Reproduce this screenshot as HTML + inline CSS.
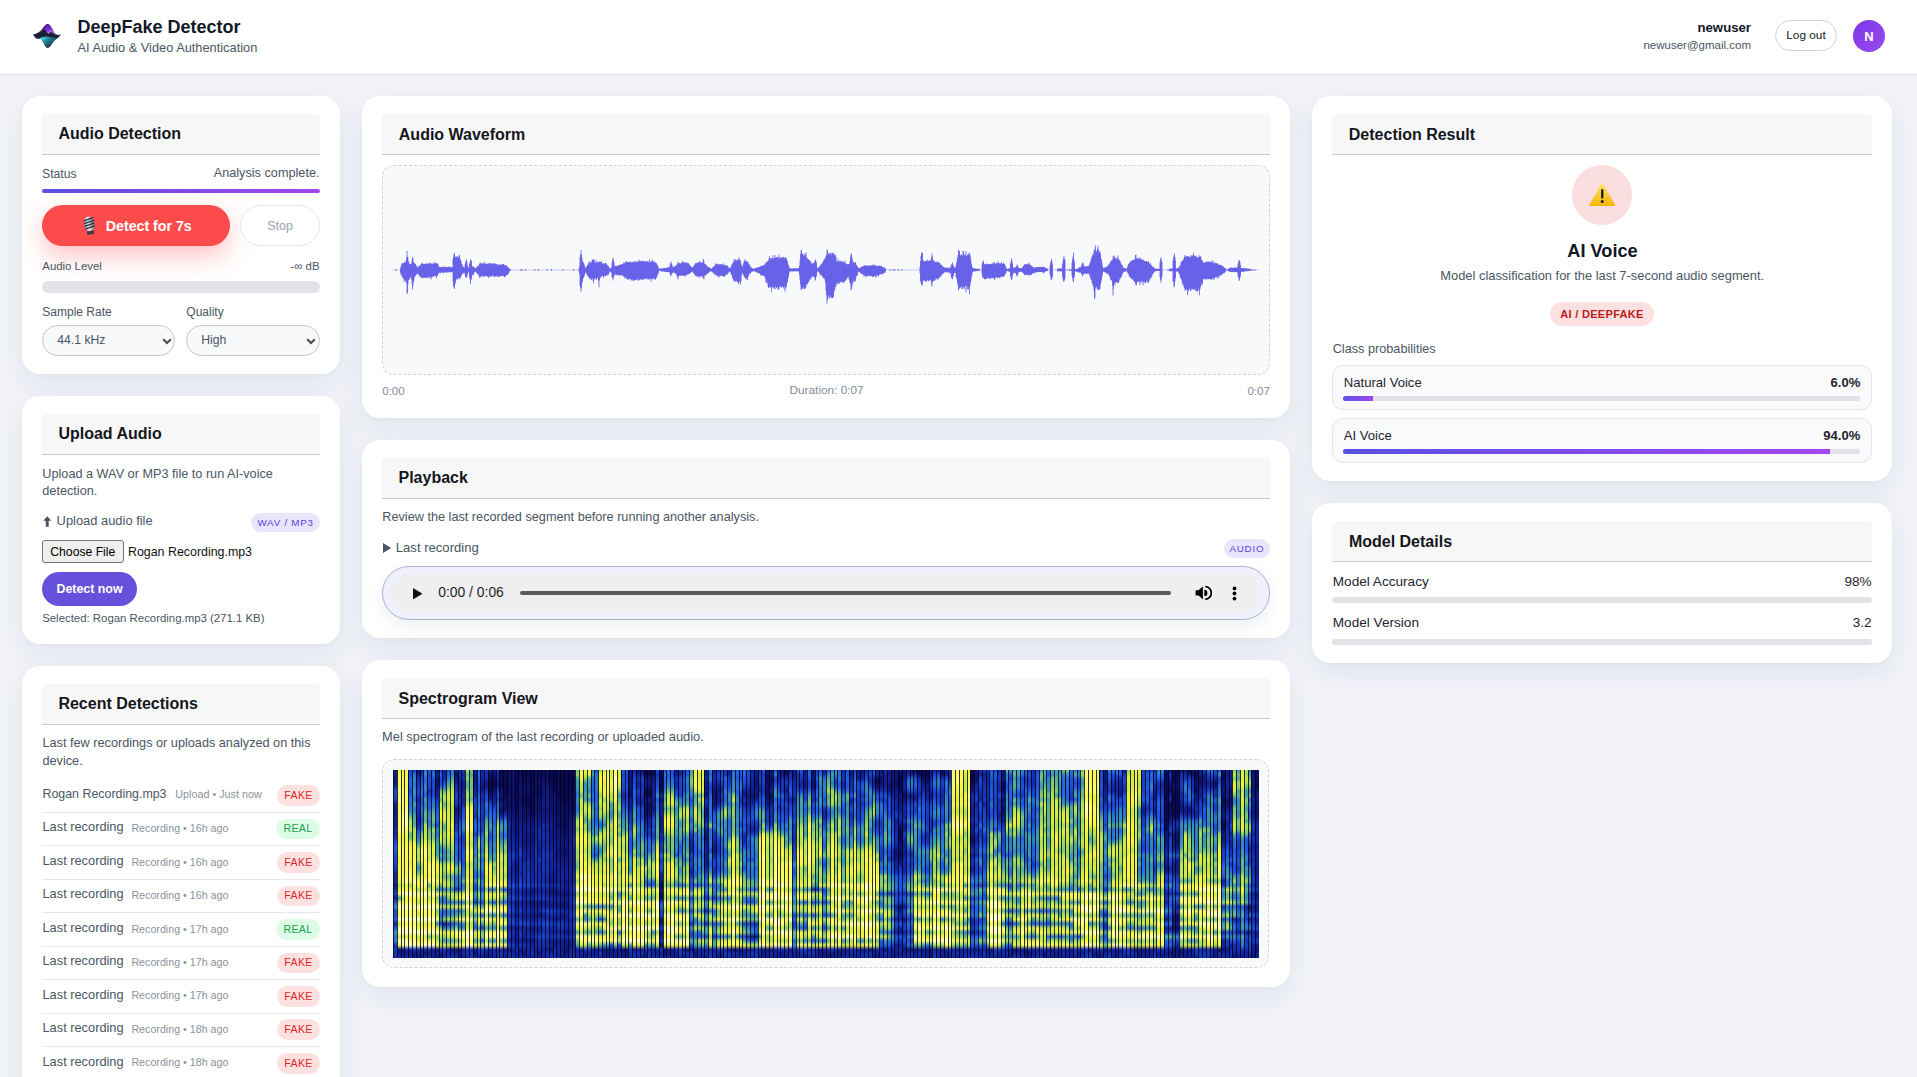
<!DOCTYPE html>
<html><head><meta charset="utf-8"><style>
*{box-sizing:border-box;margin:0;padding:0}
html,body{width:1917px;height:1077px;overflow:hidden}
body{background:#f1f3f8;font-family:"Liberation Sans",sans-serif;position:relative}
.t{position:absolute;white-space:nowrap}
.r{position:absolute}
.card{position:absolute;background:#fff;border-radius:18px;box-shadow:0 10px 28px rgba(40,50,90,0.075),0 1px 3px rgba(40,50,90,0.03)}
.sh{position:absolute;background:#f7f7f7;border-bottom:1px solid #cbcbcb;border-radius:5px 5px 0 0}
</style></head><body>
<div class="r" style="left:0.00px;top:0.00px;width:1917.00px;height:75.00px;background:#fff;border-bottom:1px solid #e3e5ea"></div>
<svg class="r" style="left:28px;top:18px" width="40" height="34" viewBox="0 0 1267 1077">
<defs>
<linearGradient id="lgp" x1="0.3" y1="0" x2="0.7" y2="1"><stop offset="0" stop-color="#5208a0"/><stop offset="0.55" stop-color="#7a30d0"/><stop offset="1" stop-color="#c8a0f8"/></linearGradient>
<radialGradient id="lgc" cx="0.1" cy="0.1" r="1.0"><stop offset="0" stop-color="#40ffff"/><stop offset="0.3" stop-color="#2a9cb0"/><stop offset="0.65" stop-color="#1d5a72"/><stop offset="1" stop-color="#10283c"/></radialGradient>
<linearGradient id="lgd" x1="0" y1="0" x2="0" y2="1"><stop offset="0" stop-color="#1c1226"/><stop offset="1" stop-color="#222a48"/></linearGradient>
</defs>
<path d="M160 510 C260 520 330 470 420 380 C500 290 560 190 615 190 C680 190 740 290 800 400 C850 480 900 540 960 540 C1000 540 1030 520 1040 510 C1010 590 950 640 870 680 C790 740 700 945 620 945 C560 945 480 720 400 650 C340 660 280 680 220 610 C190 570 170 540 160 510Z" fill="url(#lgd)"/>
<path d="M300 520 C380 470 460 330 615 190 C700 200 760 330 820 430 C850 480 880 520 900 530 C860 520 820 500 790 470 L720 445 L640 505 L580 420 L520 345 L420 430 Z" fill="url(#lgp)"/>
<path d="M380 640 C450 600 560 585 650 590 C760 595 850 620 930 630 C880 670 820 700 770 790 C720 870 670 945 620 945 C560 945 500 800 460 720 C430 680 410 655 380 640Z" fill="url(#lgc)" opacity="0.95"/><path d="M430 660 C500 720 560 820 610 840 C680 800 760 700 900 640" fill="none" stroke="#3ad8e8" stroke-width="18" opacity="0.55"/>
</svg>
<div class="t" style="top:17.56px;font-size:18px;line-height:18px;font-weight:700;color:#111827;left:77.50px;">DeepFake Detector</div>
<div class="t" style="top:41.96px;font-size:12.8px;line-height:12.8px;color:#4b5563;left:77.50px;">AI Audio &amp; Video Authentication</div>
<div class="t" style="top:21.03px;font-size:13.2px;line-height:13.2px;font-weight:700;color:#111827;right:166.00px;text-align:right;">newuser</div>
<div class="t" style="top:39.57px;font-size:11.5px;line-height:11.5px;color:#4b5563;right:166.00px;text-align:right;">newuser@gmail.com</div>
<div class="r" style="left:1775.30px;top:20.20px;width:61.50px;height:30.60px;border:1px solid #cfd3da;border-radius:16px;background:#fff"></div>
<div class="t" style="top:29.71px;font-size:11.8px;line-height:11.8px;color:#111827;left:1406.00px;width:800px;text-align:center;">Log out</div>
<div class="r" style="left:1853.00px;top:19.80px;width:32.00px;height:32.00px;border-radius:50%;background:linear-gradient(135deg,#7b35e6,#9b4cf0)"></div>
<div class="t" style="top:29.50px;font-size:13px;line-height:13px;font-weight:700;color:#fff;left:1469.00px;width:800px;text-align:center;">N</div>
<div class="card" style="left:22px;top:96px;width:318px;height:278px"></div>
<div class="card" style="left:22px;top:396px;width:318px;height:248px"></div>
<div class="card" style="left:22px;top:666px;width:318px;height:440px"></div>
<div class="card" style="left:362px;top:96px;width:928px;height:322px"></div>
<div class="card" style="left:362px;top:440px;width:928px;height:198px"></div>
<div class="card" style="left:362px;top:660px;width:928px;height:327px"></div>
<div class="card" style="left:1312px;top:96px;width:580px;height:385px"></div>
<div class="card" style="left:1312px;top:503px;width:580px;height:160px"></div>
<div class="sh" style="left:42px;top:114px;width:278px;height:41px"></div>
<div class="t" style="top:126.26px;font-size:16px;line-height:16px;font-weight:700;color:#14161c;left:58.40px;">Audio Detection</div>
<div class="t" style="top:167.67px;font-size:12.2px;line-height:12.2px;color:#4b5563;left:42.00px;">Status</div>
<div class="t" style="top:167.25px;font-size:12.7px;line-height:12.7px;color:#4b5563;right:1597.50px;text-align:right;">Analysis complete.</div>
<div class="r" style="left:42.00px;top:189.00px;width:278.00px;height:4.00px;border-radius:2px;background:linear-gradient(90deg,#5a50e3,#a446ef)"></div>
<div class="r" style="left:42.00px;top:205.00px;width:188.00px;height:41.00px;border-radius:21px;background:#fc4b4b;box-shadow:0 10px 24px rgba(252,75,75,0.34)"></div>
<svg class="r" style="left:82.5px;top:215.5px;transform:rotate(-9deg)" width="13" height="19" viewBox="0 0 13 19">
<defs><linearGradient id="mg" x1="0" y1="0" x2="1" y2="0"><stop offset="0" stop-color="#7d8894"/><stop offset="0.4" stop-color="#e8edf2"/><stop offset="1" stop-color="#5d6873"/></linearGradient></defs>
<rect x="1.5" y="0.5" width="10" height="14.5" rx="5" fill="url(#mg)"/>
<path d="M1.8 4 L11.2 2.2 M1.6 6.8 L11.4 5 M1.6 9.6 L11.4 7.8 M1.8 12.4 L11.2 10.6" stroke="#28323c" stroke-width="1.3"/>
<rect x="3" y="15" width="7" height="3.5" rx="1" fill="#3a3f45"/>
</svg>
<div class="t" style="top:219.18px;font-size:14.2px;line-height:14.2px;font-weight:700;color:#fff;left:105.80px;">Detect for 7s</div>
<div class="r" style="left:240.00px;top:205.00px;width:79.50px;height:41.00px;border-radius:21px;border:1px solid #e4e6ea;background:#fff"></div>
<div class="t" style="top:219.92px;font-size:12.5px;line-height:12.5px;color:#9ca3af;left:-120.00px;width:800px;text-align:center;">Stop</div>
<div class="t" style="top:260.95px;font-size:11.4px;line-height:11.4px;color:#4b5563;left:42.30px;">Audio Level</div>
<div class="t" style="top:260.95px;font-size:11.4px;line-height:11.4px;color:#4b5563;right:1597.50px;text-align:right;">-&#8734; dB</div>
<div class="r" style="left:42.00px;top:281.20px;width:278.00px;height:11.50px;border-radius:6px;background:#e2e3e8"></div>
<div class="t" style="top:305.94px;font-size:12px;line-height:12px;color:#4b5563;left:42.30px;">Sample Rate</div>
<div class="t" style="top:305.94px;font-size:12px;line-height:12px;color:#4b5563;left:186.30px;">Quality</div>
<div class="r" style="left:42.30px;top:325.20px;width:133.10px;height:30.60px;border-radius:16px;border:1px solid #c4c7cf;background:#f8f9fb"></div>
<div class="t" style="top:334.37px;font-size:12.2px;line-height:12.2px;color:#4b5563;left:57.30px;">44.1 kHz</div>
<svg class="r" style="left:162.0px;top:337.5px" width="10" height="7" viewBox="0 0 10 7"><path d="M1.2 1.2 L5 5 L8.8 1.2" fill="none" stroke="#4a4a4a" stroke-width="2"/></svg>
<div class="r" style="left:186.20px;top:325.20px;width:133.40px;height:30.60px;border-radius:16px;border:1px solid #c4c7cf;background:#f8f9fb"></div>
<div class="t" style="top:334.37px;font-size:12.2px;line-height:12.2px;color:#4b5563;left:201.20px;">High</div>
<svg class="r" style="left:306.2px;top:337.5px" width="10" height="7" viewBox="0 0 10 7"><path d="M1.2 1.2 L5 5 L8.8 1.2" fill="none" stroke="#4a4a4a" stroke-width="2"/></svg>
<div class="sh" style="left:42px;top:413.6px;width:278px;height:41px"></div>
<div class="t" style="top:425.96px;font-size:16px;line-height:16px;font-weight:700;color:#14161c;left:58.40px;">Upload Audio</div>
<div class="t" style="top:467.75px;font-size:12.7px;line-height:12.7px;color:#4b5563;left:42.30px;">Upload a WAV or MP3 file to run AI-voice</div>
<div class="t" style="top:485.25px;font-size:12.7px;line-height:12.7px;color:#4b5563;left:42.30px;">detection.</div>
<svg class="r" style="left:43.3px;top:516px" width="8.5" height="11" viewBox="0 0 8.5 11"><path d="M4.25 0.2 L8.3 4.8 H5.7 V10.8 H2.8 V4.8 H0.2 Z" fill="#4b5563"/></svg>
<div class="t" style="top:515.48px;font-size:12.9px;line-height:12.9px;color:#4b5563;left:56.60px;">Upload audio file</div>
<div class="r" style="left:251.00px;top:513.00px;width:68.80px;height:18.50px;border-radius:10px;background:#e9e5fd"></div>
<div class="t" style="top:518.00px;font-size:9.8px;line-height:9.8px;color:#5442d8;letter-spacing:0.75px;left:-114.40px;width:800px;text-align:center;">WAV / MP3</div>
<div class="r" style="left:42.20px;top:540.30px;width:81.60px;height:23.20px;border:1px solid #767676;border-radius:3px;background:#efefef"></div>
<div class="t" style="top:545.77px;font-size:12.2px;line-height:12.2px;color:#000;left:-317.20px;width:800px;text-align:center;">Choose File</div>
<div class="t" style="top:545.60px;font-size:12.4px;line-height:12.4px;color:#111;left:128.00px;">Rogan Recording.mp3</div>
<div class="r" style="left:42.00px;top:572.00px;width:95.00px;height:33.80px;border-radius:17px;background:#6650dc"></div>
<div class="t" style="top:582.70px;font-size:12.4px;line-height:12.4px;font-weight:700;color:#fff;left:-310.50px;width:800px;text-align:center;">Detect now</div>
<div class="t" style="top:613.15px;font-size:11.4px;line-height:11.4px;color:#4b5563;left:42.20px;">Selected: Rogan Recording.mp3 (271.1 KB)</div>
<div class="sh" style="left:42px;top:683.7px;width:278px;height:41px"></div>
<div class="t" style="top:695.96px;font-size:16px;line-height:16px;font-weight:700;color:#14161c;left:58.40px;">Recent Detections</div>
<div class="t" style="top:737.25px;font-size:12.7px;line-height:12.7px;color:#4b5563;left:42.50px;">Last few recordings or uploads analyzed on this</div>
<div class="t" style="top:754.95px;font-size:12.7px;line-height:12.7px;color:#4b5563;left:42.50px;">device.</div>
<div class="t" style="top:787.60px;font-size:12.4px;line-height:12.4px;color:#4b5563;left:42.50px;">Rogan Recording.mp3</div>
<div class="t" style="top:788.96px;font-size:10.8px;line-height:10.8px;color:#8a919c;left:175.20px;">Upload &#8226; Just now</div>
<div class="r" style="left:277.30px;top:785.10px;width:42.50px;height:20.80px;border-radius:11px;background:#fde1e1"></div>
<div class="t" style="top:789.93px;font-size:10.6px;line-height:10.6px;color:#dc2626;letter-spacing:0.3px;left:-101.50px;width:800px;text-align:center;">FAKE</div>
<div class="r" style="left:42.00px;top:811.70px;width:278.00px;height:1.00px;background:#e6e8ee"></div>
<div class="t" style="top:821.26px;font-size:12.8px;line-height:12.8px;color:#4b5563;left:42.50px;">Last recording</div>
<div class="t" style="top:823.04px;font-size:10.7px;line-height:10.7px;color:#8a919c;left:131.40px;">Recording &#8226; 16h ago</div>
<div class="r" style="left:276.00px;top:818.55px;width:43.80px;height:20.80px;border-radius:11px;background:#dcfce6"></div>
<div class="t" style="top:823.38px;font-size:10.6px;line-height:10.6px;color:#16a34a;letter-spacing:0.3px;left:-102.10px;width:800px;text-align:center;">REAL</div>
<div class="r" style="left:42.00px;top:845.19px;width:278.00px;height:1.00px;background:#e6e8ee"></div>
<div class="t" style="top:854.75px;font-size:12.8px;line-height:12.8px;color:#4b5563;left:42.50px;">Last recording</div>
<div class="t" style="top:856.53px;font-size:10.7px;line-height:10.7px;color:#8a919c;left:131.40px;">Recording &#8226; 16h ago</div>
<div class="r" style="left:277.30px;top:852.04px;width:42.50px;height:20.80px;border-radius:11px;background:#fde1e1"></div>
<div class="t" style="top:856.87px;font-size:10.6px;line-height:10.6px;color:#dc2626;letter-spacing:0.3px;left:-101.50px;width:800px;text-align:center;">FAKE</div>
<div class="r" style="left:42.00px;top:878.68px;width:278.00px;height:1.00px;background:#e6e8ee"></div>
<div class="t" style="top:888.24px;font-size:12.8px;line-height:12.8px;color:#4b5563;left:42.50px;">Last recording</div>
<div class="t" style="top:890.02px;font-size:10.7px;line-height:10.7px;color:#8a919c;left:131.40px;">Recording &#8226; 16h ago</div>
<div class="r" style="left:277.30px;top:885.53px;width:42.50px;height:20.80px;border-radius:11px;background:#fde1e1"></div>
<div class="t" style="top:890.36px;font-size:10.6px;line-height:10.6px;color:#dc2626;letter-spacing:0.3px;left:-101.50px;width:800px;text-align:center;">FAKE</div>
<div class="r" style="left:42.00px;top:912.17px;width:278.00px;height:1.00px;background:#e6e8ee"></div>
<div class="t" style="top:921.73px;font-size:12.8px;line-height:12.8px;color:#4b5563;left:42.50px;">Last recording</div>
<div class="t" style="top:923.51px;font-size:10.7px;line-height:10.7px;color:#8a919c;left:131.40px;">Recording &#8226; 17h ago</div>
<div class="r" style="left:276.00px;top:919.02px;width:43.80px;height:20.80px;border-radius:11px;background:#dcfce6"></div>
<div class="t" style="top:923.85px;font-size:10.6px;line-height:10.6px;color:#16a34a;letter-spacing:0.3px;left:-102.10px;width:800px;text-align:center;">REAL</div>
<div class="r" style="left:42.00px;top:945.66px;width:278.00px;height:1.00px;background:#e6e8ee"></div>
<div class="t" style="top:955.22px;font-size:12.8px;line-height:12.8px;color:#4b5563;left:42.50px;">Last recording</div>
<div class="t" style="top:957.00px;font-size:10.7px;line-height:10.7px;color:#8a919c;left:131.40px;">Recording &#8226; 17h ago</div>
<div class="r" style="left:277.30px;top:952.51px;width:42.50px;height:20.80px;border-radius:11px;background:#fde1e1"></div>
<div class="t" style="top:957.34px;font-size:10.6px;line-height:10.6px;color:#dc2626;letter-spacing:0.3px;left:-101.50px;width:800px;text-align:center;">FAKE</div>
<div class="r" style="left:42.00px;top:979.15px;width:278.00px;height:1.00px;background:#e6e8ee"></div>
<div class="t" style="top:988.71px;font-size:12.8px;line-height:12.8px;color:#4b5563;left:42.50px;">Last recording</div>
<div class="t" style="top:990.49px;font-size:10.7px;line-height:10.7px;color:#8a919c;left:131.40px;">Recording &#8226; 17h ago</div>
<div class="r" style="left:277.30px;top:986.00px;width:42.50px;height:20.80px;border-radius:11px;background:#fde1e1"></div>
<div class="t" style="top:990.83px;font-size:10.6px;line-height:10.6px;color:#dc2626;letter-spacing:0.3px;left:-101.50px;width:800px;text-align:center;">FAKE</div>
<div class="r" style="left:42.00px;top:1012.64px;width:278.00px;height:1.00px;background:#e6e8ee"></div>
<div class="t" style="top:1022.20px;font-size:12.8px;line-height:12.8px;color:#4b5563;left:42.50px;">Last recording</div>
<div class="t" style="top:1023.98px;font-size:10.7px;line-height:10.7px;color:#8a919c;left:131.40px;">Recording &#8226; 18h ago</div>
<div class="r" style="left:277.30px;top:1019.49px;width:42.50px;height:20.80px;border-radius:11px;background:#fde1e1"></div>
<div class="t" style="top:1024.32px;font-size:10.6px;line-height:10.6px;color:#dc2626;letter-spacing:0.3px;left:-101.50px;width:800px;text-align:center;">FAKE</div>
<div class="r" style="left:42.00px;top:1046.13px;width:278.00px;height:1.00px;background:#e6e8ee"></div>
<div class="t" style="top:1055.69px;font-size:12.8px;line-height:12.8px;color:#4b5563;left:42.50px;">Last recording</div>
<div class="t" style="top:1057.47px;font-size:10.7px;line-height:10.7px;color:#8a919c;left:131.40px;">Recording &#8226; 18h ago</div>
<div class="r" style="left:277.30px;top:1052.98px;width:42.50px;height:20.80px;border-radius:11px;background:#fde1e1"></div>
<div class="t" style="top:1057.81px;font-size:10.6px;line-height:10.6px;color:#dc2626;letter-spacing:0.3px;left:-101.50px;width:800px;text-align:center;">FAKE</div>
<div class="r" style="left:42.00px;top:1079.62px;width:278.00px;height:1.00px;background:#e6e8ee"></div>
<div class="sh" style="left:382px;top:114px;width:888px;height:41px"></div>
<div class="t" style="top:126.56px;font-size:16px;line-height:16px;font-weight:700;color:#14161c;left:398.80px;">Audio Waveform</div>
<div class="r" style="left:382.00px;top:165.00px;width:888.00px;height:210.00px;border:1px dashed #cfd3da;border-radius:12px;background:#f8f9fb"></div>
<svg class="r" style="left:393px;top:165px" width="867" height="210"><line x1="0" y1="104.89999999999998" x2="866" y2="104.89999999999998" stroke="#d6d4f3" stroke-width="1.4"/><path d="M3.0 104.0V105.8M7.5 103.2V107.6M8.0 101.6V109.8M8.5 99.7V110.0M9.0 98.6V111.0M9.5 98.2V112.8M10.0 98.5V112.7M10.5 98.6V113.0M11.0 97.8V116.9M11.5 97.5V114.7M12.0 96.8V115.5M12.5 97.9V116.4M13.0 95.9V115.3M13.5 92.9V118.2M14.0 85.9V128.8M14.5 91.6V128.1M15.0 92.8V119.4M15.5 97.2V115.1M16.0 96.7V115.0M16.5 99.0V113.8M17.0 99.8V112.4M17.5 99.0V112.4M18.0 100.8V112.0M18.5 98.4V114.6M19.0 95.1V118.7M19.5 91.9V124.6M20.0 93.2V121.2M20.5 97.2V116.9M21.0 98.3V115.5M21.5 97.9V111.9M22.0 98.9V110.8M22.5 98.9V111.1M23.0 100.0V109.6M23.5 101.0V109.7M24.0 101.9V108.7M24.5 102.7V108.5M25.0 102.4V108.7M25.5 101.6V109.3M26.0 101.2V110.0M26.5 101.3V111.3M27.0 100.0V111.2M27.5 100.3V111.4M28.0 99.4V112.5M28.5 98.7V113.1M29.0 98.7V112.5M29.5 97.6V112.7M30.0 99.5V111.8M30.5 99.1V113.0M31.0 99.0V112.7M31.5 98.9V112.2M32.0 98.9V112.8M32.5 99.0V112.8M33.0 98.6V112.6M33.5 98.2V113.0M34.0 99.1V112.7M34.5 99.2V112.0M35.0 99.0V111.9M35.5 98.1V112.1M36.0 99.1V113.3M36.5 97.9V112.4M37.0 98.1V111.9M37.5 98.8V111.9M38.0 99.2V114.4M38.5 98.8V112.4M39.0 97.9V112.6M39.5 98.9V111.3M40.0 99.1V111.8M40.5 98.9V111.3M41.0 96.8V111.1M41.5 98.7V111.0M42.0 98.1V111.0M42.5 98.1V111.4M43.0 98.0V111.1M43.5 98.9V113.1M44.0 97.8V110.9M44.5 99.1V110.4M45.0 98.8V109.4M45.5 100.8V108.6M46.0 101.9V108.4M46.5 101.9V107.6M47.0 101.8V107.6M47.5 102.0V108.4M48.0 102.3V107.4M48.5 102.3V107.4M49.0 102.0V107.4M49.5 102.1V107.3M50.0 101.8V107.8M50.5 101.8V108.2M51.0 102.2V107.5M51.5 102.1V107.2M52.0 101.3V107.2M52.5 102.3V107.4M53.0 102.0V107.5M53.5 102.2V107.6M54.0 102.0V107.1M54.5 102.0V107.4M55.0 102.1V107.3M55.5 101.9V107.3M56.0 101.3V107.1M56.5 102.2V107.0M57.0 102.0V107.2M57.5 102.4V107.3M58.0 102.1V107.2M58.5 102.2V106.9M59.0 102.3V107.2M59.5 102.2V107.0M60.0 94.3V116.7M60.5 91.6V121.4M61.0 89.0V122.7M61.5 87.7V123.9M62.0 91.6V119.0M62.5 92.4V117.7M63.0 91.6V114.7M63.5 92.2V113.5M64.0 91.3V113.3M64.5 92.6V114.7M65.0 90.9V113.5M65.5 92.9V113.0M66.0 92.1V113.3M66.5 89.9V113.0M67.0 93.3V114.2M67.5 94.9V112.3M68.0 95.9V111.4M68.5 98.5V110.2M69.0 99.0V109.5M69.5 101.4V108.8M70.0 102.0V108.4M70.5 101.6V108.1M71.0 102.5V107.8M71.5 102.8V107.6M72.0 99.6V109.5M72.5 97.7V111.7M73.0 95.4V112.7M73.5 94.7V113.0M74.0 96.8V111.2M74.5 100.2V109.3M75.0 102.9V107.0M75.5 102.7V107.3M76.0 102.4V107.6M76.5 99.0V112.5M77.0 96.8V114.6M77.5 94.2V119.1M78.0 96.4V115.0M78.5 95.6V113.7M79.0 101.0V110.2M79.5 101.6V109.4M80.0 101.3V110.2M80.5 101.7V110.1M81.0 102.2V108.0M81.5 102.9V107.3M82.0 103.2V106.6M82.5 103.2V106.5M83.0 103.0V107.0M83.5 102.1V107.8M84.0 101.9V108.4M84.5 101.6V108.6M85.0 100.9V109.3M85.5 100.6V109.5M86.0 100.0V110.6M86.5 99.0V112.5M87.0 97.7V112.8M87.5 97.9V111.6M88.0 98.7V111.5M88.5 98.7V110.8M89.0 99.2V110.6M89.5 98.0V111.6M90.0 98.8V110.8M90.5 99.2V111.5M91.0 96.8V110.8M91.5 98.8V111.9M92.0 99.0V111.0M92.5 98.7V110.6M93.0 98.0V110.8M93.5 99.2V111.1M94.0 99.2V110.6M94.5 98.9V111.6M95.0 98.9V111.9M95.5 98.3V113.0M96.0 98.2V111.8M96.5 99.2V110.9M97.0 97.9V111.1M97.5 98.6V111.8M98.0 98.2V111.7M98.5 98.8V111.0M99.0 99.2V110.8M99.5 99.2V110.6M100.0 97.9V111.8M100.5 99.1V110.7M101.0 98.6V110.9M101.5 98.3V111.6M102.0 99.1V111.7M102.5 98.7V111.6M103.0 98.9V110.7M103.5 98.9V111.1M104.0 99.4V111.7M104.5 100.0V111.2M105.0 99.5V110.6M105.5 100.2V111.9M106.0 100.0V111.8M106.5 99.4V111.9M107.0 99.5V110.8M107.5 99.9V110.9M108.0 99.9V110.5M108.5 99.8V111.0M109.0 99.3V110.6M109.5 99.2V111.4M110.0 99.2V111.0M110.5 99.1V110.7M111.0 100.0V111.3M111.5 100.4V112.3M112.0 99.9V110.4M112.5 100.2V111.9M113.0 100.7V110.4M113.5 100.9V109.9M114.0 101.4V110.0M114.5 101.5V109.9M115.0 102.4V109.2M115.5 102.9V108.2M116.0 103.3V107.3M116.5 104.0V106.2M117.5 104.0V105.8M128.0 104.0V105.8M129.0 104.0V105.8M132.5 104.0V105.8M142.0 104.0V105.8M145.5 104.0V105.8M154.0 104.0V105.8M158.5 104.0V105.8M170.0 104.0V105.8M180.5 104.0V105.8M186.0 103.3V106.6M186.5 101.7V108.8M187.0 92.0V121.2M187.5 89.8V122.4M188.0 85.1V126.6M188.5 89.1V123.3M189.0 93.0V117.9M189.5 96.5V116.6M190.0 97.6V113.9M190.5 97.2V112.5M191.0 98.7V111.9M191.5 100.2V110.4M192.0 102.1V108.7M192.5 103.1V107.3M193.0 102.8V107.4M193.5 101.9V108.6M194.0 101.0V109.6M194.5 100.0V110.7M195.0 99.5V110.8M195.5 98.6V111.9M196.0 96.1V112.4M196.5 97.4V113.2M197.0 97.7V114.3M197.5 98.0V113.1M198.0 97.2V114.2M198.5 97.3V115.0M199.0 95.0V113.6M199.5 95.0V113.2M200.0 94.2V115.8M200.5 94.3V118.3M201.0 94.6V114.8M201.5 96.4V113.9M202.0 97.7V114.2M202.5 97.9V112.7M203.0 95.0V113.5M203.5 96.8V114.8M204.0 97.8V113.1M204.5 97.5V112.8M205.0 97.5V113.4M205.5 97.3V116.0M206.0 96.4V122.3M206.5 96.6V115.1M207.0 96.9V112.4M207.5 97.0V112.6M208.0 98.2V112.4M208.5 96.2V111.3M209.0 98.2V111.0M209.5 98.6V110.9M210.0 98.9V110.7M210.5 98.3V112.8M211.0 98.5V111.2M211.5 99.5V110.5M212.0 98.8V111.3M212.5 98.1V111.0M213.0 98.4V111.0M213.5 98.6V109.9M214.0 100.1V109.8M214.5 100.6V110.1M215.0 100.3V110.1M215.5 101.4V109.5M216.0 102.3V108.2M216.5 103.1V106.7M217.0 103.5V106.1M217.5 103.5V106.8M218.0 103.2V107.5M218.5 102.7V107.7M219.0 98.2V112.5M219.5 95.3V112.7M220.0 92.4V115.4M220.5 94.8V112.6M221.0 97.0V111.5M221.5 100.4V109.9M222.0 101.6V109.5M222.5 101.1V109.3M223.0 101.5V109.4M223.5 101.0V110.2M224.0 100.7V109.5M224.5 100.8V109.8M225.0 101.0V110.2M225.5 100.5V110.4M226.0 100.0V110.0M226.5 100.2V110.1M227.0 100.3V109.9M227.5 99.5V110.7M228.0 99.5V109.8M228.5 99.2V110.1M229.0 99.7V110.5M229.5 99.4V109.9M230.0 99.0V111.1M230.5 97.4V111.4M231.0 99.0V111.7M231.5 97.8V112.2M232.0 98.1V113.4M232.5 97.5V112.5M233.0 96.2V113.3M233.5 96.5V113.3M234.0 97.3V113.7M234.5 97.1V114.9M235.0 96.9V113.6M235.5 97.1V114.5M236.0 97.6V113.7M236.5 97.0V113.3M237.0 97.6V114.5M237.5 96.3V114.0M238.0 97.9V115.3M238.5 97.3V114.4M239.0 97.6V115.6M239.5 97.4V114.3M240.0 96.6V115.4M240.5 96.7V115.3M241.0 96.8V115.7M241.5 98.0V115.3M242.0 96.3V114.9M242.5 96.4V114.9M243.0 97.1V115.1M243.5 96.9V114.3M244.0 96.3V114.5M244.5 97.2V113.7M245.0 97.6V115.4M245.5 96.2V115.4M246.0 94.5V113.4M246.5 96.8V115.2M247.0 95.8V114.4M247.5 96.9V114.0M248.0 95.8V114.6M248.5 96.8V114.0M249.0 95.9V115.1M249.5 96.3V115.1M250.0 95.9V113.4M250.5 95.8V114.1M251.0 96.1V114.7M251.5 96.7V113.4M252.0 96.5V113.4M252.5 96.4V113.8M253.0 97.4V113.9M253.5 96.3V113.0M254.0 96.5V114.4M254.5 96.6V113.6M255.0 95.8V114.2M255.5 97.4V114.6M256.0 97.4V114.1M256.5 94.5V113.2M257.0 97.1V114.5M257.5 97.3V113.2M258.0 97.1V116.6M258.5 96.2V114.2M259.0 94.7V113.5M259.5 96.3V113.7M260.0 97.3V114.3M260.5 96.2V113.5M261.0 97.5V113.7M261.5 96.6V113.5M262.0 97.6V115.0M262.5 97.8V114.1M263.0 97.9V113.3M263.5 98.5V112.3M264.0 99.8V111.8M264.5 100.1V109.8M265.0 101.7V108.9M265.5 102.6V107.5M266.0 103.4V106.2M267.0 103.7V106.0M267.5 103.7V106.0M268.0 103.6V106.2M268.5 103.6V106.3M269.0 103.5V106.2M269.5 103.5V106.4M270.0 103.4V106.4M270.5 103.4V106.4M271.0 103.3V106.5M271.5 103.0V106.8M272.0 103.3V106.8M272.5 103.0V106.9M273.0 102.8V106.8M273.5 103.0V107.1M274.0 103.0V106.8M274.5 102.1V107.0M275.0 102.5V107.0M275.5 102.4V107.2M276.0 102.5V107.1M276.5 102.5V107.2M277.0 100.0V108.7M277.5 98.3V110.7M278.0 96.4V110.9M278.5 98.7V109.3M279.0 99.6V108.7M279.5 101.3V107.7M280.0 102.1V107.7M280.5 101.9V107.4M281.0 102.2V107.7M281.5 101.3V107.6M282.0 101.9V107.7M282.5 101.0V108.5M283.0 100.5V108.7M283.5 100.0V109.6M284.0 99.4V111.0M284.5 98.9V112.7M285.0 96.9V114.5M285.5 98.1V111.6M286.0 98.3V110.8M286.5 98.1V110.5M287.0 98.5V109.9M287.5 98.5V110.8M288.0 98.5V110.5M288.5 97.8V109.9M289.0 97.7V111.1M289.5 95.9V110.1M290.0 97.3V110.2M290.5 97.3V110.9M291.0 97.3V110.6M291.5 97.3V110.1M292.0 98.1V111.7M292.5 97.8V110.3M293.0 97.2V110.6M293.5 98.4V109.8M294.0 97.6V109.6M294.5 98.5V109.4M295.0 97.7V109.2M295.5 98.3V109.2M296.0 99.2V108.9M296.5 99.7V108.8M297.0 100.7V108.2M297.5 101.3V107.6M298.0 101.3V107.7M298.5 102.0V107.1M299.0 102.8V106.7M299.5 103.3V106.3M300.0 102.0V107.3M300.5 101.6V107.8M301.0 100.9V108.7M301.5 99.9V109.3M302.0 98.5V110.3M302.5 98.5V110.5M303.0 97.9V111.3M303.5 98.5V111.3M304.0 98.0V110.6M304.5 97.8V111.5M305.0 97.1V111.6M305.5 98.0V110.8M306.0 97.4V113.0M306.5 95.9V111.1M307.0 98.3V111.0M307.5 97.2V111.4M308.0 97.2V111.8M308.5 98.1V111.6M309.0 98.4V111.1M309.5 97.5V110.6M310.0 96.2V112.9M310.5 94.0V113.5M311.0 95.9V114.2M311.5 99.1V110.8M312.0 99.5V110.3M312.5 99.2V109.8M313.0 99.7V108.9M313.5 100.6V110.1M314.0 101.3V108.9M314.5 101.5V108.0M315.0 101.7V107.9M315.5 102.4V108.3M316.0 102.7V107.2M316.5 102.3V106.9M317.0 103.2V106.5M317.5 103.6V106.2M318.0 103.8V106.1M318.5 103.7V106.4M319.0 103.2V106.7M319.5 102.7V107.1M320.0 102.1V107.8M320.5 101.9V108.3M321.0 101.1V108.4M321.5 101.2V108.9M322.0 100.3V109.4M322.5 98.3V109.6M323.0 99.3V110.5M323.5 99.7V110.1M324.0 99.0V110.8M324.5 98.7V110.9M325.0 99.2V111.5M325.5 99.4V111.4M326.0 98.8V112.7M326.5 99.7V110.7M327.0 99.4V110.7M327.5 99.1V110.8M328.0 99.2V110.6M328.5 99.6V110.6M329.0 99.1V111.1M329.5 99.9V111.2M330.0 98.4V110.5M330.5 100.4V110.8M331.0 99.9V112.0M331.5 99.7V111.9M332.0 100.1V110.5M332.5 100.7V109.7M333.0 100.2V110.0M333.5 100.5V110.1M334.0 100.5V109.5M334.5 101.0V109.0M335.0 101.8V108.3M335.5 102.5V107.5M336.0 102.7V107.2M336.5 102.9V106.5M337.0 103.9V106.0M337.5 102.8V106.9M338.0 101.7V109.3M338.5 100.4V109.4M339.0 99.4V110.7M339.5 98.7V112.9M340.0 98.0V113.8M340.5 97.0V115.0M341.0 94.1V116.5M341.5 95.6V116.0M342.0 94.5V116.5M342.5 95.7V116.3M343.0 94.2V115.6M343.5 95.5V115.7M344.0 95.8V116.6M344.5 94.9V117.1M345.0 95.3V116.9M345.5 94.2V119.3M346.0 92.3V117.4M346.5 95.8V116.8M347.0 94.6V115.3M347.5 95.6V119.5M348.0 98.4V116.3M348.5 99.9V111.0M349.0 103.1V107.0M349.5 101.7V107.9M350.0 100.3V109.3M350.5 98.4V109.9M351.0 96.2V111.3M351.5 95.7V112.3M352.0 94.1V111.3M352.5 96.6V113.9M353.0 96.1V112.2M353.5 96.1V113.5M354.0 96.6V114.5M354.5 97.0V115.0M355.0 96.8V112.1M355.5 98.8V111.0M356.0 99.6V109.4M356.5 99.6V108.7M357.0 100.7V108.6M357.5 102.0V108.1M358.0 102.4V107.5M358.5 102.8V106.8M359.0 103.2V106.7M359.5 103.4V106.4M360.0 103.7V106.3M360.5 103.9V105.9M361.0 103.6V106.1M361.5 103.5V106.3M362.0 103.4V106.6M362.5 103.1V106.6M363.0 102.9V106.9M363.5 103.0V107.2M364.0 102.7V107.3M364.5 102.4V107.8M365.0 102.2V107.8M365.5 102.1V108.1M366.0 102.0V108.2M366.5 102.1V108.5M367.0 101.7V108.8M367.5 101.3V109.6M368.0 101.0V110.8M368.5 101.1V109.6M369.0 101.0V110.2M369.5 100.8V110.4M370.0 100.1V110.8M370.5 100.5V110.2M371.0 100.1V111.0M371.5 100.5V111.4M372.0 98.8V112.4M372.5 98.6V113.9M373.0 97.6V118.1M373.5 96.8V116.8M374.0 97.1V117.2M374.5 96.5V118.0M375.0 95.9V121.3M375.5 95.4V122.5M376.0 93.1V123.1M376.5 91.2V122.0M377.0 94.6V121.2M377.5 93.1V122.4M378.0 95.0V121.5M378.5 93.0V127.1M379.0 93.7V121.9M379.5 93.5V121.9M380.0 90.4V122.8M380.5 93.4V122.3M381.0 94.0V123.9M381.5 92.6V123.2M382.0 90.0V124.4M382.5 92.8V121.1M383.0 92.8V121.8M383.5 92.2V123.1M384.0 93.5V122.0M384.5 91.8V122.0M385.0 92.2V124.9M385.5 93.6V124.6M386.0 89.6V123.7M386.5 93.5V121.8M387.0 92.8V121.4M387.5 92.0V121.3M388.0 93.2V120.8M388.5 93.7V122.7M389.0 92.3V122.2M389.5 92.1V120.9M390.0 91.8V122.4M390.5 92.3V122.2M391.0 93.0V123.6M391.5 94.0V120.7M392.0 92.0V126.8M392.5 92.7V123.7M393.0 92.5V120.2M393.5 93.9V122.3M394.0 95.3V117.6M394.5 96.5V117.2M395.0 99.0V114.0M395.5 100.4V111.6M396.0 101.5V108.7M396.5 103.4V106.7M397.0 103.6V106.2M397.5 103.5V106.3M398.0 103.6V106.3M398.5 103.6V106.3M399.0 103.6V106.4M399.5 103.6V106.4M400.0 103.5V106.4M400.5 103.1V106.2M401.0 103.5V106.2M401.5 103.5V106.2M402.0 103.4V106.2M402.5 103.3V106.2M403.0 103.4V106.3M403.5 103.4V106.2M404.0 103.5V106.2M404.5 103.4V106.2M405.0 103.6V106.2M405.5 103.3V106.4M406.0 103.0V106.9M406.5 100.6V110.3M407.0 95.7V115.5M407.5 89.3V119.6M408.0 85.4V124.8M408.5 84.8V124.8M409.0 89.0V123.6M409.5 88.6V122.6M410.0 88.6V123.6M410.5 91.0V121.3M411.0 90.1V124.1M411.5 90.5V123.6M412.0 88.7V123.8M412.5 90.0V123.2M413.0 87.4V122.1M413.5 93.3V118.8M414.0 92.3V119.1M414.5 93.6V119.4M415.0 94.9V116.8M415.5 94.2V117.4M416.0 96.2V116.4M416.5 95.0V114.5M417.0 96.4V114.6M417.5 96.5V113.0M418.0 97.4V114.0M418.5 99.0V111.9M419.0 98.9V111.0M419.5 98.1V111.3M420.0 98.0V111.5M420.5 98.6V111.9M421.0 98.4V111.1M421.5 96.8V111.9M422.0 96.2V114.6M422.5 94.3V115.5M423.0 96.0V112.0M423.5 98.0V111.3M424.0 102.2V107.3M424.5 103.4V106.3M425.0 103.5V106.2M425.5 102.7V106.9M426.0 102.0V107.5M426.5 101.4V108.2M427.0 101.1V108.5M427.5 99.9V110.3M428.0 99.7V109.6M428.5 99.2V110.0M429.0 98.4V110.8M429.5 97.6V111.3M430.0 97.3V112.7M430.5 95.8V113.1M431.0 94.8V113.1M431.5 94.1V113.3M432.0 93.7V115.3M432.5 91.8V117.9M433.0 91.8V125.5M433.5 89.8V130.4M434.0 84.4V138.8M434.5 85.9V135.8M435.0 87.7V130.3M435.5 89.3V130.3M436.0 89.8V133.1M436.5 88.1V133.3M437.0 90.3V130.5M437.5 88.1V131.4M438.0 89.5V133.0M438.5 90.0V131.9M439.0 87.3V133.3M439.5 88.2V133.1M440.0 88.0V131.6M440.5 88.6V132.2M441.0 91.0V126.3M441.5 90.3V125.7M442.0 88.9V123.6M442.5 90.3V121.4M443.0 91.8V121.3M443.5 96.5V117.5M444.0 96.2V118.4M444.5 96.5V119.1M445.0 93.5V118.8M445.5 96.3V116.7M446.0 96.0V117.5M446.5 96.8V118.8M447.0 95.5V117.2M447.5 96.5V116.5M448.0 96.2V117.3M448.5 96.8V116.8M449.0 96.7V117.1M449.5 97.4V116.6M450.0 96.1V117.8M450.5 96.6V117.6M451.0 97.9V117.9M451.5 97.7V116.2M452.0 95.6V115.4M452.5 98.2V116.1M453.0 98.9V113.6M453.5 98.8V114.7M454.0 99.1V113.6M454.5 99.4V112.3M455.0 100.3V112.2M455.5 99.2V111.5M456.0 98.9V114.3M456.5 99.2V115.2M457.0 95.8V117.9M457.5 91.7V119.5M458.0 88.8V125.2M458.5 88.7V124.4M459.0 92.4V121.6M459.5 94.9V117.2M460.0 97.3V118.4M460.5 97.2V115.2M461.0 97.6V115.8M461.5 97.8V116.4M462.0 97.6V116.6M462.5 97.1V115.5M463.0 99.3V112.6M463.5 100.2V111.2M464.0 100.9V110.6M464.5 101.4V110.1M465.0 102.5V107.3M465.5 103.5V106.5M466.0 103.4V106.8M466.5 103.2V107.2M467.0 102.8V107.5M467.5 102.8V107.4M468.0 102.4V108.9M468.5 101.9V108.6M469.0 101.8V108.5M469.5 101.3V109.1M470.0 101.2V109.8M470.5 101.3V109.5M471.0 100.9V111.5M471.5 100.7V109.9M472.0 100.6V110.5M472.5 100.5V111.1M473.0 100.3V112.2M473.5 100.5V111.1M474.0 101.0V111.3M474.5 100.9V110.5M475.0 101.1V110.7M475.5 100.3V111.1M476.0 100.4V110.5M476.5 101.1V110.5M477.0 100.8V111.2M477.5 100.4V111.0M478.0 100.8V111.1M478.5 100.2V110.5M479.0 100.6V111.6M479.5 100.5V111.7M480.0 99.5V111.6M480.5 100.5V111.8M481.0 100.5V111.4M481.5 99.5V110.8M482.0 100.9V110.9M482.5 100.6V111.5M483.0 100.9V112.8M483.5 101.0V110.4M484.0 100.5V111.0M484.5 101.3V110.1M485.0 100.9V110.3M485.5 100.8V111.7M486.0 101.0V109.7M486.5 100.4V109.6M487.0 101.2V109.3M487.5 101.4V109.2M488.0 101.3V109.2M488.5 100.9V108.7M489.0 102.1V109.4M489.5 102.2V109.0M490.0 102.0V108.3M490.5 102.3V108.3M491.0 102.7V107.7M491.5 102.8V108.1M492.0 103.2V107.4M492.5 103.7V106.3M497.0 104.0V105.8M500.0 104.0V105.8M502.0 104.0V105.8M505.5 104.0V105.8M509.0 104.0V105.8M527.0 101.9V108.3M527.5 95.9V116.0M528.0 90.9V118.2M528.5 88.2V119.8M529.0 87.1V120.8M529.5 88.1V118.9M530.0 94.8V114.6M530.5 96.4V115.5M531.0 96.4V116.1M531.5 96.5V114.9M532.0 96.2V116.0M532.5 95.8V116.5M533.0 95.8V116.0M533.5 96.4V116.5M534.0 96.1V114.9M534.5 94.7V114.6M535.0 96.4V116.0M535.5 95.9V116.2M536.0 96.7V116.1M536.5 94.8V115.1M537.0 96.2V115.1M537.5 96.0V114.5M538.0 95.0V115.8M538.5 92.4V119.4M539.0 88.2V121.7M539.5 91.7V117.3M540.0 95.3V114.9M540.5 95.4V115.9M541.0 95.4V115.6M541.5 97.2V115.7M542.0 96.7V115.4M542.5 97.1V114.3M543.0 97.0V113.5M543.5 97.5V113.5M544.0 96.9V114.1M544.5 97.3V114.5M545.0 96.4V114.6M545.5 97.3V113.0M546.0 97.8V113.1M546.5 98.1V112.1M547.0 98.1V112.4M547.5 99.8V111.6M548.0 99.7V110.4M548.5 99.8V110.2M549.0 100.3V109.5M549.5 101.1V109.1M550.0 101.7V108.5M550.5 102.1V108.1M551.0 102.6V107.8M551.5 102.6V106.9M552.0 102.7V107.2M552.5 102.9V106.9M553.0 102.6V107.4M553.5 102.8V107.0M554.0 102.8V107.3M554.5 102.8V107.3M555.0 103.0V107.2M555.5 102.9V107.2M556.0 102.7V107.6M556.5 102.7V107.6M557.0 102.9V108.2M557.5 102.6V107.5M558.0 100.9V110.3M558.5 99.4V112.9M559.0 98.5V113.6M559.5 97.6V114.2M560.0 99.8V112.0M560.5 101.1V110.5M561.0 102.8V108.0M561.5 102.7V107.5M562.0 102.7V108.0M562.5 102.5V107.9M563.0 100.8V111.9M563.5 98.0V113.2M564.0 95.6V114.9M564.5 92.8V118.0M565.0 90.2V120.4M565.5 84.6V125.6M566.0 87.8V122.1M566.5 86.0V123.7M567.0 90.2V122.5M567.5 90.6V122.6M568.0 90.2V121.9M568.5 89.2V121.6M569.0 90.6V124.1M569.5 90.7V123.8M570.0 86.0V121.3M570.5 86.0V121.4M571.0 89.3V123.4M571.5 89.9V124.2M572.0 90.3V121.3M572.5 90.5V120.9M573.0 86.0V127.4M573.5 91.3V120.6M574.0 91.4V121.2M574.5 89.5V124.3M575.0 90.3V122.1M575.5 88.6V124.4M576.0 90.8V121.1M576.5 87.8V129.1M577.0 89.7V121.3M577.5 92.3V117.7M578.0 95.6V115.6M578.5 99.1V111.7M579.0 101.2V110.0M579.5 103.1V107.2M580.0 103.5V106.4M580.5 103.4V106.4M581.0 103.6V106.1M581.5 103.5V106.3M582.0 103.7V106.2M582.5 103.8V106.2M583.0 103.6V106.0M583.5 103.9V106.1M584.0 103.8V106.0M584.5 103.8V105.9M585.0 103.8V105.9M585.5 103.9V105.9M586.5 103.9V105.9M589.0 100.1V108.9M589.5 96.9V111.7M590.0 96.9V113.4M590.5 95.6V112.8M591.0 98.8V112.8M591.5 99.7V114.2M592.0 99.6V114.1M592.5 99.1V114.2M593.0 99.2V114.0M593.5 98.7V113.9M594.0 99.6V113.3M594.5 98.7V112.7M595.0 99.3V112.7M595.5 99.2V112.8M596.0 98.8V113.4M596.5 99.3V114.1M597.0 99.0V114.0M597.5 99.3V112.3M598.0 99.3V113.3M598.5 98.7V112.8M599.0 98.9V113.7M599.5 98.8V112.7M600.0 97.2V112.2M600.5 99.3V113.0M601.0 98.6V113.2M601.5 97.1V115.1M602.0 98.9V113.7M602.5 99.4V112.7M603.0 98.3V111.9M603.5 98.2V112.1M604.0 98.1V112.7M604.5 98.7V113.0M605.0 96.2V112.0M605.5 98.1V112.3M606.0 97.9V113.3M606.5 99.0V112.7M607.0 98.0V111.8M607.5 99.1V112.3M608.0 98.6V112.1M608.5 96.8V111.1M609.0 98.9V112.2M609.5 98.9V111.1M610.0 98.8V112.0M610.5 98.1V111.4M611.0 98.4V110.9M611.5 99.0V110.5M612.0 100.1V109.9M612.5 101.4V108.5M613.0 102.2V108.2M613.5 103.6V106.4M614.5 103.9V106.0M615.0 103.8V106.1M615.5 103.6V106.2M616.0 103.6V106.4M616.5 103.4V106.7M617.0 103.3V107.1M617.5 98.6V111.5M618.0 96.5V113.5M618.5 93.3V115.3M619.0 95.1V113.9M619.5 98.2V110.7M620.0 102.2V108.0M620.5 102.6V108.5M621.0 102.7V107.9M621.5 102.8V107.8M622.0 102.8V107.4M622.5 102.6V107.8M623.0 101.7V108.9M623.5 101.3V110.1M624.0 99.5V111.5M624.5 100.7V110.5M625.0 101.7V109.1M625.5 103.0V107.2M626.0 103.1V107.0M626.5 103.2V106.9M627.0 103.2V106.7M627.5 103.2V106.7M628.0 103.4V106.5M628.5 103.4V106.5M629.0 103.1V106.7M629.5 102.4V107.4M630.0 101.9V108.0M630.5 100.9V108.5M631.0 100.5V108.5M631.5 99.4V110.0M632.0 99.5V109.4M632.5 99.3V109.7M633.0 99.0V110.3M633.5 99.3V109.7M634.0 99.7V109.5M634.5 98.8V109.6M635.0 99.4V109.5M635.5 99.7V110.3M636.0 97.7V109.8M636.5 98.8V110.5M637.0 99.9V110.1M637.5 100.6V109.5M638.0 100.7V109.5M638.5 100.7V110.0M639.0 101.3V108.8M639.5 101.8V108.2M640.0 102.0V108.5M640.5 102.4V108.3M641.0 102.7V107.5M641.5 102.8V107.8M642.0 102.8V107.5M642.5 102.3V107.6M643.0 102.2V107.1M643.5 102.3V107.4M644.0 102.3V106.8M644.5 102.2V107.0M645.0 102.0V107.0M645.5 102.1V107.0M646.0 102.3V107.2M646.5 102.0V107.0M647.0 101.8V107.0M647.5 102.1V106.9M648.0 102.2V107.0M648.5 102.1V106.9M649.0 102.1V107.0M649.5 102.1V107.2M650.0 102.4V107.5M650.5 101.3V108.3M651.0 102.2V107.9M651.5 102.4V106.9M652.0 102.7V106.5M652.5 103.0V106.5M653.0 103.1V106.3M653.5 103.4V106.1M654.0 103.6V106.0M654.5 103.8V105.9M657.0 100.6V109.6M657.5 97.8V111.2M658.0 96.3V114.7M658.5 93.8V114.8M659.0 96.2V113.4M659.5 99.5V111.4M664.5 103.8V106.3M665.0 103.7V106.0M665.5 103.7V106.2M666.0 103.7V106.3M666.5 103.5V106.2M667.0 103.6V106.2M667.5 103.6V106.2M668.0 103.6V106.2M668.5 103.5V106.3M669.0 103.4V106.2M669.5 98.9V111.3M670.0 95.9V114.1M670.5 93.2V116.4M671.0 90.8V116.5M671.5 94.5V115.2M672.0 94.2V113.1M674.0 104.0V105.8M676.5 104.0V105.8M677.0 104.2V106.2M678.5 104.0V106.1M679.0 97.9V110.9M679.5 94.3V112.8M680.0 91.6V116.3M680.5 87.6V116.9M681.0 94.6V112.9M681.5 97.3V110.6M682.0 104.1V106.3M682.5 104.1V106.3M683.0 104.2V106.4M683.5 104.2V106.3M684.0 103.9V106.6M684.5 103.7V106.6M685.0 103.6V107.4M685.5 103.3V107.2M686.0 102.9V107.0M686.5 102.2V107.5M687.0 101.9V107.5M687.5 102.5V107.4M688.0 102.1V107.6M688.5 101.0V109.3M689.0 98.9V109.1M689.5 97.5V111.3M690.0 97.8V110.5M690.5 99.7V108.9M691.0 101.1V108.3M691.5 101.7V108.7M692.0 101.7V108.4M692.5 101.5V108.4M693.0 101.0V108.7M693.5 101.6V108.7M694.0 101.0V108.5M694.5 101.7V108.7M695.0 101.3V108.2M695.5 101.7V108.5M696.0 100.2V108.8M696.5 99.3V109.9M697.0 98.1V111.8M697.5 96.8V112.9M698.0 94.6V114.8M698.5 93.3V115.1M699.0 91.5V118.0M699.5 90.4V118.4M700.0 88.9V121.1M700.5 89.7V121.6M701.0 86.1V126.4M701.5 83.8V134.2M702.0 86.7V132.6M702.5 80.6V123.4M703.0 86.4V121.8M703.5 86.9V121.9M704.0 85.5V123.9M704.5 83.9V123.4M705.0 80.6V125.4M705.5 84.6V124.7M706.0 87.3V124.1M706.5 87.2V124.8M707.0 86.0V123.7M707.5 89.1V119.9M708.0 93.3V117.2M708.5 94.6V115.2M709.0 97.8V112.0M709.5 100.9V109.4M710.0 103.3V106.6M710.5 103.3V106.5M711.0 103.1V106.9M711.5 102.6V106.8M712.0 102.8V107.2M712.5 102.4V107.6M713.0 102.3V107.5M713.5 101.8V107.9M714.0 101.3V109.0M714.5 101.8V108.0M715.0 100.8V109.3M715.5 100.2V109.1M716.0 99.4V109.9M716.5 98.9V111.0M717.0 97.7V112.1M717.5 96.8V114.9M718.0 96.0V113.8M718.5 95.4V115.1M719.0 95.6V116.0M719.5 95.0V120.9M720.0 90.7V130.7M720.5 92.6V124.3M721.0 93.3V119.7M721.5 90.5V118.1M722.0 92.7V120.2M722.5 93.3V117.7M723.0 94.3V117.4M723.5 94.1V117.1M724.0 92.5V116.2M724.5 94.0V117.7M725.0 90.5V118.0M725.5 93.6V118.0M726.0 94.5V116.3M726.5 95.6V114.3M727.0 95.8V114.2M727.5 97.2V112.4M728.0 98.6V112.7M728.5 99.8V111.4M729.0 99.8V110.2M729.5 100.7V108.7M730.0 102.2V107.9M730.5 102.8V106.9M731.0 103.2V106.9M731.5 103.1V106.7M732.0 103.3V106.4M732.5 103.5V106.2M733.0 103.8V106.0M734.0 102.9V106.8M734.5 101.8V107.3M735.0 100.4V108.6M735.5 99.3V108.9M736.0 98.8V110.5M736.5 97.8V111.5M737.0 97.2V112.2M737.5 96.5V112.6M738.0 97.1V112.5M738.5 96.2V113.8M739.0 95.1V114.1M739.5 95.3V114.3M740.0 95.7V114.3M740.5 95.0V115.6M741.0 94.7V116.2M741.5 94.1V116.5M742.0 95.3V117.3M742.5 90.1V118.9M743.0 89.7V120.6M743.5 93.7V119.7M744.0 93.8V117.1M744.5 93.3V116.5M745.0 93.6V117.1M745.5 93.8V116.5M746.0 92.5V117.1M746.5 94.3V116.4M747.0 92.4V120.2M747.5 94.5V116.5M748.0 94.5V117.6M748.5 94.1V115.7M749.0 94.0V116.6M749.5 95.1V115.7M750.0 95.5V120.2M750.5 94.7V117.2M751.0 96.0V116.0M751.5 95.8V117.4M752.0 95.8V117.3M752.5 96.9V118.1M753.0 96.3V115.8M753.5 96.2V115.6M754.0 96.6V117.5M754.5 97.0V116.3M755.0 97.2V117.1M755.5 96.0V118.0M756.0 99.1V116.0M756.5 99.1V114.4M757.0 97.7V114.2M757.5 98.3V113.3M758.0 100.0V112.9M758.5 100.4V111.9M759.0 101.0V111.1M759.5 101.7V109.5M760.0 101.9V108.8M760.5 102.3V108.0M761.0 102.9V107.3M761.5 103.4V106.7M762.0 103.6V106.6M762.5 103.7V106.1M763.0 103.6V106.0M763.5 103.9V106.2M764.0 103.9V106.0M764.5 103.9V105.9M765.0 103.9V105.9M765.5 103.8V105.9M766.5 103.6V106.0M767.0 96.9V112.6M767.5 93.7V115.2M768.0 92.1V117.8M768.5 95.6V113.7M769.0 97.1V111.3M775.0 103.8V105.8M776.5 104.0V106.2M777.0 103.9V105.9M777.5 103.7V106.3M778.0 103.7V106.0M778.5 103.7V106.2M779.0 103.7V106.1M779.5 103.6V106.2M780.0 95.7V116.6M780.5 92.8V117.0M781.0 90.5V122.4M781.5 88.5V121.4M782.0 92.0V116.3M782.5 95.6V113.0M783.0 103.4V106.5M783.5 103.6V106.4M784.0 103.4V106.3M784.5 103.4V106.4M785.0 103.4V106.3M785.5 102.9V107.2M786.0 102.1V108.5M786.5 101.5V109.3M787.0 100.4V111.3M787.5 100.1V113.1M788.0 96.9V113.4M788.5 97.2V114.5M789.0 96.4V116.3M789.5 95.5V118.7M790.0 95.0V120.5M790.5 95.2V118.8M791.0 92.7V122.2M791.5 91.5V123.3M792.0 90.1V125.9M792.5 91.9V124.6M793.0 92.0V124.4M793.5 90.9V123.9M794.0 92.0V125.1M794.5 91.2V130.1M795.0 92.6V124.9M795.5 91.2V126.4M796.0 91.3V123.6M796.5 92.2V124.3M797.0 92.4V123.0M797.5 91.8V125.8M798.0 91.8V125.8M798.5 90.3V123.5M799.0 91.0V124.1M799.5 90.4V124.0M800.0 91.4V123.3M800.5 87.8V124.8M801.0 91.7V122.7M801.5 90.6V124.8M802.0 92.1V123.7M802.5 90.7V125.5M803.0 92.7V122.6M803.5 91.4V126.0M804.0 92.3V126.7M804.5 92.9V126.7M805.0 92.7V125.3M805.5 92.1V122.9M806.0 90.1V125.2M806.5 92.2V130.1M807.0 91.2V124.3M807.5 91.1V122.1M808.0 92.8V121.4M808.5 95.1V118.6M809.0 95.1V118.2M809.5 96.0V119.5M810.0 97.2V113.9M810.5 97.8V113.6M811.0 97.8V114.4M811.5 97.7V114.4M812.0 97.7V113.9M812.5 97.1V114.2M813.0 97.9V113.7M813.5 96.4V114.6M814.0 97.0V113.3M814.5 96.5V113.7M815.0 97.8V114.5M815.5 96.5V113.7M816.0 96.8V113.8M816.5 96.6V114.0M817.0 97.5V114.1M817.5 97.4V114.4M818.0 96.7V114.2M818.5 96.7V114.5M819.0 95.4V114.6M819.5 97.6V113.6M820.0 97.7V112.5M820.5 98.5V113.4M821.0 96.2V115.2M821.5 98.6V113.2M822.0 98.0V112.0M822.5 98.2V112.2M823.0 98.0V112.6M823.5 98.5V112.0M824.0 98.4V112.1M824.5 98.7V113.5M825.0 98.8V111.7M825.5 99.8V111.0M826.0 99.7V112.8M826.5 100.1V110.3M827.0 100.1V110.6M827.5 99.7V110.5M828.0 100.3V109.9M828.5 100.5V110.0M829.0 101.2V108.9M829.5 101.1V109.3M830.0 100.9V108.3M830.5 102.2V108.2M831.0 102.5V107.8M831.5 102.8V108.0M832.0 103.1V107.0M832.5 103.3V106.6M833.0 103.8V106.1M835.0 103.9V106.0M835.5 103.5V106.0M836.0 103.5V106.7M836.5 103.2V106.4M837.0 103.2V106.8M837.5 102.5V106.9M838.0 102.7V106.8M838.5 102.9V107.1M839.0 102.6V106.8M839.5 103.0V106.8M840.0 102.8V107.2M840.5 102.8V106.9M841.0 102.7V107.1M841.5 102.8V107.2M842.0 103.0V107.0M842.5 102.6V107.0M843.0 102.2V107.0M843.5 102.7V106.8M844.0 102.6V107.6M844.5 102.7V107.6M845.0 98.9V111.0M845.5 97.1V112.9M846.0 95.0V115.9M846.5 95.5V115.3M847.0 97.0V112.7M847.5 100.0V110.8M848.0 103.2V106.9M848.5 103.2V106.8M849.0 103.1V106.8M849.5 103.3V106.6M850.0 103.0V106.6M850.5 103.2V106.6M851.0 103.2V106.4M851.5 103.3V106.5M852.0 103.3V106.2M852.5 103.4V106.3M853.0 103.2V106.1M853.5 103.7V106.2M854.0 103.5V106.2M854.5 103.7V106.1M855.0 103.9V106.0M855.5 103.8V105.9M856.0 103.8V105.9M856.5 103.9V105.9M857.0 103.8V106.0M858.0 104.0V105.8M859.5 104.0V105.8M862.0 104.0V105.8" stroke="#5d57e7" stroke-width="0.8" fill="none"/></svg>
<div class="t" style="top:385.18px;font-size:11.6px;line-height:11.6px;color:#858c99;left:382.20px;">0:00</div>
<div class="t" style="top:385.01px;font-size:11.8px;line-height:11.8px;color:#858c99;left:426.60px;width:800px;text-align:center;">Duration: 0:07</div>
<div class="t" style="top:385.18px;font-size:11.6px;line-height:11.6px;color:#858c99;right:647.00px;text-align:right;">0:07</div>
<div class="sh" style="left:382px;top:458px;width:888px;height:41px"></div>
<div class="t" style="top:470.46px;font-size:16px;line-height:16px;font-weight:700;color:#14161c;left:398.50px;">Playback</div>
<div class="t" style="top:511.25px;font-size:12.7px;line-height:12.7px;color:#4b5563;left:382.30px;">Review the last recorded segment before running another analysis.</div>
<svg class="r" style="left:382.8px;top:543px" width="9" height="10" viewBox="0 0 9 10"><path d="M0 0 L8.2 5 L0 10Z" fill="#4b5563"/></svg>
<div class="t" style="top:540.91px;font-size:13.1px;line-height:13.1px;color:#4b5563;left:395.80px;">Last recording</div>
<div class="r" style="left:1224.00px;top:538.90px;width:45.60px;height:18.80px;border-radius:10px;background:#e9e5fd"></div>
<div class="t" style="top:543.60px;font-size:9.8px;line-height:9.8px;color:#5442d8;letter-spacing:0.8px;left:846.90px;width:800px;text-align:center;">AUDIO</div>
<div class="r" style="left:382.30px;top:566.30px;width:887.70px;height:53.60px;border:1px solid #aab3cf;border-radius:27px;background:#eff0fc;box-shadow:0 6px 16px rgba(40,50,90,0.08)"></div>
<div class="r" style="left:390.90px;top:573.30px;width:870.50px;height:39.50px;border-radius:20px;background:#efeff2"></div>
<svg class="r" style="left:413.2px;top:587.5px" width="10" height="11.5" viewBox="0 0 10 11.5"><path d="M0 0 L9.5 5.75 L0 11.5Z" fill="#111"/></svg>
<div class="t" style="top:586.23px;font-size:13.9px;line-height:13.9px;color:#1f1f1f;left:438.20px;">0:00 / 0:06</div>
<div class="r" style="left:520.00px;top:590.80px;width:650.50px;height:4.00px;border-radius:2px;background:#5c5c5c"></div>
<svg class="r" style="left:1194.9px;top:585px" width="17" height="16" viewBox="0 0 17 16"><path d="M0.6 5.2 H3.6 L7.9 1.3 V14.5 L3.6 10.6 H0.6 Z" fill="#000"/><path d="M9.3 4.7 A3.1 3.2 0 0 1 9.3 11.1 Z" fill="#000"/><path d="M10.2 1.5 A6.1 6.4 0 0 1 10.2 14.3" fill="none" stroke="#000" stroke-width="1.7"/></svg>
<svg class="r" style="left:1232px;top:585.5px" width="5" height="15" viewBox="0 0 5 15"><circle cx="2.5" cy="2.4" r="1.9" fill="#000"/><circle cx="2.5" cy="7.5" r="1.9" fill="#000"/><circle cx="2.5" cy="12.6" r="1.9" fill="#000"/></svg>
<div class="sh" style="left:382px;top:678px;width:888px;height:41px"></div>
<div class="t" style="top:690.66px;font-size:16px;line-height:16px;font-weight:700;color:#14161c;left:398.50px;">Spectrogram View</div>
<div class="t" style="top:731.24px;font-size:12.83px;line-height:12.83px;color:#4b5563;left:382.10px;">Mel spectrogram of the last recording or uploaded audio.</div>
<div class="r" style="left:382.40px;top:759.00px;width:887.00px;height:209.40px;border:1px dashed #cfd3da;border-radius:12px;background:#f8f9fb"></div>
<div class="r" style="left:393px;top:769.7px;width:866px;height:188.1px;background:#000010;overflow:hidden"><i style="position:absolute;left:0px;top:0;width:4px;height:100%;box-shadow:inset 1px 0 rgba(0,0,12,.82);background:linear-gradient(#0d177c 0.0%,#101f92 2.3%,#0d177d 4.5%,#0f1d8d 6.8%,#132cab 9.1%,#1a49d3 11.4%,#1842ca 13.6%,#173dc3 15.9%,#0f1e8f 18.2%,#0f1b89 20.5%,#0e1b87 22.7%,#101f93 25.0%,#11239e 27.3%,#0f1d8c 29.5%,#1228a6 31.8%,#1226a2 34.1%,#1637ba 36.4%,#1a4ad4 38.6%,#1e5aea 40.9%,#205fe5 43.2%,#1a4ad5 45.5%,#1a49d4 47.7%,#1945cf 50.0%,#173cc2 52.3%,#1329a7 54.5%,#11229c 56.8%,#1228a5 59.1%,#0c1575 61.4%,#132cac 63.6%,#183fc6 65.9%,#0f1e8f 68.2%,#1c53e1 70.5%,#3591bb 72.7%,#1a4bd6 75.0%,#1947d1 77.3%,#1f5de8 79.5%,#101f93 81.8%,#1e5be9 84.1%,#3999b4 86.4%,#2975d3 88.6%,#3086c5 90.9%,#1534b6 93.2%,#163abe 95.5%,#1535b8 97.7%,#1531b3 100.0%)"></i><i style="position:absolute;left:4px;top:0;width:4px;height:100%;box-shadow:inset 1px 0 rgba(0,0,12,.82);background:linear-gradient(#f5f540 0.0%,#f6f647 2.3%,#f9f962 4.5%,#f8f85b 6.8%,#f8f85d 9.1%,#fbfb74 11.4%,#f8f85a 13.6%,#fcfc86 15.9%,#f8f85d 18.2%,#f7f751 20.5%,#f9f966 22.7%,#fafa6c 25.0%,#f8f857 27.3%,#fafa69 29.5%,#fbfb76 31.8%,#f6f649 34.1%,#f3f43e 36.4%,#f7f750 38.6%,#f8f85d 40.9%,#f7f752 43.2%,#f8f85a 45.5%,#ebf241 47.7%,#f6f64c 50.0%,#f6f648 52.3%,#f6f648 54.5%,#f5f53f 56.8%,#edf340 59.1%,#b4e553 61.4%,#f5f53f 63.6%,#fafa6d 65.9%,#42a3a9 68.2%,#f7f756 70.5%,#ffffc8 72.7%,#f9f961 75.0%,#f8f85d 77.3%,#fefec5 79.5%,#cbeb4b 81.8%,#fdfd95 84.1%,#ffffc8 86.4%,#d5ed48 88.6%,#ffffc8 90.9%,#f8f858 93.2%,#0d177d 95.5%,#101e90 97.7%,#1224a0 100.0%)"></i><i style="position:absolute;left:8px;top:0;width:3px;height:100%;box-shadow:inset 1px 0 rgba(0,0,12,.82);background:linear-gradient(#f2f43e 0.0%,#f6f647 2.3%,#f8f858 4.5%,#f6f64c 6.8%,#f6f64c 9.1%,#f9f965 11.4%,#f9f964 13.6%,#fafa6a 15.9%,#f9f95f 18.2%,#f9f966 20.5%,#fbfb71 22.7%,#fcfc80 25.0%,#fcfc84 27.3%,#fcfc7d 29.5%,#fbfb73 31.8%,#f7f74f 34.1%,#f3f43e 36.4%,#f5f544 38.6%,#f7f754 40.9%,#f8f85b 43.2%,#f9f95f 45.5%,#f5f545 47.7%,#f8f859 50.0%,#f6f64c 52.3%,#f7f754 54.5%,#f8f859 56.8%,#f9f964 59.1%,#d0ec49 61.4%,#f6f647 63.6%,#ffffc8 65.9%,#b7e652 68.2%,#f7f753 70.5%,#ffffc8 72.7%,#fafa69 75.0%,#fafa68 77.3%,#ffffc8 79.5%,#eaf241 81.8%,#fdfd97 84.1%,#ffffc8 86.4%,#c6e94d 88.6%,#ffffc8 90.9%,#fefeb2 93.2%,#0f1d8d 95.5%,#0f1c8b 97.7%,#132aa9 100.0%)"></i><i style="position:absolute;left:11px;top:0;width:4px;height:100%;box-shadow:inset 1px 0 rgba(0,0,12,.82);background:linear-gradient(#f6f646 0.0%,#f7f752 2.3%,#f8f859 4.5%,#f7f74f 6.8%,#f6f64d 9.1%,#f9f963 11.4%,#fcfc7b 13.6%,#fafa68 15.9%,#fafa6c 18.2%,#fcfc8f 20.5%,#fdfd94 22.7%,#fefeb5 25.0%,#ffffc8 27.3%,#fefead 29.5%,#fcfc81 31.8%,#f8f85c 34.1%,#f6f64a 36.4%,#f6f64c 38.6%,#f8f85b 40.9%,#fafa69 43.2%,#fafa69 45.5%,#f8f85a 47.7%,#f9f967 50.0%,#f8f85e 52.3%,#fafa69 54.5%,#fbfb75 56.8%,#fdfdab 59.1%,#e2f044 61.4%,#f8f857 63.6%,#ffffc8 65.9%,#f6f64c 68.2%,#f9f963 70.5%,#ffffc8 72.7%,#fbfb75 75.0%,#fcfc7f 77.3%,#ffffc8 79.5%,#f7f751 81.8%,#fefeb3 84.1%,#ffffc8 86.4%,#d7ed47 88.6%,#fefec6 90.9%,#ffffc8 93.2%,#1329a7 95.5%,#0f1d8c 97.7%,#1431b2 100.0%)"></i><i style="position:absolute;left:15px;top:0;width:4px;height:100%;box-shadow:inset 1px 0 rgba(0,0,12,.82);background:linear-gradient(#1a4bd6 0.0%,#1a49d3 2.3%,#1f5ce8 4.5%,#2367df 6.8%,#1d59ea 9.1%,#1b50de 11.4%,#1f5ce8 13.6%,#2d7dcc 15.9%,#266dd9 18.2%,#2d7dcc 20.5%,#3796b7 22.7%,#71bf85 25.0%,#b5e552 27.3%,#b3e553 29.5%,#d3ec49 31.8%,#64b78f 34.1%,#7bc57d 36.4%,#d4ec48 38.6%,#f5f543 40.9%,#eff33f 43.2%,#f7f756 45.5%,#ecf240 47.7%,#deef45 50.0%,#f7f755 52.3%,#f9f965 54.5%,#f9f961 56.8%,#fbfb73 59.1%,#a5de5c 61.4%,#e9f241 63.6%,#ffffc8 65.9%,#f5f545 68.2%,#f9f960 70.5%,#ffffc8 72.7%,#fafa69 75.0%,#f9f964 77.3%,#ffffc8 79.5%,#f7f756 81.8%,#fdfd9a 84.1%,#ffffc8 86.4%,#d5ed48 88.6%,#fafa6a 90.9%,#ffffc8 93.2%,#142eaf 95.5%,#0f1c8b 97.7%,#142dac 100.0%)"></i><i style="position:absolute;left:19px;top:0;width:4px;height:100%;box-shadow:inset 1px 0 rgba(0,0,12,.82);background:linear-gradient(#1638bc 0.0%,#2771d7 2.3%,#328ac1 4.5%,#2d7ecc 6.8%,#2d7dcc 9.1%,#3897b6 11.4%,#338bc0 13.6%,#2871d6 15.9%,#45a5a7 18.2%,#2d7dcc 20.5%,#348fbd 22.7%,#4ca9a1 25.0%,#56af99 27.3%,#5cb395 29.5%,#b1e454 31.8%,#b1e454 34.1%,#afe454 36.4%,#edf340 38.6%,#f7f756 40.9%,#f6f648 43.2%,#f7f753 45.5%,#f8f85a 47.7%,#f7f755 50.0%,#f6f64a 52.3%,#f8f857 54.5%,#fafa67 56.8%,#fefebb 59.1%,#f9f964 61.4%,#f5f544 63.6%,#ffffc8 65.9%,#f9f967 68.2%,#f7f752 70.5%,#ffffc8 72.7%,#fafa6d 75.0%,#fcfc85 77.3%,#ffffc8 79.5%,#fafa6d 81.8%,#fdfdac 84.1%,#ffffc8 86.4%,#f6f64a 88.6%,#fefeb7 90.9%,#ffffc8 93.2%,#1637bb 95.5%,#0e1a84 97.7%,#0e1981 100.0%)"></i><i style="position:absolute;left:23px;top:0;width:4px;height:100%;box-shadow:inset 1px 0 rgba(0,0,12,.82);background:linear-gradient(#0b126f 0.0%,#0f1b88 2.3%,#142eae 4.5%,#1532b3 6.8%,#1638bb 9.1%,#1946cf 11.4%,#1639be 13.6%,#112198 15.9%,#1636b9 18.2%,#1532b3 20.5%,#132cac 22.7%,#1226a3 25.0%,#11239f 27.3%,#132cac 29.5%,#1843cb 31.8%,#266ed9 34.1%,#2a77d1 36.4%,#3898b5 38.6%,#8ace71 40.9%,#b7e652 43.2%,#a3dd5d 45.5%,#b5e552 47.7%,#5cb395 50.0%,#338cbf 52.3%,#63b790 54.5%,#bbe750 56.8%,#f6f64d 59.1%,#f5f541 61.4%,#9ad765 63.6%,#fcfc81 65.9%,#e5f142 68.2%,#b1e454 70.5%,#fefebb 72.7%,#edf340 75.0%,#d7ed47 77.3%,#fefebc 79.5%,#d1ec49 81.8%,#eff33f 84.1%,#ffffc8 86.4%,#c0e84f 88.6%,#e0f044 90.9%,#fdfd96 93.2%,#1431b2 95.5%,#0f1d8d 97.7%,#0f1b88 100.0%)"></i><i style="position:absolute;left:27px;top:0;width:3px;height:100%;box-shadow:inset 1px 0 rgba(0,0,12,.82);background:linear-gradient(#1534b6 0.0%,#1533b5 2.3%,#1947d1 4.5%,#1c54e2 6.8%,#2162e3 9.1%,#2871d6 11.4%,#2265e1 13.6%,#1d57e7 15.9%,#205fe6 18.2%,#2b79d0 20.5%,#276fd8 22.7%,#1e5aea 25.0%,#1d57e6 27.3%,#2974d4 29.5%,#2e81c9 31.8%,#7ac57d 34.1%,#8fd16d 36.4%,#b4e553 38.6%,#edf340 40.9%,#f8f85c 43.2%,#f6f64c 45.5%,#f6f64b 47.7%,#caea4c 50.0%,#a1dc5f 52.3%,#c9ea4c 54.5%,#f3f43e 56.8%,#fbfb73 59.1%,#fbfb70 61.4%,#e6f142 63.6%,#ffffc8 65.9%,#f9f95f 68.2%,#f6f646 70.5%,#ffffc8 72.7%,#fafa67 75.0%,#f6f646 77.3%,#ffffc8 79.5%,#f5f545 81.8%,#f7f751 84.1%,#ffffc8 86.4%,#f5f53f 88.6%,#f6f646 90.9%,#ffffc8 93.2%,#132baa 95.5%,#0f1d8e 97.7%,#102197 100.0%)"></i><i style="position:absolute;left:30px;top:0;width:4px;height:100%;box-shadow:inset 1px 0 rgba(0,0,12,.82);background:linear-gradient(#2873d5 0.0%,#3591bb 2.3%,#256adc 4.5%,#2b79d0 6.8%,#3086c5 9.1%,#2973d4 11.4%,#2162e3 13.6%,#44a4a8 15.9%,#2f82c8 18.2%,#3a9bb2 20.5%,#64b78f 22.7%,#64b88f 25.0%,#58b098 27.3%,#b6e552 29.5%,#b0e454 31.8%,#bfe74f 34.1%,#cbea4b 36.4%,#f5f540 38.6%,#f9f962 40.9%,#fbfb74 43.2%,#fbfb76 45.5%,#f7f756 47.7%,#f6f64c 50.0%,#f7f74e 52.3%,#f5f544 54.5%,#f5f53f 56.8%,#fcfc87 59.1%,#fbfb73 61.4%,#dfef45 63.6%,#ffffc8 65.9%,#f9f966 68.2%,#fafa6a 70.5%,#ffffc8 72.7%,#f9f966 75.0%,#f7f756 77.3%,#ffffc8 79.5%,#e3f043 81.8%,#f7f754 84.1%,#ffffc8 86.4%,#dfef45 88.6%,#fafa68 90.9%,#ffffc8 93.2%,#132baa 95.5%,#0d187e 97.7%,#142dac 100.0%)"></i><i style="position:absolute;left:34px;top:0;width:4px;height:100%;box-shadow:inset 1px 0 rgba(0,0,12,.82);background:linear-gradient(#1d57e6 0.0%,#1946cf 2.3%,#1a4ad6 4.5%,#1b4edb 6.8%,#1944cd 9.1%,#132cac 11.4%,#1945ce 13.6%,#1b4fdd 15.9%,#2365e0 18.2%,#205fe6 20.5%,#2f83c7 22.7%,#348ebd 25.0%,#2c7bce 27.3%,#3188c3 29.5%,#61b691 31.8%,#6fbe86 34.1%,#75c281 36.4%,#a3dd5e 38.6%,#c5e94d 40.9%,#d7ed47 43.2%,#d3ec48 45.5%,#b8e651 47.7%,#f6f64d 50.0%,#f8f85b 52.3%,#f7f756 54.5%,#f6f647 56.8%,#f9f960 59.1%,#6cbc89 61.4%,#b8e652 63.6%,#fcfc7d 65.9%,#bbe650 68.2%,#f5f53f 70.5%,#ffffc8 72.7%,#f6f64d 75.0%,#f9f960 77.3%,#ffffc8 79.5%,#f0f33f 81.8%,#f8f858 84.1%,#fdfda8 86.4%,#6dbd88 88.6%,#f7f752 90.9%,#ffffc8 93.2%,#142eae 95.5%,#0f1c8b 97.7%,#142ead 100.0%)"></i><i style="position:absolute;left:38px;top:0;width:4px;height:100%;box-shadow:inset 1px 0 rgba(0,0,12,.82);background:linear-gradient(#1d55e4 0.0%,#2a76d2 2.3%,#1b50dd 4.5%,#1947d0 6.8%,#1947d0 9.1%,#1841c8 11.4%,#1b4dd8 13.6%,#2770d8 15.9%,#2b79cf 18.2%,#3591bb 20.5%,#53ae9c 22.7%,#6fbe86 25.0%,#71bf85 27.3%,#399ab4 29.5%,#a1dc5f 31.8%,#79c47e 34.1%,#81c978 36.4%,#bae651 38.6%,#d8ee47 40.9%,#dcef45 43.2%,#d4ed48 45.5%,#f5f543 47.7%,#fbfb71 50.0%,#fbfb75 52.3%,#fafa68 54.5%,#f8f85a 56.8%,#fdfd97 59.1%,#e6f142 61.4%,#d1ec49 63.6%,#fefeb6 65.9%,#f0f33f 68.2%,#f9f95f 70.5%,#ffffc8 72.7%,#f9f960 75.0%,#fafa6a 77.3%,#ffffc8 79.5%,#f5f543 81.8%,#fafa6f 84.1%,#ffffc8 86.4%,#bfe74f 88.6%,#f9f962 90.9%,#ffffc8 93.2%,#0f1c89 95.5%,#11229b 97.7%,#102096 100.0%)"></i><i style="position:absolute;left:42px;top:0;width:4px;height:100%;box-shadow:inset 1px 0 rgba(0,0,12,.82);background:linear-gradient(#0a0d60 0.0%,#11239d 2.3%,#0b126d 4.5%,#0a0e63 6.8%,#0c1474 9.1%,#101e91 11.4%,#11229d 13.6%,#1637bb 15.9%,#1841c9 18.2%,#1b4eda 20.5%,#205fe6 22.7%,#256adc 25.0%,#2468de 27.3%,#1a49d4 29.5%,#2d7ecb 31.8%,#266ed9 34.1%,#338bc0 36.4%,#3b9faf 38.6%,#43a4a8 40.9%,#40a2ab 43.2%,#4daaa1 45.5%,#95d468 47.7%,#ecf240 50.0%,#f5f540 52.3%,#e3f043 54.5%,#cbea4b 56.8%,#f8f859 59.1%,#bfe84f 61.4%,#3796b7 63.6%,#f8f85e 65.9%,#85cb75 68.2%,#b2e453 70.5%,#fcfc92 72.7%,#84ca76 75.0%,#ace257 77.3%,#fafa6c 79.5%,#338bc0 81.8%,#d7ed47 84.1%,#fcfc92 86.4%,#95d469 88.6%,#bae651 90.9%,#f8f857 93.2%,#0f1c8a 95.5%,#102197 97.7%,#0e1b87 100.0%)"></i><i style="position:absolute;left:46px;top:0;width:3px;height:100%;box-shadow:inset 1px 0 rgba(0,0,12,.82);background:linear-gradient(#1840c7 0.0%,#2365e0 2.3%,#1b4dda 4.5%,#1b4dd9 6.8%,#2871d6 9.1%,#7dc67b 11.4%,#a5de5c 13.6%,#79c47f 15.9%,#e0f044 18.2%,#d5ed48 20.5%,#f5f545 22.7%,#f5f545 25.0%,#c5e94d 27.3%,#b8e651 29.5%,#c6e94d 31.8%,#b7e652 34.1%,#e6f142 36.4%,#afe454 38.6%,#3a9bb2 40.9%,#3693b9 43.2%,#5bb296 45.5%,#2d7ecb 47.7%,#b0e454 50.0%,#e1f044 52.3%,#d2ec49 54.5%,#b8e651 56.8%,#deef45 59.1%,#5ab296 61.4%,#2f83c7 63.6%,#d9ee46 65.9%,#328ac1 68.2%,#2b7acf 70.5%,#c4e94d 72.7%,#2d7ecb 75.0%,#2469dd 77.3%,#3897b5 79.5%,#183fc6 81.8%,#6abb8a 84.1%,#f6f64e 86.4%,#bfe74f 88.6%,#71bf85 90.9%,#b7e552 93.2%,#173bc0 95.5%,#0d187e 97.7%,#0e1880 100.0%)"></i><i style="position:absolute;left:49px;top:0;width:4px;height:100%;box-shadow:inset 1px 0 rgba(0,0,12,.82);background:linear-gradient(#1224a0 0.0%,#11239f 2.3%,#132ba9 4.5%,#1947d1 6.8%,#2871d6 9.1%,#61b591 11.4%,#ade356 13.6%,#b1e454 15.9%,#69ba8b 18.2%,#9ad864 20.5%,#daee46 22.7%,#e8f142 25.0%,#c0e84f 27.3%,#5fb593 29.5%,#6fbe86 31.8%,#ade355 34.1%,#96d568 36.4%,#96d568 38.6%,#5bb296 40.9%,#2c7ccd 43.2%,#3898b5 45.5%,#348fbd 47.7%,#8ace71 50.0%,#a2dc5e 52.3%,#8ccf70 54.5%,#67b98d 56.8%,#a7df5b 59.1%,#c5e94d 61.4%,#2b79cf 63.6%,#ace256 65.9%,#2a77d1 68.2%,#2871d6 70.5%,#bfe74f 72.7%,#1e5be9 75.0%,#2873d5 77.3%,#89cd72 79.5%,#0f1d8c 81.8%,#2770d7 84.1%,#d7ed47 86.4%,#97d667 88.6%,#3590bb 90.9%,#ddef45 93.2%,#183fc6 95.5%,#102197 97.7%,#11239e 100.0%)"></i><i style="position:absolute;left:53px;top:0;width:4px;height:100%;box-shadow:inset 1px 0 rgba(0,0,12,.82);background:linear-gradient(#1b4fdb 0.0%,#1d59ea 2.3%,#2d7fcb 4.5%,#3b9db0 6.8%,#6abb8a 9.1%,#b2e453 11.4%,#cbeb4b 13.6%,#d6ed48 15.9%,#aee355 18.2%,#c9ea4c 20.5%,#d3ec48 22.7%,#d4ed48 25.0%,#d4ed48 27.3%,#deef45 29.5%,#cbea4b 31.8%,#e1f044 34.1%,#cdeb4a 36.4%,#b8e651 38.6%,#89cd72 40.9%,#59b198 43.2%,#64b78f 45.5%,#58b098 47.7%,#d3ec49 50.0%,#edf340 52.3%,#bfe84f 54.5%,#64b88f 56.8%,#aee355 59.1%,#c9ea4c 61.4%,#399bb3 63.6%,#cfeb4a 65.9%,#75c281 68.2%,#2e81c9 70.5%,#c4e94d 72.7%,#2e7fca 75.0%,#3591bb 77.3%,#b0e454 79.5%,#1636b9 81.8%,#3187c3 84.1%,#f5f53e 86.4%,#caea4c 88.6%,#4ca9a2 90.9%,#d8ee47 93.2%,#102095 95.5%,#1226a3 97.7%,#1532b3 100.0%)"></i><i style="position:absolute;left:57px;top:0;width:4px;height:100%;box-shadow:inset 1px 0 rgba(0,0,12,.82);background:linear-gradient(#2e80c9 0.0%,#2d7ecb 2.3%,#42a3aa 4.5%,#77c380 6.8%,#9bd864 9.1%,#bce750 11.4%,#d0ec49 13.6%,#d7ed47 15.9%,#bee74f 18.2%,#b0e454 20.5%,#b5e552 22.7%,#c3e84e 25.0%,#ceeb4a 27.3%,#f5f53f 29.5%,#dbee46 31.8%,#eef340 34.1%,#cfeb4a 36.4%,#bce750 38.6%,#a9e059 40.9%,#94d46a 43.2%,#89cd72 45.5%,#7ac57d 47.7%,#d1ec49 50.0%,#f5f542 52.3%,#c8ea4c 54.5%,#4aa8a3 56.8%,#74c182 59.1%,#87cc74 61.4%,#2f82c8 63.6%,#c8ea4c 65.9%,#bbe650 68.2%,#2f83c7 70.5%,#c0e84f 72.7%,#2c7ace 75.0%,#3692ba 77.3%,#9ad765 79.5%,#1b4fdc 81.8%,#3897b6 84.1%,#f6f648 86.4%,#dbee46 88.6%,#4daaa1 90.9%,#d1ec49 93.2%,#0d177c 95.5%,#1227a4 97.7%,#1638bc 100.0%)"></i><i style="position:absolute;left:61px;top:0;width:4px;height:100%;box-shadow:inset 1px 0 rgba(0,0,12,.82);background:linear-gradient(#102096 0.0%,#0b116c 2.3%,#0d1678 4.5%,#102095 6.8%,#132aa9 9.1%,#1535b8 11.4%,#1944cd 13.6%,#173ec4 15.9%,#173abf 18.2%,#0d1678 20.5%,#0f1c8b 22.7%,#1228a5 25.0%,#11229c 27.3%,#1639bd 29.5%,#1639bd 31.8%,#1f5de7 34.1%,#1b4edb 36.4%,#1e5aea 38.6%,#2468de 40.9%,#2265e1 43.2%,#2367df 45.5%,#256bdc 47.7%,#2f82c8 50.0%,#7fc77a 52.3%,#69ba8b 54.5%,#2a77d1 56.8%,#2c7ccd 59.1%,#2d7fcb 61.4%,#1639bd 63.6%,#a7df5a 65.9%,#cbea4b 68.2%,#2f82c8 70.5%,#f5f543 72.7%,#2d7fcb 75.0%,#4fab9f 77.3%,#cdeb4b 79.5%,#2975d3 81.8%,#7dc67b 84.1%,#fcfc82 86.4%,#f7f750 88.6%,#5cb295 90.9%,#f7f753 93.2%,#0c1575 95.5%,#11239e 97.7%,#1535b8 100.0%)"></i><i style="position:absolute;left:65px;top:0;width:3px;height:100%;box-shadow:inset 1px 0 rgba(0,0,12,.82);background:linear-gradient(#132baa 0.0%,#1531b2 2.3%,#1329a7 4.5%,#112199 6.8%,#11229c 9.1%,#132aa9 11.4%,#11229d 13.6%,#1532b4 15.9%,#132cab 18.2%,#0f1e8f 20.5%,#101f91 22.7%,#142eae 25.0%,#1a48d2 27.3%,#1e5bea 29.5%,#2366df 31.8%,#2366e0 34.1%,#1841c8 36.4%,#1947d1 38.6%,#1c52e0 40.9%,#1b4eda 43.2%,#1b4dd9 45.5%,#1c53e2 47.7%,#56af9a 50.0%,#7fc879 52.3%,#68ba8c 54.5%,#3188c3 56.8%,#3289c2 59.1%,#2974d3 61.4%,#1b4fdc 63.6%,#dbee46 65.9%,#f5f53e 68.2%,#276fd8 70.5%,#dbee46 72.7%,#2a77d1 75.0%,#6abb8a 77.3%,#f9f964 79.5%,#2a77d1 81.8%,#3187c3 84.1%,#fbfb71 86.4%,#fbfb70 88.6%,#7cc67c 90.9%,#fafa6a 93.2%,#0d177d 95.5%,#0e1a86 97.7%,#0e1b87 100.0%)"></i><i style="position:absolute;left:68px;top:0;width:4px;height:100%;box-shadow:inset 1px 0 rgba(0,0,12,.82);background:linear-gradient(#173ec5 0.0%,#1225a1 2.3%,#132cac 4.5%,#0e1b87 6.8%,#0e1982 9.1%,#11229c 11.4%,#132baa 13.6%,#11239e 15.9%,#1224a0 18.2%,#1a49d4 20.5%,#1c52e0 22.7%,#1d58e8 25.0%,#2770d8 27.3%,#3085c5 29.5%,#2e81c9 31.8%,#1b4eda 34.1%,#173dc3 36.4%,#173ec4 38.6%,#1a49d3 40.9%,#1c53e2 43.2%,#1e5be9 45.5%,#1d55e4 47.7%,#1b50de 50.0%,#276fd8 52.3%,#2a76d2 54.5%,#2a76d2 56.8%,#6bbc89 59.1%,#2872d6 61.4%,#3085c5 63.6%,#dcef46 65.9%,#f7f74e 68.2%,#2c7ccd 70.5%,#f5f543 72.7%,#41a3aa 75.0%,#65b88e 77.3%,#f8f85b 79.5%,#328ac1 81.8%,#328ac1 84.1%,#fafa6b 86.4%,#fcfc7f 88.6%,#c8ea4c 90.9%,#fcfc7c 93.2%,#11239f 95.5%,#142eae 97.7%,#0f1c8a 100.0%)"></i><i style="position:absolute;left:72px;top:0;width:4px;height:100%;box-shadow:inset 1px 0 rgba(0,0,12,.82);background:linear-gradient(#bae651 0.0%,#6fbe86 2.3%,#95d468 4.5%,#58b198 6.8%,#55af9a 9.1%,#8ace71 11.4%,#afe454 13.6%,#8fd16d 15.9%,#caea4b 18.2%,#f8f85b 20.5%,#fbfb71 22.7%,#fbfb76 25.0%,#fcfc81 27.3%,#fdfda5 29.5%,#fcfc84 31.8%,#f5f53f 34.1%,#eaf241 36.4%,#d7ed47 38.6%,#e9f241 40.9%,#f8f857 43.2%,#f7f753 45.5%,#f5f542 47.7%,#bce750 50.0%,#d3ec48 52.3%,#e2f044 54.5%,#dfef44 56.8%,#f8f85c 59.1%,#d5ed48 61.4%,#e2f043 63.6%,#fcfc86 65.9%,#ffffc8 68.2%,#b1e454 70.5%,#fdfd9c 72.7%,#bbe750 75.0%,#c3e84e 77.3%,#fdfda1 79.5%,#b6e552 81.8%,#c0e84f 84.1%,#ffffc8 86.4%,#ffffc8 88.6%,#f8f85b 90.9%,#ffffc8 93.2%,#142eae 95.5%,#173abf 97.7%,#1226a3 100.0%)"></i><i style="position:absolute;left:76px;top:0;width:4px;height:100%;box-shadow:inset 1px 0 rgba(0,0,12,.82);background:linear-gradient(#7cc57c 0.0%,#4ba9a2 2.3%,#72c084 4.5%,#6fbe86 6.8%,#78c37f 9.1%,#7bc57c 11.4%,#7ec77b 13.6%,#5ab297 15.9%,#bee74f 18.2%,#ebf241 20.5%,#f6f649 22.7%,#f7f74e 25.0%,#f7f752 27.3%,#fafa68 29.5%,#f8f85d 31.8%,#cceb4b 34.1%,#e4f043 36.4%,#c5e94d 38.6%,#d3ec48 40.9%,#f8f85a 43.2%,#f6f647 45.5%,#f5f541 47.7%,#bfe84f 50.0%,#ceeb4a 52.3%,#e0f044 54.5%,#ceeb4a 56.8%,#ebf241 59.1%,#c3e84e 61.4%,#bfe84f 63.6%,#fafa6e 65.9%,#fcfc7f 68.2%,#89cd72 70.5%,#fcfc88 72.7%,#cfeb4a 75.0%,#80c879 77.3%,#fcfc82 79.5%,#b8e651 81.8%,#c7e94d 84.1%,#ffffc8 86.4%,#ffffc8 88.6%,#f5f53e 90.9%,#ffffc8 93.2%,#142fb0 95.5%,#1638bc 97.7%,#183fc5 100.0%)"></i><i style="position:absolute;left:80px;top:0;width:4px;height:100%;box-shadow:inset 1px 0 rgba(0,0,12,.82);background:linear-gradient(#0f1b89 0.0%,#0e1a85 2.3%,#0c1370 4.5%,#0d1679 6.8%,#0f1e8e 9.1%,#112199 11.4%,#1228a5 13.6%,#1841c9 15.9%,#173ec4 18.2%,#1946d0 20.5%,#1636ba 22.7%,#1638bc 25.0%,#1d57e7 27.3%,#1f5de7 29.5%,#2162e3 31.8%,#1639bd 34.1%,#205fe6 36.4%,#2771d7 38.6%,#2a77d1 40.9%,#3084c6 43.2%,#2b78d0 45.5%,#3a9db1 47.7%,#3591bb 50.0%,#3187c3 52.3%,#2468de 54.5%,#1d56e6 56.8%,#3898b5 59.1%,#1a4cd7 61.4%,#1a4bd6 63.6%,#3999b4 65.9%,#2e80ca 68.2%,#1636b9 70.5%,#67b98c 72.7%,#c1e84f 75.0%,#2f83c7 77.3%,#8ace71 79.5%,#3187c4 81.8%,#1d56e6 84.1%,#c7e94c 86.4%,#c4e94d 88.6%,#3795b8 90.9%,#ddef45 93.2%,#0f1d8d 95.5%,#0d1679 97.7%,#1329a7 100.0%)"></i><i style="position:absolute;left:84px;top:0;width:3px;height:100%;box-shadow:inset 1px 0 rgba(0,0,12,.82);background:linear-gradient(#1c52e1 0.0%,#266ed9 2.3%,#2264e2 4.5%,#1d57e7 6.8%,#1c51df 9.1%,#1b50de 11.4%,#2975d3 13.6%,#256cdb 15.9%,#2771d7 18.2%,#3288c2 20.5%,#328ac1 22.7%,#2974d4 25.0%,#2060e5 27.3%,#2f82c8 29.5%,#2469dd 31.8%,#3084c6 34.1%,#95d469 36.4%,#bfe74f 38.6%,#aee355 40.9%,#76c280 43.2%,#b6e552 45.5%,#6fbe87 47.7%,#90d26c 50.0%,#7cc67c 52.3%,#48a7a5 54.5%,#3795b8 56.8%,#a8e059 59.1%,#6dbd88 61.4%,#3999b4 63.6%,#bae651 65.9%,#85cb75 68.2%,#2f82c8 70.5%,#cdeb4b 72.7%,#f9f966 75.0%,#72c084 77.3%,#f7f751 79.5%,#deef45 81.8%,#399ab4 84.1%,#f5f541 86.4%,#e9f241 88.6%,#71bf84 90.9%,#f7f753 93.2%,#1636b9 95.5%,#1533b5 97.7%,#101f91 100.0%)"></i><i style="position:absolute;left:87px;top:0;width:4px;height:100%;box-shadow:inset 1px 0 rgba(0,0,12,.82);background:linear-gradient(#102096 0.0%,#1227a4 2.3%,#1228a5 4.5%,#0f1c8b 6.8%,#0e1a85 9.1%,#102096 11.4%,#1534b6 13.6%,#1329a7 15.9%,#1639bd 18.2%,#173cc2 20.5%,#1639bd 22.7%,#1534b6 25.0%,#1637ba 27.3%,#1945ce 29.5%,#173cc2 31.8%,#1c55e4 34.1%,#276fd8 36.4%,#2e80ca 38.6%,#2b7acf 40.9%,#266ed9 43.2%,#3796b7 45.5%,#1f5de8 47.7%,#2e7fca 50.0%,#2f83c7 52.3%,#2366df 54.5%,#1b4fdc 56.8%,#2b79d0 59.1%,#2e81c9 61.4%,#1a4ad5 63.6%,#3692ba 65.9%,#3591bb 68.2%,#1a48d2 70.5%,#44a4a8 72.7%,#ecf240 75.0%,#1d59ea 77.3%,#bce750 79.5%,#3897b6 81.8%,#173dc3 84.1%,#80c879 86.4%,#8ccf6f 88.6%,#1d58e9 90.9%,#c3e84e 93.2%,#173bc0 95.5%,#132cab 97.7%,#101e90 100.0%)"></i><i style="position:absolute;left:91px;top:0;width:4px;height:100%;box-shadow:inset 1px 0 rgba(0,0,12,.82);background:linear-gradient(#1638bd 0.0%,#142dac 2.3%,#142dad 4.5%,#0f1d8c 6.8%,#101f93 9.1%,#173abf 11.4%,#1b4fdb 13.6%,#1b4fdc 15.9%,#2c7bcd 18.2%,#276fd8 20.5%,#2263e2 22.7%,#2b79d0 25.0%,#59b197 27.3%,#6ebd87 29.5%,#84ca76 31.8%,#a1dc5f 34.1%,#79c47e 36.4%,#8dd06f 38.6%,#abe257 40.9%,#c3e94e 43.2%,#e9f241 45.5%,#c0e84f 47.7%,#f5f545 50.0%,#f7f756 52.3%,#f6f646 54.5%,#e0f044 56.8%,#eef340 59.1%,#fafa6c 61.4%,#84ca76 63.6%,#f7f755 65.9%,#f9f962 68.2%,#9fda61 70.5%,#f9f960 72.7%,#ffffc8 75.0%,#ace256 77.3%,#fefeb3 79.5%,#d8ee47 81.8%,#51ac9e 84.1%,#fcfc84 86.4%,#fefec0 88.6%,#b0e454 90.9%,#ffffc8 93.2%,#1533b5 95.5%,#0f1d8c 97.7%,#102095 100.0%)"></i><i style="position:absolute;left:95px;top:0;width:4px;height:100%;box-shadow:inset 1px 0 rgba(0,0,12,.82);background:linear-gradient(#0f1c8b 0.0%,#0c1370 2.3%,#080850 4.5%,#080850 6.8%,#080851 9.1%,#080850 11.4%,#0c1371 13.6%,#0f1d8e 15.9%,#1a4ad5 18.2%,#1c51de 20.5%,#2161e4 22.7%,#2770d7 25.0%,#2d7ecb 27.3%,#3b9faf 29.5%,#338cbf 31.8%,#1c53e2 34.1%,#1c53e2 36.4%,#2973d4 38.6%,#2e81c9 40.9%,#2b7acf 43.2%,#399ab3 45.5%,#4fab9f 47.7%,#d8ee47 50.0%,#e9f241 52.3%,#e7f142 54.5%,#ebf241 56.8%,#dbee46 59.1%,#fafa6f 61.4%,#266dda 63.6%,#dbee46 65.9%,#c3e84e 68.2%,#3084c6 70.5%,#f5f540 72.7%,#fefec6 75.0%,#3896b6 77.3%,#f7f754 79.5%,#92d26b 81.8%,#3da0ae 84.1%,#f8f85e 86.4%,#fbfb72 88.6%,#3ca0ae 90.9%,#fbfb72 93.2%,#11229c 95.5%,#0f1c8a 97.7%,#1224a0 100.0%)"></i><i style="position:absolute;left:99px;top:0;width:4px;height:100%;box-shadow:inset 1px 0 rgba(0,0,12,.82);background:linear-gradient(#0e1b87 0.0%,#0c1577 2.3%,#080954 4.5%,#080850 6.8%,#080850 9.1%,#0b126d 11.4%,#0f1c8a 13.6%,#11229b 15.9%,#132baa 18.2%,#1946d0 20.5%,#1d59e9 22.7%,#205fe5 25.0%,#1f5de7 27.3%,#256cdb 29.5%,#2b79cf 31.8%,#2d7dcc 34.1%,#2975d3 36.4%,#338bc0 38.6%,#348dbe 40.9%,#2e80ca 43.2%,#49a8a4 45.5%,#399ab3 47.7%,#a3dd5e 50.0%,#7bc57d 52.3%,#9fda61 54.5%,#d3ec49 56.8%,#dfef45 59.1%,#fcfc7d 61.4%,#2b78d0 63.6%,#e9f241 65.9%,#bbe750 68.2%,#1e5aea 70.5%,#b8e651 72.7%,#fcfc80 75.0%,#2e7fca 77.3%,#e5f143 79.5%,#75c281 81.8%,#2e7fca 84.1%,#f7f756 86.4%,#fcfc7b 88.6%,#3591bb 90.9%,#f7f753 93.2%,#1228a5 95.5%,#1328a6 97.7%,#1227a5 100.0%)"></i><i style="position:absolute;left:103px;top:0;width:3px;height:100%;box-shadow:inset 1px 0 rgba(0,0,12,.82);background:linear-gradient(#173cc1 0.0%,#132baa 2.3%,#1228a5 4.5%,#0f1d8d 6.8%,#11239f 9.1%,#1a4ad6 11.4%,#1d56e6 13.6%,#1a4ad5 15.9%,#266dda 18.2%,#266cda 20.5%,#2b79d0 22.7%,#3897b6 25.0%,#7ac57d 27.3%,#b6e552 29.5%,#c2e84e 31.8%,#a9e059 34.1%,#b4e553 36.4%,#d0ec49 38.6%,#dcef45 40.9%,#e0ef44 43.2%,#f7f74f 45.5%,#f6f64c 47.7%,#f6f64e 50.0%,#f7f74e 52.3%,#f8f859 54.5%,#f9f965 56.8%,#fbfb72 59.1%,#ffffc8 61.4%,#bae651 63.6%,#fcfc8e 65.9%,#f8f857 68.2%,#90d26c 70.5%,#fbfb72 72.7%,#ffffc8 75.0%,#c9ea4c 77.3%,#fcfc8d 79.5%,#fbfb73 81.8%,#cbea4b 84.1%,#fefec3 86.4%,#ffffc8 88.6%,#e2f043 90.9%,#fefebb 93.2%,#132cac 95.5%,#1534b6 97.7%,#1329a8 100.0%)"></i><i style="position:absolute;left:106px;top:0;width:4px;height:100%;box-shadow:inset 1px 0 rgba(0,0,12,.82);background:linear-gradient(#080850 0.0%,#080850 2.3%,#080850 4.5%,#080850 6.8%,#090c5d 9.1%,#0c1372 11.4%,#0d177b 13.6%,#090c5d 15.9%,#102094 18.2%,#0c1474 20.5%,#0d1679 22.7%,#132cab 25.0%,#2367df 27.3%,#3898b5 29.5%,#399ab3 31.8%,#2265e1 34.1%,#2d7dcc 36.4%,#3da0ae 38.6%,#65b88e 40.9%,#81c978 43.2%,#c7e94d 45.5%,#d1ec49 47.7%,#a3dd5d 50.0%,#c6e94d 52.3%,#cbea4b 54.5%,#bbe750 56.8%,#dcee46 59.1%,#f5f540 61.4%,#2f82c8 63.6%,#eaf241 65.9%,#97d667 68.2%,#2b79cf 70.5%,#f6f647 72.7%,#fafa67 75.0%,#3a9bb2 77.3%,#f5f541 79.5%,#f8f85d 81.8%,#48a7a5 84.1%,#f7f751 86.4%,#fafa6b 88.6%,#6bbb89 90.9%,#f7f753 93.2%,#132baa 95.5%,#1637bb 97.7%,#1226a3 100.0%)"></i><i style="position:absolute;left:110px;top:0;width:4px;height:100%;box-shadow:inset 1px 0 rgba(0,0,12,.82);background:linear-gradient(#080850 0.0%,#080a56 2.3%,#080a55 4.5%,#090b5a 6.8%,#080850 9.1%,#080850 11.4%,#080851 13.6%,#0b126f 15.9%,#0c1371 18.2%,#0c1370 20.5%,#102094 22.7%,#1a48d2 25.0%,#2d7ecb 27.3%,#348fbd 29.5%,#3591bb 31.8%,#266dd9 34.1%,#3187c4 36.4%,#62b690 38.6%,#89ce72 40.9%,#7dc67b 43.2%,#b2e453 45.5%,#b9e651 47.7%,#b5e552 50.0%,#d0ec4a 52.3%,#bbe650 54.5%,#a1db5f 56.8%,#e5f143 59.1%,#f6f64e 61.4%,#1c54e2 63.6%,#a5de5c 65.9%,#77c380 68.2%,#256cdb 70.5%,#f5f53f 72.7%,#f8f859 75.0%,#2974d4 77.3%,#c2e84e 79.5%,#f9f963 81.8%,#338cbf 84.1%,#f6f64a 86.4%,#fbfb72 88.6%,#3795b7 90.9%,#f8f85a 93.2%,#0f1d8e 95.5%,#1228a5 97.7%,#0f1c8a 100.0%)"></i><i style="position:absolute;left:114px;top:0;width:4px;height:100%;box-shadow:inset 1px 0 rgba(0,0,12,.82);background:linear-gradient(#0a0e63 0.0%,#0a0e63 2.3%,#0b116a 4.5%,#090d5f 6.8%,#090c5d 9.1%,#0a0e62 11.4%,#0a0f64 13.6%,#0c1576 15.9%,#0a0f66 18.2%,#0c1473 20.5%,#0e1981 22.7%,#0f1c8b 25.0%,#101f92 27.3%,#132ba9 29.5%,#102197 31.8%,#11239f 34.1%,#1224a0 36.4%,#1226a3 38.6%,#1328a6 40.9%,#132baa 43.2%,#173cc2 45.5%,#1637ba 47.7%,#1637ba 50.0%,#1430b1 52.3%,#132cab 54.5%,#132cab 56.8%,#1638bd 59.1%,#1b4dd9 61.4%,#1225a1 63.6%,#142eae 65.9%,#183fc6 68.2%,#1228a5 70.5%,#1842ca 72.7%,#1b4dd8 75.0%,#1328a6 77.3%,#1842ca 79.5%,#183fc6 81.8%,#102097 84.1%,#1636ba 86.4%,#1637bb 88.6%,#11239f 90.9%,#1944cc 93.2%,#0c1474 95.5%,#142dad 97.7%,#1227a4 100.0%)"></i><i style="position:absolute;left:118px;top:0;width:4px;height:100%;box-shadow:inset 1px 0 rgba(0,0,12,.82);background:linear-gradient(#0b126e 0.0%,#0c1473 2.3%,#0b116b 4.5%,#0b1068 6.8%,#0a1067 9.1%,#0a0d61 11.4%,#090c5b 13.6%,#0b126d 15.9%,#0b1068 18.2%,#0b126d 20.5%,#0c1474 22.7%,#0d187e 25.0%,#0f1c8b 27.3%,#101e90 29.5%,#101e91 31.8%,#112198 34.1%,#1224a1 36.4%,#1226a3 38.6%,#1228a6 40.9%,#142dad 43.2%,#183fc6 45.5%,#1534b7 47.7%,#1227a5 50.0%,#11229c 52.3%,#1225a2 54.5%,#132baa 56.8%,#142fb0 59.1%,#1b4dda 61.4%,#1638bb 63.6%,#1533b5 65.9%,#1a4bd7 68.2%,#1226a3 70.5%,#1534b7 72.7%,#1843cb 75.0%,#11239f 77.3%,#173ec5 79.5%,#1946d0 81.8%,#102096 84.1%,#1430b1 86.4%,#1329a7 88.6%,#11229c 90.9%,#183fc5 93.2%,#11229d 95.5%,#132cab 97.7%,#1430b1 100.0%)"></i><i style="position:absolute;left:122px;top:0;width:3px;height:100%;box-shadow:inset 1px 0 rgba(0,0,12,.82);background:linear-gradient(#080954 0.0%,#090c5b 2.3%,#080850 4.5%,#080852 6.8%,#080955 9.1%,#080850 11.4%,#080850 13.6%,#080850 15.9%,#080954 18.2%,#080954 20.5%,#080a57 22.7%,#0a0e61 25.0%,#0b136f 27.3%,#0b126e 29.5%,#0d1679 31.8%,#0d187d 34.1%,#0f1b88 36.4%,#0f1c8a 38.6%,#0f1d8e 40.9%,#112199 43.2%,#132cac 45.5%,#102197 47.7%,#0e1a85 50.0%,#0d187f 52.3%,#0e1b87 54.5%,#101e91 56.8%,#101f92 59.1%,#1639bd 61.4%,#1329a7 63.6%,#11229c 65.9%,#1638bc 68.2%,#0e1a83 70.5%,#101e90 72.7%,#132baa 75.0%,#0e1982 77.3%,#1228a5 79.5%,#173abf 81.8%,#0d187f 84.1%,#102197 86.4%,#101e90 88.6%,#0e1983 90.9%,#1329a7 93.2%,#142fb0 95.5%,#1328a6 97.7%,#1532b4 100.0%)"></i><i style="position:absolute;left:125px;top:0;width:4px;height:100%;box-shadow:inset 1px 0 rgba(0,0,12,.82);background:linear-gradient(#090b5a 0.0%,#090c5e 2.3%,#0b1068 4.5%,#0b126d 6.8%,#0c1575 9.1%,#0d1678 11.4%,#0b116c 13.6%,#0c1474 15.9%,#0c1576 18.2%,#0d177b 20.5%,#0e1981 22.7%,#0e1981 25.0%,#0e1981 27.3%,#112198 29.5%,#102097 31.8%,#11239d 34.1%,#11239e 36.4%,#1225a1 38.6%,#1430b1 40.9%,#183fc6 43.2%,#1841c9 45.5%,#142dac 47.7%,#1636ba 50.0%,#142fb0 52.3%,#132baa 54.5%,#1532b4 56.8%,#1840c6 59.1%,#1d56e5 61.4%,#1431b2 63.6%,#142faf 65.9%,#1944cd 68.2%,#11219a 70.5%,#142faf 72.7%,#1842c9 75.0%,#11239d 77.3%,#173dc2 79.5%,#1b4fdc 81.8%,#11239d 84.1%,#163abe 86.4%,#173abf 88.6%,#102096 90.9%,#173cc2 93.2%,#0e1880 95.5%,#11239f 97.7%,#132ba9 100.0%)"></i><i style="position:absolute;left:129px;top:0;width:4px;height:100%;box-shadow:inset 1px 0 rgba(0,0,12,.82);background:linear-gradient(#080850 0.0%,#080850 2.3%,#080852 4.5%,#090b59 6.8%,#0a0e62 9.1%,#0a1067 11.4%,#090c5c 13.6%,#080850 15.9%,#0a0e61 18.2%,#0b1068 20.5%,#0b126c 22.7%,#0b126e 25.0%,#0c1370 27.3%,#0e1982 29.5%,#0f1d8c 31.8%,#0e1b86 34.1%,#0f1c8a 36.4%,#0e1982 38.6%,#0e1b87 40.9%,#11229d 43.2%,#1226a4 45.5%,#1225a2 47.7%,#1532b4 50.0%,#1532b4 52.3%,#1533b5 54.5%,#1535b8 56.8%,#142fb0 59.1%,#1945ce 61.4%,#1227a4 63.6%,#101f92 65.9%,#1430b2 68.2%,#101e90 70.5%,#1329a7 72.7%,#132aa9 75.0%,#0f1c8a 77.3%,#1226a2 79.5%,#1945cd 81.8%,#101f93 84.1%,#1226a3 86.4%,#1224a0 88.6%,#0e1982 90.9%,#1532b3 93.2%,#11239d 95.5%,#0d177b 97.7%,#1225a1 100.0%)"></i><i style="position:absolute;left:133px;top:0;width:4px;height:100%;box-shadow:inset 1px 0 rgba(0,0,12,.82);background:linear-gradient(#080850 0.0%,#080850 2.3%,#0a0d60 4.5%,#0a0e63 6.8%,#0a0f66 9.1%,#0b126d 11.4%,#0a0e62 13.6%,#080850 15.9%,#090c5c 18.2%,#0a0e61 20.5%,#0a0f64 22.7%,#0b126c 25.0%,#0d177c 27.3%,#0f1c8a 29.5%,#102096 31.8%,#0e1b87 34.1%,#0e1980 36.4%,#0e1982 38.6%,#0f1d8e 40.9%,#11229c 43.2%,#1224a0 45.5%,#132ba9 47.7%,#1637ba 50.0%,#142faf 52.3%,#1636b9 54.5%,#183fc6 56.8%,#1637bb 59.1%,#1b4dd9 61.4%,#1227a5 63.6%,#102097 65.9%,#1535b8 68.2%,#0f1d8e 70.5%,#1225a1 72.7%,#1535b7 75.0%,#112199 77.3%,#132baa 79.5%,#1a49d4 81.8%,#102097 84.1%,#132cac 86.4%,#1532b4 88.6%,#0e1a84 90.9%,#1431b2 93.2%,#1225a2 95.5%,#1226a3 97.7%,#102096 100.0%)"></i><i style="position:absolute;left:137px;top:0;width:4px;height:100%;box-shadow:inset 1px 0 rgba(0,0,12,.82);background:linear-gradient(#080850 0.0%,#080850 2.3%,#080850 4.5%,#080850 6.8%,#080850 9.1%,#080953 11.4%,#080850 13.6%,#080850 15.9%,#080850 18.2%,#080850 20.5%,#080850 22.7%,#090c5c 25.0%,#0b126e 27.3%,#0d1679 29.5%,#0e1b87 31.8%,#0c1575 34.1%,#0b126f 36.4%,#0d1678 38.6%,#0e1a84 40.9%,#0f1c89 43.2%,#0f1d8c 45.5%,#101f93 47.7%,#1224a0 50.0%,#102095 52.3%,#11229b 54.5%,#1329a7 56.8%,#1224a0 59.1%,#1639bd 61.4%,#0e1b87 63.6%,#0e1982 65.9%,#1228a5 68.2%,#0c1372 70.5%,#0e1981 72.7%,#11239d 75.0%,#0e1a83 77.3%,#0f1e8f 79.5%,#1533b6 81.8%,#0d177c 84.1%,#102094 86.4%,#132aa8 88.6%,#0c1371 90.9%,#102095 93.2%,#11239d 95.5%,#1534b7 97.7%,#11219a 100.0%)"></i><i style="position:absolute;left:141px;top:0;width:3px;height:100%;box-shadow:inset 1px 0 rgba(0,0,12,.82);background:linear-gradient(#0a1067 0.0%,#0b126d 2.3%,#0a0f66 4.5%,#0b1069 6.8%,#0b116a 9.1%,#0a1067 11.4%,#0b116b 13.6%,#0c1473 15.9%,#0e1981 18.2%,#0d1678 20.5%,#0e1a85 22.7%,#102094 25.0%,#11219a 27.3%,#1225a1 29.5%,#1431b2 31.8%,#11239e 34.1%,#1328a6 36.4%,#1532b3 38.6%,#1637bb 40.9%,#1639bd 43.2%,#173bc1 45.5%,#1636b9 47.7%,#173abf 50.0%,#183fc5 52.3%,#1637bb 54.5%,#1534b7 56.8%,#1639be 59.1%,#1a49d3 61.4%,#1224a0 63.6%,#132ba9 65.9%,#1945cf 68.2%,#101e91 70.5%,#11229c 72.7%,#1531b3 75.0%,#11239e 77.3%,#1226a2 79.5%,#1945cf 81.8%,#11229d 84.1%,#142fb0 86.4%,#1843cb 88.6%,#11229c 90.9%,#1535b7 93.2%,#101e90 95.5%,#1227a4 97.7%,#1531b2 100.0%)"></i><i style="position:absolute;left:144px;top:0;width:4px;height:100%;box-shadow:inset 1px 0 rgba(0,0,12,.82);background:linear-gradient(#090b5a 0.0%,#080852 2.3%,#0a0d60 4.5%,#0a0f66 6.8%,#0a0e61 9.1%,#080a57 11.4%,#090d5e 13.6%,#0c1372 15.9%,#0b126c 18.2%,#0a0f64 20.5%,#0c1475 22.7%,#0e1983 25.0%,#0e1a85 27.3%,#112199 29.5%,#142dac 31.8%,#132aa9 34.1%,#132baa 36.4%,#11239f 38.6%,#102197 40.9%,#11229b 43.2%,#11229b 45.5%,#1638bb 47.7%,#1329a7 50.0%,#1328a6 52.3%,#142dac 54.5%,#142fb0 56.8%,#1329a7 59.1%,#173bc0 61.4%,#102094 63.6%,#1227a4 65.9%,#1639bd 68.2%,#0d187f 70.5%,#101f94 72.7%,#1430b1 75.0%,#0c1474 77.3%,#1532b3 79.5%,#173bc0 81.8%,#102096 84.1%,#1329a8 86.4%,#1843cb 88.6%,#142fb0 90.9%,#142dad 93.2%,#1224a0 95.5%,#0d177c 97.7%,#11229a 100.0%)"></i><i style="position:absolute;left:148px;top:0;width:4px;height:100%;box-shadow:inset 1px 0 rgba(0,0,12,.82);background:linear-gradient(#0a1067 0.0%,#0a0d60 2.3%,#0b1069 4.5%,#0c1474 6.8%,#0d1679 9.1%,#0d1678 11.4%,#0d177d 13.6%,#0f1c89 15.9%,#0f1c8a 18.2%,#0d1678 20.5%,#0d187f 22.7%,#0f1c8a 25.0%,#101f93 27.3%,#142fb0 29.5%,#1329a7 31.8%,#1534b7 34.1%,#142eaf 36.4%,#132baa 38.6%,#132ba9 40.9%,#1430b1 43.2%,#163abe 45.5%,#1636ba 47.7%,#1431b2 50.0%,#1639bd 52.3%,#1637bb 54.5%,#1532b4 56.8%,#142eae 59.1%,#1840c7 61.4%,#1329a8 63.6%,#132aa8 65.9%,#173dc3 68.2%,#101e91 70.5%,#1226a2 72.7%,#1946d0 75.0%,#101f92 77.3%,#142fb0 79.5%,#1a4bd7 81.8%,#1533b5 84.1%,#1637ba 86.4%,#1a4bd7 88.6%,#1430b1 90.9%,#1534b6 93.2%,#11229a 95.5%,#1329a6 97.7%,#1328a6 100.0%)"></i><i style="position:absolute;left:152px;top:0;width:4px;height:100%;box-shadow:inset 1px 0 rgba(0,0,12,.82);background:linear-gradient(#0b1068 0.0%,#090d5f 2.3%,#0b1069 4.5%,#0c1473 6.8%,#0d177d 9.1%,#0e1a85 11.4%,#0e1b87 13.6%,#0f1e8e 15.9%,#101f94 18.2%,#0d187f 20.5%,#0e1a85 22.7%,#101e90 25.0%,#112198 27.3%,#142fb0 29.5%,#11229c 31.8%,#142faf 34.1%,#1328a6 36.4%,#1329a8 38.6%,#142eae 40.9%,#1534b7 43.2%,#1943cb 45.5%,#1533b5 47.7%,#1531b3 50.0%,#1638bc 52.3%,#1533b6 54.5%,#132cab 56.8%,#1225a2 59.1%,#173dc3 61.4%,#1328a6 63.6%,#11229c 65.9%,#173cc2 68.2%,#11229d 70.5%,#1225a1 72.7%,#1c52e0 75.0%,#1430b0 77.3%,#142eae 79.5%,#1c52e0 81.8%,#173bc1 84.1%,#1532b4 86.4%,#1a48d3 88.6%,#1226a3 90.9%,#1430b1 93.2%,#0f1c8a 95.5%,#1532b4 97.7%,#142eaf 100.0%)"></i><i style="position:absolute;left:156px;top:0;width:4px;height:100%;box-shadow:inset 1px 0 rgba(0,0,12,.82);background:linear-gradient(#080850 0.0%,#080850 2.3%,#080955 4.5%,#090b59 6.8%,#090d5f 9.1%,#0b126d 11.4%,#0b116b 13.6%,#0c1370 15.9%,#0c1576 18.2%,#0b116a 20.5%,#0c1577 22.7%,#0e1a84 25.0%,#0e1b87 27.3%,#101e90 29.5%,#0e1880 31.8%,#0f1c89 34.1%,#0f1b88 36.4%,#0f1e8f 38.6%,#102197 40.9%,#11239f 43.2%,#1431b2 45.5%,#1224a0 47.7%,#1224a0 50.0%,#11229a 52.3%,#102096 54.5%,#0f1d8e 56.8%,#0d177c 59.1%,#132baa 61.4%,#0e1b86 63.6%,#0d1679 65.9%,#142dad 68.2%,#101e90 70.5%,#0f1b88 72.7%,#1943cc 75.0%,#142eae 77.3%,#1225a1 79.5%,#1840c7 81.8%,#1226a2 84.1%,#0f1e8f 86.4%,#1535b7 88.6%,#0e1a84 90.9%,#102096 93.2%,#0c1474 95.5%,#1227a4 97.7%,#1532b4 100.0%)"></i><i style="position:absolute;left:160px;top:0;width:3px;height:100%;box-shadow:inset 1px 0 rgba(0,0,12,.82);background:linear-gradient(#080850 0.0%,#080850 2.3%,#080850 4.5%,#080850 6.8%,#080850 9.1%,#090b5a 11.4%,#0c1474 13.6%,#0d1679 15.9%,#0c1370 18.2%,#0c1475 20.5%,#0c1576 22.7%,#0d177c 25.0%,#0e1a85 27.3%,#0d187e 29.5%,#0e1b86 31.8%,#102096 34.1%,#101f91 36.4%,#11239e 38.6%,#1228a6 40.9%,#11229a 43.2%,#101e90 45.5%,#1224a0 47.7%,#142dad 50.0%,#11229c 52.3%,#112199 54.5%,#11229c 56.8%,#101f92 59.1%,#1535b7 61.4%,#0e1981 63.6%,#0f1b88 65.9%,#1227a4 68.2%,#101f92 70.5%,#112198 72.7%,#1944cd 75.0%,#142fb0 77.3%,#0f1c89 79.5%,#173abf 81.8%,#142faf 84.1%,#11239d 86.4%,#1841c9 88.6%,#101f92 90.9%,#0f1d8e 93.2%,#142faf 95.5%,#1430b1 97.7%,#173bc0 100.0%)"></i><i style="position:absolute;left:163px;top:0;width:4px;height:100%;box-shadow:inset 1px 0 rgba(0,0,12,.82);background:linear-gradient(#080850 0.0%,#080850 2.3%,#080850 4.5%,#080850 6.8%,#090a58 9.1%,#080a56 11.4%,#080851 13.6%,#0a0e61 15.9%,#0b1068 18.2%,#0a0f65 20.5%,#0a0e62 22.7%,#0b1069 25.0%,#0c1576 27.3%,#0b1068 29.5%,#0e1982 31.8%,#0d187f 34.1%,#0e1a85 36.4%,#0f1c8a 38.6%,#0e1b86 40.9%,#0d177c 43.2%,#0e1981 45.5%,#0e1a85 47.7%,#11219a 50.0%,#101f93 52.3%,#102197 54.5%,#1225a1 56.8%,#101f93 59.1%,#1533b5 61.4%,#112198 63.6%,#0d187f 65.9%,#132aa8 68.2%,#0f1b88 70.5%,#0e1983 72.7%,#1534b7 75.0%,#11229c 77.3%,#101f93 79.5%,#183fc6 81.8%,#1533b5 84.1%,#112198 86.4%,#173abf 88.6%,#0f1d8c 90.9%,#112198 93.2%,#1224a0 95.5%,#1224a1 97.7%,#112199 100.0%)"></i><i style="position:absolute;left:167px;top:0;width:4px;height:100%;box-shadow:inset 1px 0 rgba(0,0,12,.82);background:linear-gradient(#080850 0.0%,#080850 2.3%,#080850 4.5%,#080a56 6.8%,#090a58 9.1%,#080850 11.4%,#080850 13.6%,#080850 15.9%,#090d5e 18.2%,#0a0e62 20.5%,#0a0e61 22.7%,#0a0e63 25.0%,#0b1068 27.3%,#090c5b 29.5%,#0c1577 31.8%,#0c1371 34.1%,#0e1880 36.4%,#0e1a83 38.6%,#0d167a 40.9%,#0b126f 43.2%,#0d1679 45.5%,#0e1880 47.7%,#101f93 50.0%,#11229b 52.3%,#11239e 54.5%,#1227a4 56.8%,#102094 59.1%,#132baa 61.4%,#11239d 63.6%,#0d167a 65.9%,#1226a3 68.2%,#0e1981 70.5%,#0d177c 72.7%,#142eae 75.0%,#0f1e8f 77.3%,#102097 79.5%,#183fc5 81.8%,#1534b6 84.1%,#101f92 86.4%,#1636ba 88.6%,#0f1e8f 90.9%,#112198 93.2%,#0f1d8d 95.5%,#0f1d8e 97.7%,#0f1d8c 100.0%)"></i><i style="position:absolute;left:171px;top:0;width:4px;height:100%;box-shadow:inset 1px 0 rgba(0,0,12,.82);background:linear-gradient(#080850 0.0%,#080850 2.3%,#080850 4.5%,#080850 6.8%,#080850 9.1%,#080850 11.4%,#080850 13.6%,#080850 15.9%,#080850 18.2%,#090d5e 20.5%,#0a0e61 22.7%,#090d5f 25.0%,#090c5c 27.3%,#090a58 29.5%,#0b1069 31.8%,#0b116a 34.1%,#0d177d 36.4%,#0e1981 38.6%,#0d1678 40.9%,#0b126d 43.2%,#0c1577 45.5%,#0e1a83 47.7%,#0f1b89 50.0%,#11239e 52.3%,#11229b 54.5%,#102096 56.8%,#0e1a85 59.1%,#101e91 61.4%,#0f1d8e 63.6%,#0c1473 65.9%,#102094 68.2%,#0e1880 70.5%,#0d177b 72.7%,#142eae 75.0%,#0f1d8c 77.3%,#101e90 79.5%,#1534b6 81.8%,#1228a5 84.1%,#0e1982 86.4%,#142dac 88.6%,#0f1c8a 90.9%,#0e1b87 93.2%,#0d177b 95.5%,#0d187d 97.7%,#0f1e8f 100.0%)"></i><i style="position:absolute;left:175px;top:0;width:4px;height:100%;box-shadow:inset 1px 0 rgba(0,0,12,.82);background:linear-gradient(#090b5a 0.0%,#080850 2.3%,#080850 4.5%,#080850 6.8%,#080850 9.1%,#080850 11.4%,#080955 13.6%,#080850 15.9%,#090b59 18.2%,#0a0f65 20.5%,#0a1067 22.7%,#0b126e 25.0%,#0d187e 27.3%,#0e1a83 29.5%,#0c1474 31.8%,#0f1d8c 34.1%,#0e1b86 36.4%,#0f1e8f 38.6%,#102095 40.9%,#101f92 43.2%,#0f1d8e 45.5%,#102097 47.7%,#101e90 50.0%,#102097 52.3%,#102095 54.5%,#11219a 56.8%,#101f92 59.1%,#11229c 61.4%,#1227a5 63.6%,#101e90 65.9%,#132aa9 68.2%,#132cab 70.5%,#101e90 72.7%,#1430b1 75.0%,#1638bc 77.3%,#1225a1 79.5%,#142fb0 81.8%,#132aa9 84.1%,#101f91 86.4%,#1637bb 88.6%,#102095 90.9%,#0e1981 93.2%,#11219a 95.5%,#132cab 97.7%,#1225a2 100.0%)"></i><i style="position:absolute;left:179px;top:0;width:3px;height:100%;box-shadow:inset 1px 0 rgba(0,0,12,.82);background:linear-gradient(#080a57 0.0%,#090b5b 2.3%,#080850 4.5%,#080850 6.8%,#080850 9.1%,#080850 11.4%,#080a57 13.6%,#080a57 15.9%,#080953 18.2%,#090b5b 20.5%,#0a0f65 22.7%,#0c1576 25.0%,#0f1c8a 27.3%,#101e90 29.5%,#0e1a84 31.8%,#11239f 34.1%,#1329a8 36.4%,#132bab 38.6%,#1224a0 40.9%,#101e90 43.2%,#0f1c8a 45.5%,#102096 47.7%,#0f1c8a 50.0%,#102096 52.3%,#1225a1 54.5%,#132cac 56.8%,#11229a 59.1%,#1638bc 61.4%,#173ec5 63.6%,#1224a0 65.9%,#1639bd 68.2%,#1a4ad5 70.5%,#142ead 72.7%,#1639be 75.0%,#1b4fdd 77.3%,#142dad 79.5%,#173ec4 81.8%,#1636b9 84.1%,#1226a3 86.4%,#1841c8 88.6%,#1225a2 90.9%,#11229b 93.2%,#132baa 95.5%,#1228a5 97.7%,#142dad 100.0%)"></i><i style="position:absolute;left:182px;top:0;width:4px;height:100%;box-shadow:inset 1px 0 rgba(0,0,12,.82);background:linear-gradient(#70be86 0.0%,#9bd863 2.3%,#46a6a6 4.5%,#3999b4 6.8%,#3897b6 9.1%,#3186c4 11.4%,#2a76d2 13.6%,#348fbd 15.9%,#2d7dcc 18.2%,#276fd8 20.5%,#3187c3 22.7%,#62b691 25.0%,#ade355 27.3%,#bbe750 29.5%,#86cc74 31.8%,#c7e94d 34.1%,#e4f043 36.4%,#e0f044 38.6%,#bfe74f 40.9%,#9cd963 43.2%,#a6de5b 45.5%,#94d469 47.7%,#72c083 50.0%,#7bc57d 52.3%,#bde750 54.5%,#f6f646 56.8%,#a2dc5e 59.1%,#f7f74f 61.4%,#fdfdac 63.6%,#90d26c 65.9%,#f7f755 68.2%,#fefeb1 70.5%,#96d568 72.7%,#f6f647 75.0%,#fcfc8f 77.3%,#6dbd88 79.5%,#fafa6b 81.8%,#e5f143 84.1%,#53ad9c 86.4%,#fafa6c 88.6%,#8ed06e 90.9%,#51ac9d 93.2%,#1227a5 95.5%,#1225a2 97.7%,#1329a7 100.0%)"></i><i style="position:absolute;left:186px;top:0;width:4px;height:100%;box-shadow:inset 1px 0 rgba(0,0,12,.82);background:linear-gradient(#f5f542 0.0%,#f6f64c 2.3%,#f1f43f 4.5%,#c4e94d 6.8%,#b9e651 9.1%,#b7e552 11.4%,#6fbe86 13.6%,#c5e94d 15.9%,#d6ed47 18.2%,#bbe750 20.5%,#d2ec49 22.7%,#ebf240 25.0%,#f5f53f 27.3%,#f6f64c 29.5%,#ebf241 31.8%,#f5f540 34.1%,#f7f74f 36.4%,#f6f64a 38.6%,#f5f542 40.9%,#f6f64c 43.2%,#f9f966 45.5%,#f5f543 47.7%,#f7f74f 50.0%,#f3f43e 52.3%,#f8f858 54.5%,#fefeb6 56.8%,#f8f85e 59.1%,#fcfc7e 61.4%,#ffffc8 63.6%,#f7f751 65.9%,#fefeae 68.2%,#ffffc8 70.5%,#c4e94d 72.7%,#fdfd97 75.0%,#fafa6e 77.3%,#b6e552 79.5%,#ffffc8 81.8%,#f6f64b 84.1%,#b7e652 86.4%,#ffffc8 88.6%,#f7f756 90.9%,#d0ec49 93.2%,#11239e 95.5%,#11229c 97.7%,#11229c 100.0%)"></i><i style="position:absolute;left:190px;top:0;width:4px;height:100%;box-shadow:inset 1px 0 rgba(0,0,12,.82);background:linear-gradient(#e5f143 0.0%,#d1ec49 2.3%,#97d567 4.5%,#3a9bb2 6.8%,#3692ba 9.1%,#3a9cb2 11.4%,#48a7a5 13.6%,#3b9faf 15.9%,#b2e453 18.2%,#c8ea4c 20.5%,#b3e553 22.7%,#72c084 25.0%,#57b099 27.3%,#a8e05a 29.5%,#97d567 31.8%,#e4f043 34.1%,#f5f53e 36.4%,#f0f33f 38.6%,#d5ed48 40.9%,#bbe750 43.2%,#dfef45 45.5%,#ddef45 47.7%,#f6f64a 50.0%,#ebf241 52.3%,#f7f752 54.5%,#fefeb7 56.8%,#fafa6d 59.1%,#fcfc89 61.4%,#ffffc8 63.6%,#c5e94d 65.9%,#f8f85d 68.2%,#fcfc7e 70.5%,#68ba8b 72.7%,#fafa6d 75.0%,#3a9cb2 77.3%,#338dbf 79.5%,#fdfd93 81.8%,#cdeb4b 84.1%,#5db394 86.4%,#fbfb73 88.6%,#fbfb77 90.9%,#b7e552 93.2%,#173cc1 95.5%,#0e1983 97.7%,#11239d 100.0%)"></i><i style="position:absolute;left:194px;top:0;width:4px;height:100%;box-shadow:inset 1px 0 rgba(0,0,12,.82);background:linear-gradient(#e9f241 0.0%,#eef340 2.3%,#62b691 4.5%,#45a5a7 6.8%,#41a3aa 9.1%,#328ac1 11.4%,#6cbc89 13.6%,#348dbe 15.9%,#92d36b 18.2%,#d1ec49 20.5%,#d3ec48 22.7%,#ade356 25.0%,#63b78f 27.3%,#4ca9a2 29.5%,#4aa8a3 31.8%,#a9e059 34.1%,#c1e84e 36.4%,#c5e94d 38.6%,#b7e652 40.9%,#9fda61 43.2%,#b6e552 45.5%,#d6ed48 47.7%,#d7ed47 50.0%,#f5f545 52.3%,#f6f64b 54.5%,#fbfb75 56.8%,#f9f963 59.1%,#f9f961 61.4%,#ffffc8 63.6%,#f5f540 65.9%,#f8f859 68.2%,#fbfb72 70.5%,#3898b5 72.7%,#f6f64b 75.0%,#9cd963 77.3%,#54ae9c 79.5%,#fcfc87 81.8%,#bde750 84.1%,#4ba9a2 86.4%,#fbfb72 88.6%,#fdfd97 90.9%,#4daaa1 93.2%,#1639bd 95.5%,#101e90 97.7%,#132baa 100.0%)"></i><i style="position:absolute;left:198px;top:0;width:3px;height:100%;box-shadow:inset 1px 0 rgba(0,0,12,.82);background:linear-gradient(#2d7ecb 0.0%,#3ea1ac 2.3%,#2770d7 4.5%,#2468de 6.8%,#2367df 9.1%,#1e5aea 11.4%,#2872d6 13.6%,#1e5aea 15.9%,#3186c4 18.2%,#3b9faf 20.5%,#4ca9a2 22.7%,#3794b8 25.0%,#2b7acf 27.3%,#2f83c7 29.5%,#338bc0 31.8%,#3897b6 34.1%,#87cc73 36.4%,#69ba8b 38.6%,#3693b9 40.9%,#2f83c7 43.2%,#266ed9 45.5%,#5ab296 47.7%,#afe454 50.0%,#d6ed48 52.3%,#ddef45 54.5%,#f7f74f 56.8%,#f6f647 59.1%,#f6f64b 61.4%,#fefec2 63.6%,#f6f647 65.9%,#f8f85a 68.2%,#fbfb71 70.5%,#4eaaa0 72.7%,#f6f64d 75.0%,#d1ec49 77.3%,#9fda61 79.5%,#fafa67 81.8%,#ceeb4a 84.1%,#9cd963 86.4%,#fdfd93 88.6%,#fefec3 90.9%,#ace256 93.2%,#1226a4 95.5%,#102095 97.7%,#132cab 100.0%)"></i><i style="position:absolute;left:201px;top:0;width:4px;height:100%;box-shadow:inset 1px 0 rgba(0,0,12,.82);background:linear-gradient(#1842ca 0.0%,#2871d6 2.3%,#2e7fca 4.5%,#2a77d2 6.8%,#2771d7 9.1%,#266dda 11.4%,#1f5de7 13.6%,#2162e3 15.9%,#2974d4 18.2%,#2367df 20.5%,#2871d6 22.7%,#2469dd 25.0%,#1d58e8 27.3%,#2975d3 29.5%,#3590bc 31.8%,#3692ba 34.1%,#abe158 36.4%,#6dbc88 38.6%,#2e80ca 40.9%,#2770d7 43.2%,#1c52e0 45.5%,#3a9db1 47.7%,#bce750 50.0%,#cbeb4b 52.3%,#c9ea4c 54.5%,#f2f43e 56.8%,#d5ed48 59.1%,#e5f143 61.4%,#fbfb70 63.6%,#d8ee47 65.9%,#f5f53f 68.2%,#f8f85a 70.5%,#2e80c9 72.7%,#ecf240 75.0%,#a0db60 77.3%,#3ea1ac 79.5%,#ecf340 81.8%,#93d36a 84.1%,#54ae9b 86.4%,#fafa68 88.6%,#fcfc85 90.9%,#9ad864 93.2%,#0f1d8e 95.5%,#11239d 97.7%,#1328a6 100.0%)"></i><i style="position:absolute;left:205px;top:0;width:4px;height:100%;box-shadow:inset 1px 0 rgba(0,0,12,.82);background:linear-gradient(#9fdb60 0.0%,#e5f143 2.3%,#f6f647 4.5%,#f5f546 6.8%,#f1f43f 9.1%,#d5ed48 11.4%,#9dd962 13.6%,#c9ea4c 15.9%,#c8ea4c 18.2%,#90d26c 20.5%,#b4e553 22.7%,#97d667 25.0%,#3186c4 27.3%,#2264e1 29.5%,#3b9eb0 31.8%,#c5e94d 34.1%,#dcef45 36.4%,#b5e552 38.6%,#48a7a4 40.9%,#328ac1 43.2%,#55af9b 45.5%,#a8e05a 47.7%,#b0e454 50.0%,#c8ea4c 52.3%,#bfe74f 54.5%,#e8f142 56.8%,#deef45 59.1%,#e3f043 61.4%,#fafa69 63.6%,#caea4b 65.9%,#d4ed48 68.2%,#f7f74f 70.5%,#2a77d1 72.7%,#f5f53f 75.0%,#74c182 77.3%,#1b4eda 79.5%,#f7f751 81.8%,#81c978 84.1%,#2873d5 86.4%,#e8f241 88.6%,#f7f74f 90.9%,#5fb592 93.2%,#112198 95.5%,#173bc1 97.7%,#102095 100.0%)"></i><i style="position:absolute;left:209px;top:0;width:4px;height:100%;box-shadow:inset 1px 0 rgba(0,0,12,.82);background:linear-gradient(#c6e94d 0.0%,#f7f74e 2.3%,#f7f751 4.5%,#eff33f 6.8%,#e6f142 9.1%,#f5f541 11.4%,#e2f044 13.6%,#98d666 15.9%,#e4f143 18.2%,#d5ed48 20.5%,#b2e453 22.7%,#7ac47e 25.0%,#4aa8a3 27.3%,#3289c2 29.5%,#a7df5a 31.8%,#c6e94d 34.1%,#b3e553 36.4%,#89cd72 38.6%,#6abb8a 40.9%,#7ac47e 43.2%,#b2e453 45.5%,#94d469 47.7%,#ceeb4a 50.0%,#e7f142 52.3%,#d2ec49 54.5%,#f2f43e 56.8%,#e6f142 59.1%,#b1e454 61.4%,#fefeaf 63.6%,#c2e84e 65.9%,#f5f53e 68.2%,#fafa6c 70.5%,#2f82c8 72.7%,#f4f43e 75.0%,#dbee46 77.3%,#3187c4 79.5%,#f8f85d 81.8%,#f6f647 84.1%,#3a9cb2 86.4%,#f5f540 88.6%,#fcfc7f 90.9%,#3796b7 93.2%,#0e1880 95.5%,#101e91 97.7%,#102095 100.0%)"></i><i style="position:absolute;left:213px;top:0;width:3px;height:100%;box-shadow:inset 1px 0 rgba(0,0,12,.82);background:linear-gradient(#f6f646 0.0%,#f8f85d 2.3%,#f8f859 4.5%,#f8f858 6.8%,#f8f858 9.1%,#f7f750 11.4%,#f1f43f 13.6%,#d0ec49 15.9%,#c1e84f 18.2%,#c6e94d 20.5%,#94d469 22.7%,#78c37f 25.0%,#9fdb60 27.3%,#c2e84e 29.5%,#d2ec49 31.8%,#e5f143 34.1%,#c9ea4c 36.4%,#bfe84f 38.6%,#d6ed47 40.9%,#f5f542 43.2%,#f5f545 45.5%,#c6e94d 47.7%,#ebf241 50.0%,#f1f43f 52.3%,#edf340 54.5%,#f8f85a 56.8%,#f8f859 59.1%,#f2f43e 61.4%,#ffffc8 63.6%,#e4f043 65.9%,#f0f33f 68.2%,#fcfc81 70.5%,#71bf84 72.7%,#f6f64c 75.0%,#fafa6d 77.3%,#ceeb4a 79.5%,#f7f753 81.8%,#fefec0 84.1%,#d5ed48 86.4%,#f9f966 88.6%,#fdfda3 90.9%,#3da0ad 93.2%,#0f1c8a 95.5%,#0e1982 97.7%,#1225a1 100.0%)"></i><i style="position:absolute;left:216px;top:0;width:4px;height:100%;box-shadow:inset 1px 0 rgba(0,0,12,.82);background:linear-gradient(#d1ec49 0.0%,#d4ed48 2.3%,#dbee46 4.5%,#f1f43f 6.8%,#f2f43e 9.1%,#d3ec48 11.4%,#ade256 13.6%,#b2e453 15.9%,#3794b8 18.2%,#40a2ab 20.5%,#3289c2 22.7%,#348fbd 25.0%,#73c183 27.3%,#b6e552 29.5%,#8ed06e 31.8%,#a0db60 34.1%,#85cb75 36.4%,#87cc74 38.6%,#bce750 40.9%,#e4f043 43.2%,#d3ec49 45.5%,#80c879 47.7%,#91d26b 50.0%,#8bcf70 52.3%,#a6df5b 54.5%,#eaf241 56.8%,#dfef44 59.1%,#c0e84f 61.4%,#fafa68 63.6%,#7bc57d 65.9%,#66b88e 68.2%,#f5f541 70.5%,#2a78d1 72.7%,#aee355 75.0%,#f6f649 77.3%,#aee355 79.5%,#81c978 81.8%,#fbfb71 84.1%,#9dd962 86.4%,#e6f142 88.6%,#f7f74f 90.9%,#1a4bd7 93.2%,#102095 95.5%,#0e1982 97.7%,#1227a5 100.0%)"></i><i style="position:absolute;left:220px;top:0;width:4px;height:100%;box-shadow:inset 1px 0 rgba(0,0,12,.82);background:linear-gradient(#fafa6f 0.0%,#fafa6d 2.3%,#ffffc8 4.5%,#fefeb8 6.8%,#fdfd96 9.1%,#fbfb77 11.4%,#f8f85c 13.6%,#f8f858 15.9%,#d7ed47 18.2%,#c5e94d 20.5%,#bee74f 22.7%,#eaf241 25.0%,#f9f95f 27.3%,#f1f43f 29.5%,#f6f64d 31.8%,#f0f33f 34.1%,#f7f751 36.4%,#f8f85c 38.6%,#fafa6a 40.9%,#fcfc7d 43.2%,#fcfc78 45.5%,#fbfb73 47.7%,#f6f649 50.0%,#f7f750 52.3%,#fafa6a 54.5%,#fdfda9 56.8%,#f9f966 59.1%,#f9f961 61.4%,#ffffc8 63.6%,#d6ed47 65.9%,#f9f960 68.2%,#ffffc8 70.5%,#cceb4b 72.7%,#fafa67 75.0%,#ffffc8 77.3%,#f8f85d 79.5%,#f7f74f 81.8%,#ffffc8 84.1%,#eaf241 86.4%,#fafa6d 88.6%,#ffffc8 90.9%,#6dbd88 93.2%,#102197 95.5%,#11229a 97.7%,#0f1d8d 100.0%)"></i><i style="position:absolute;left:224px;top:0;width:4px;height:100%;box-shadow:inset 1px 0 rgba(0,0,12,.82);background:linear-gradient(#d5ed48 0.0%,#cfeb4a 2.3%,#e7f142 4.5%,#dfef45 6.8%,#c5e94d 9.1%,#7ac57d 11.4%,#3795b8 13.6%,#5ab297 15.9%,#84cb75 18.2%,#94d469 20.5%,#59b197 22.7%,#54ae9c 25.0%,#90d16c 27.3%,#5eb494 29.5%,#9cd963 31.8%,#55af9a 34.1%,#bae651 36.4%,#b7e652 38.6%,#afe454 40.9%,#c3e94e 43.2%,#c9ea4c 45.5%,#57b099 47.7%,#b1e454 50.0%,#c0e84f 52.3%,#9cd963 54.5%,#bde750 56.8%,#bde750 59.1%,#99d765 61.4%,#d9ee47 63.6%,#2c7ccd 65.9%,#57b099 68.2%,#f6f649 70.5%,#63b790 72.7%,#55af9a 75.0%,#f9f960 77.3%,#93d36a 79.5%,#86cc74 81.8%,#f6f648 84.1%,#2365e0 86.4%,#95d469 88.6%,#cfeb4a 90.9%,#1a4bd7 93.2%,#0f1e8f 95.5%,#101f93 97.7%,#112199 100.0%)"></i><i style="position:absolute;left:228px;top:0;width:4px;height:100%;box-shadow:inset 1px 0 rgba(0,0,12,.82);background:linear-gradient(#1d57e7 0.0%,#1946cf 2.3%,#1c51de 4.5%,#1a4bd7 6.8%,#1a49d4 9.1%,#173ec5 11.4%,#11229c 13.6%,#1639bd 15.9%,#1946cf 18.2%,#205fe6 20.5%,#266dd9 22.7%,#2d7fcb 25.0%,#3999b4 27.3%,#3898b5 29.5%,#4aa8a3 31.8%,#7ec77a 34.1%,#cfeb4a 36.4%,#c7e94d 38.6%,#b2e453 40.9%,#bce750 43.2%,#e3f043 45.5%,#b5e553 47.7%,#f0f33f 50.0%,#deef45 52.3%,#e6f142 54.5%,#f7f754 56.8%,#f5f53e 59.1%,#cfeb4a 61.4%,#fbfb73 63.6%,#92d36b 65.9%,#e7f142 68.2%,#ffffc8 70.5%,#fbfb71 72.7%,#f9f962 75.0%,#ffffc8 77.3%,#f6f647 79.5%,#fbfb74 81.8%,#ffffc8 84.1%,#c7e94d 86.4%,#fcfc79 88.6%,#fefec4 90.9%,#b0e454 93.2%,#0d177c 95.5%,#0d187e 97.7%,#0e1b86 100.0%)"></i><i style="position:absolute;left:232px;top:0;width:3px;height:100%;box-shadow:inset 1px 0 rgba(0,0,12,.82);background:linear-gradient(#1d59ea 0.0%,#1b4edb 2.3%,#1c55e4 4.5%,#1c51df 6.8%,#1c54e2 9.1%,#1c51df 11.4%,#1638bc 13.6%,#1b4eda 15.9%,#1b4fdc 18.2%,#2264e2 20.5%,#2f83c7 22.7%,#399ab3 25.0%,#4ba9a2 27.3%,#5bb296 29.5%,#58b098 31.8%,#afe454 34.1%,#c9ea4c 36.4%,#bae651 38.6%,#9eda61 40.9%,#a4dd5c 43.2%,#d7ed47 45.5%,#cceb4b 47.7%,#f3f43e 50.0%,#cceb4b 52.3%,#e6f142 54.5%,#f9f95f 56.8%,#f6f649 59.1%,#bce750 61.4%,#fefead 63.6%,#c6e94d 65.9%,#e6f142 68.2%,#ffffc8 70.5%,#fcfc82 72.7%,#fafa6b 75.0%,#ffffc8 77.3%,#f6f648 79.5%,#fbfb77 81.8%,#ffffc8 84.1%,#f5f544 86.4%,#fdfd9c 88.6%,#ffffc8 90.9%,#d3ec48 93.2%,#0e1983 95.5%,#0e1982 97.7%,#0e1a84 100.0%)"></i><i style="position:absolute;left:235px;top:0;width:4px;height:100%;box-shadow:inset 1px 0 rgba(0,0,12,.82);background:linear-gradient(#0a0e63 0.0%,#0e1981 2.3%,#0c1577 4.5%,#0c1576 6.8%,#0c1371 9.1%,#0a0f66 11.4%,#0a0e62 13.6%,#0e1981 15.9%,#101e90 18.2%,#101e91 20.5%,#132aa8 22.7%,#1535b8 25.0%,#1636b9 27.3%,#1840c7 29.5%,#1b4edb 31.8%,#2366e0 34.1%,#1d58e9 36.4%,#1c54e2 38.6%,#1c54e3 40.9%,#1d58e8 43.2%,#2871d6 45.5%,#3a9db1 47.7%,#41a3aa 50.0%,#338cbf 52.3%,#3999b4 54.5%,#b6e552 56.8%,#d6ed48 59.1%,#3289c2 61.4%,#f9f965 63.6%,#9ad864 65.9%,#4ba9a2 68.2%,#fbfb72 70.5%,#c5e94d 72.7%,#72c084 75.0%,#fdfda8 77.3%,#b1e454 79.5%,#97d667 81.8%,#fdfd93 84.1%,#c7e94c 86.4%,#f5f542 88.6%,#ffffc8 90.9%,#3b9eb0 93.2%,#1533b5 95.5%,#1430b0 97.7%,#1224a1 100.0%)"></i><i style="position:absolute;left:239px;top:0;width:4px;height:100%;box-shadow:inset 1px 0 rgba(0,0,12,.82);background:linear-gradient(#1329a7 0.0%,#1637ba 2.3%,#1a48d2 4.5%,#1a4bd6 6.8%,#1b50dd 9.1%,#2265e1 11.4%,#2060e5 13.6%,#205ee6 15.9%,#2974d4 18.2%,#3289c2 20.5%,#3ea1ad 22.7%,#46a6a6 25.0%,#3a9cb1 27.3%,#74c182 29.5%,#bae651 31.8%,#a5de5c 34.1%,#6ebd87 36.4%,#3a9cb1 38.6%,#47a6a5 40.9%,#a0db60 43.2%,#83ca76 45.5%,#eef340 47.7%,#daee46 50.0%,#e3f043 52.3%,#f5f53f 54.5%,#f8f85d 56.8%,#f9f95f 59.1%,#f1f43f 61.4%,#ffffc8 63.6%,#f8f85e 65.9%,#f5f540 68.2%,#ffffc8 70.5%,#f7f750 72.7%,#f5f543 75.0%,#ffffc8 77.3%,#f7f74e 79.5%,#f7f750 81.8%,#ffffc8 84.1%,#fcfc86 86.4%,#fbfb70 88.6%,#ffffc8 90.9%,#f6f647 93.2%,#0f1b89 95.5%,#1535b7 97.7%,#132cab 100.0%)"></i><i style="position:absolute;left:243px;top:0;width:4px;height:100%;box-shadow:inset 1px 0 rgba(0,0,12,.82);background:linear-gradient(#0c1473 0.0%,#0f1c8b 2.3%,#142faf 4.5%,#1224a0 6.8%,#1226a3 9.1%,#1840c7 11.4%,#1535b8 13.6%,#11229c 15.9%,#1328a6 18.2%,#1c53e1 20.5%,#1c52e0 22.7%,#1b50de 25.0%,#2265e1 27.3%,#2a77d1 29.5%,#3795b8 31.8%,#266ed9 34.1%,#2974d4 36.4%,#2d7fcb 38.6%,#348ebe 40.9%,#3999b4 43.2%,#338bc0 45.5%,#98d666 47.7%,#77c380 50.0%,#b9e651 52.3%,#bce750 54.5%,#d4ed48 56.8%,#d7ed47 59.1%,#a2dc5e 61.4%,#fcfc7e 63.6%,#deef45 65.9%,#afe454 68.2%,#fefeb6 70.5%,#f5f544 72.7%,#e4f043 75.0%,#fefec6 77.3%,#dfef45 79.5%,#d9ee46 81.8%,#ffffc8 84.1%,#f9f962 86.4%,#f7f750 88.6%,#ffffc8 90.9%,#d2ec49 93.2%,#102094 95.5%,#1531b2 97.7%,#1225a2 100.0%)"></i><i style="position:absolute;left:247px;top:0;width:4px;height:100%;box-shadow:inset 1px 0 rgba(0,0,12,.82);background:linear-gradient(#0e1a84 0.0%,#11219a 2.3%,#1842ca 4.5%,#1638bc 6.8%,#1431b2 9.1%,#173bc0 11.4%,#1531b3 13.6%,#1227a5 15.9%,#1228a5 18.2%,#1a4ad5 20.5%,#1943cb 22.7%,#1945cf 25.0%,#2265e1 27.3%,#2975d3 29.5%,#3289c1 31.8%,#2873d5 34.1%,#3591bb 36.4%,#5ab297 38.6%,#73c083 40.9%,#62b691 43.2%,#4ba8a3 45.5%,#aae158 47.7%,#aee355 50.0%,#f5f53e 52.3%,#dfef45 54.5%,#d5ed48 56.8%,#b7e552 59.1%,#99d766 61.4%,#fbfb73 63.6%,#f3f43e 65.9%,#c5e94d 68.2%,#ffffc8 70.5%,#fbfb72 72.7%,#f6f64e 75.0%,#ffffc8 77.3%,#f7f74f 79.5%,#f4f43e 81.8%,#ffffc8 84.1%,#f9f965 86.4%,#f9f962 88.6%,#ffffc8 90.9%,#d9ee46 93.2%,#1226a4 95.5%,#1228a6 97.7%,#102095 100.0%)"></i><i style="position:absolute;left:251px;top:0;width:3px;height:100%;box-shadow:inset 1px 0 rgba(0,0,12,.82);background:linear-gradient(#080850 0.0%,#080850 2.3%,#0d177c 4.5%,#0f1c8b 6.8%,#0c1370 9.1%,#080850 11.4%,#080850 13.6%,#0c1372 15.9%,#0b116b 18.2%,#0a0f64 20.5%,#0a0e63 22.7%,#0c1474 25.0%,#101f93 27.3%,#132ba9 29.5%,#1430b2 31.8%,#173cc2 34.1%,#1d56e6 36.4%,#276fd8 38.6%,#2b79d0 40.9%,#2871d6 43.2%,#256bdb 45.5%,#2b7acf 47.7%,#3694b9 50.0%,#b9e651 52.3%,#80c879 54.5%,#4fab9f 56.8%,#2c7ccd 59.1%,#256bdb 61.4%,#d4ed48 63.6%,#bbe750 65.9%,#51ac9e 68.2%,#f9f965 70.5%,#f6f649 72.7%,#b5e552 75.0%,#ffffc8 77.3%,#e1f044 79.5%,#90d16c 81.8%,#ffffc8 84.1%,#c7e94d 86.4%,#cfeb4a 88.6%,#fdfda0 90.9%,#3796b7 93.2%,#1532b4 95.5%,#101f93 97.7%,#0e1a85 100.0%)"></i><i style="position:absolute;left:254px;top:0;width:4px;height:100%;box-shadow:inset 1px 0 rgba(0,0,12,.82);background:linear-gradient(#080850 0.0%,#080850 2.3%,#0d1679 4.5%,#0e1b86 6.8%,#0c1473 9.1%,#080954 11.4%,#080851 13.6%,#0f1c8b 15.9%,#0a0e62 18.2%,#0c1371 20.5%,#0c1472 22.7%,#0e1a84 25.0%,#1328a6 27.3%,#1224a1 29.5%,#1638bb 31.8%,#1534b6 34.1%,#1d56e6 36.4%,#266dda 38.6%,#266dda 40.9%,#256bdb 43.2%,#4fab9f 45.5%,#8ed06e 47.7%,#bce750 50.0%,#91d26c 52.3%,#7cc57c 54.5%,#99d766 56.8%,#2f82c8 59.1%,#1d57e7 61.4%,#eff33f 63.6%,#cceb4b 65.9%,#5cb395 68.2%,#f9f966 70.5%,#f6f647 72.7%,#60b592 75.0%,#fdfda9 77.3%,#f7f752 79.5%,#c0e84f 81.8%,#ffffc8 84.1%,#a6de5b 86.4%,#8fd16d 88.6%,#f9f963 90.9%,#5fb493 93.2%,#112198 95.5%,#1637bb 97.7%,#1430b1 100.0%)"></i><i style="position:absolute;left:258px;top:0;width:4px;height:100%;box-shadow:inset 1px 0 rgba(0,0,12,.82);background:linear-gradient(#0b1068 0.0%,#080954 2.3%,#0e1980 4.5%,#0f1d8e 6.8%,#101e91 9.1%,#102096 11.4%,#11229d 13.6%,#101e90 15.9%,#0f1c89 18.2%,#0e1a85 20.5%,#11229c 22.7%,#173bc1 25.0%,#1b4eda 27.3%,#1943cc 29.5%,#1d58e8 31.8%,#173ec5 34.1%,#1a48d3 36.4%,#2367df 38.6%,#3186c4 40.9%,#338dbf 43.2%,#58b198 45.5%,#54ae9c 47.7%,#c5e94d 50.0%,#bee74f 52.3%,#afe454 54.5%,#a6df5b 56.8%,#2b78d0 59.1%,#2060e5 61.4%,#dcef46 63.6%,#9fda61 65.9%,#5cb395 68.2%,#fafa6b 70.5%,#f9f962 72.7%,#cdeb4b 75.0%,#ffffc8 77.3%,#c2e84e 79.5%,#c8ea4c 81.8%,#fcfc7f 84.1%,#348ebe 86.4%,#9bd864 88.6%,#f7f750 90.9%,#40a2ab 93.2%,#102197 95.5%,#11229d 97.7%,#132cab 100.0%)"></i><i style="position:absolute;left:262px;top:0;width:4px;height:100%;box-shadow:inset 1px 0 rgba(0,0,12,.82);background:linear-gradient(#1b50dd 0.0%,#1637bb 2.3%,#1944cd 4.5%,#1a49d4 6.8%,#1c51de 9.1%,#2367df 11.4%,#3693b9 13.6%,#1f5de8 15.9%,#2975d3 18.2%,#266ed9 20.5%,#3084c6 22.7%,#3b9eb0 25.0%,#4ca9a2 27.3%,#4daaa1 29.5%,#66b88d 31.8%,#58b198 34.1%,#53ad9c 36.4%,#a0db60 38.6%,#d0ec4a 40.9%,#d7ed47 43.2%,#f6f648 45.5%,#e2f044 47.7%,#f8f857 50.0%,#f8f85f 52.3%,#f6f64e 54.5%,#f5f546 56.8%,#b0e454 59.1%,#74c183 61.4%,#f9f95f 63.6%,#cceb4b 65.9%,#d3ec49 68.2%,#ffffc8 70.5%,#ffffc8 72.7%,#fafa6c 75.0%,#ffffc8 77.3%,#ebf241 79.5%,#f8f85b 81.8%,#ffffc8 84.1%,#97d667 86.4%,#f8f85b 88.6%,#fdfd97 90.9%,#b9e651 93.2%,#1227a4 95.5%,#101e91 97.7%,#142dac 100.0%)"></i><i style="position:absolute;left:266px;top:0;width:4px;height:100%;box-shadow:inset 1px 0 rgba(0,0,12,.82);background:linear-gradient(#0d167a 0.0%,#090a58 2.3%,#080850 4.5%,#080850 6.8%,#080850 9.1%,#090d5f 11.4%,#1329a7 13.6%,#0a1067 15.9%,#101f93 18.2%,#101f92 20.5%,#101f92 22.7%,#0f1d8c 25.0%,#0d187f 27.3%,#101f94 29.5%,#0d187e 31.8%,#142dad 34.1%,#1224a0 36.4%,#1533b6 38.6%,#173ec4 40.9%,#1533b5 43.2%,#2366e0 45.5%,#173bc0 47.7%,#1946cf 50.0%,#1b50de 52.3%,#1430b1 54.5%,#102095 56.8%,#0e1980 59.1%,#080850 61.4%,#0e1981 63.6%,#0a0f64 65.9%,#0a0d60 68.2%,#1945cf 70.5%,#2366df 72.7%,#1638bd 75.0%,#1947d1 77.3%,#0c1472 79.5%,#0d187e 81.8%,#173dc3 84.1%,#0d1678 86.4%,#102095 88.6%,#1534b6 90.9%,#0a0e62 93.2%,#1533b5 95.5%,#0f1e8e 97.7%,#1430b1 100.0%)"></i><i style="position:absolute;left:270px;top:0;width:3px;height:100%;box-shadow:inset 1px 0 rgba(0,0,12,.82);background:linear-gradient(#1944cd 0.0%,#2d7dcc 2.3%,#205fe6 4.5%,#2265e1 6.8%,#2771d7 9.1%,#3085c6 11.4%,#6fbe86 13.6%,#52ad9d 15.9%,#8dd06f 18.2%,#53ad9c 20.5%,#81c878 22.7%,#d6ed48 25.0%,#f6f64c 27.3%,#f5f543 29.5%,#c5e94d 31.8%,#68ba8c 34.1%,#3896b6 36.4%,#5bb296 38.6%,#7bc57d 40.9%,#5fb493 43.2%,#dbee46 45.5%,#93d36a 47.7%,#d3ec49 50.0%,#c3e84e 52.3%,#c4e94d 54.5%,#ddef45 56.8%,#ade355 59.1%,#9eda61 61.4%,#fafa6d 63.6%,#c5e94d 65.9%,#b2e453 68.2%,#fdfda7 70.5%,#f9f95f 72.7%,#a0db60 75.0%,#fdfd97 77.3%,#f2f43e 79.5%,#c2e84e 81.8%,#ffffc8 84.1%,#f5f545 86.4%,#f6f64a 88.6%,#ffffc8 90.9%,#e5f143 93.2%,#0e1981 95.5%,#0c1575 97.7%,#101f92 100.0%)"></i><i style="position:absolute;left:273px;top:0;width:4px;height:100%;box-shadow:inset 1px 0 rgba(0,0,12,.82);background:linear-gradient(#2469dd 0.0%,#2161e4 2.3%,#2162e4 4.5%,#2c7bce 6.8%,#3999b4 9.1%,#7ec77b 11.4%,#b9e651 13.6%,#d0ec49 15.9%,#cfeb4a 18.2%,#6ebd87 20.5%,#ace256 22.7%,#f3f43e 25.0%,#f7f752 27.3%,#f7f74f 29.5%,#caea4b 31.8%,#97d667 34.1%,#6cbc89 36.4%,#73c183 38.6%,#71bf85 40.9%,#5db394 43.2%,#bce750 45.5%,#7ac57d 47.7%,#f5f546 50.0%,#eff33f 52.3%,#f1f43f 54.5%,#f6f647 56.8%,#c2e84e 59.1%,#60b592 61.4%,#f9f963 63.6%,#f5f544 65.9%,#8bcf70 68.2%,#fdfd97 70.5%,#f7f756 72.7%,#c9ea4c 75.0%,#fefeb2 77.3%,#fcfc87 79.5%,#f5f544 81.8%,#ffffc8 84.1%,#ffffc8 86.4%,#f7f751 88.6%,#ffffc8 90.9%,#f7f751 93.2%,#0f1c89 95.5%,#0e1a84 97.7%,#132cab 100.0%)"></i><i style="position:absolute;left:277px;top:0;width:4px;height:100%;box-shadow:inset 1px 0 rgba(0,0,12,.82);background:linear-gradient(#1c54e3 0.0%,#1c51df 2.3%,#2365e0 4.5%,#2872d6 6.8%,#3186c4 9.1%,#65b88e 11.4%,#abe257 13.6%,#dcef45 15.9%,#dfef45 18.2%,#75c182 20.5%,#a1db5f 22.7%,#e0ef44 25.0%,#f5f53e 27.3%,#f5f545 29.5%,#c9ea4c 31.8%,#b2e453 34.1%,#79c47e 36.4%,#7fc87a 38.6%,#85cb75 40.9%,#6cbc88 43.2%,#78c37f 45.5%,#b2e454 47.7%,#f5f53e 50.0%,#f5f546 52.3%,#f6f648 54.5%,#f6f64a 56.8%,#c6e94d 59.1%,#74c182 61.4%,#fafa6c 63.6%,#f6f64b 65.9%,#92d36b 68.2%,#fdfda7 70.5%,#f8f85e 72.7%,#d9ee47 75.0%,#fdfda8 77.3%,#fefebf 79.5%,#f6f649 81.8%,#ffffc8 84.1%,#ffffc8 86.4%,#f6f647 88.6%,#ffffc8 90.9%,#f8f85c 93.2%,#102094 95.5%,#0f1b89 97.7%,#11229d 100.0%)"></i><i style="position:absolute;left:281px;top:0;width:4px;height:100%;box-shadow:inset 1px 0 rgba(0,0,12,.82);background:linear-gradient(#0c1576 0.0%,#0f1c8b 2.3%,#1533b5 4.5%,#142dac 6.8%,#132baa 9.1%,#1843cb 11.4%,#1d59ea 13.6%,#3999b4 15.9%,#6abb8a 18.2%,#328ac1 20.5%,#399bb3 22.7%,#57b099 25.0%,#42a3aa 27.3%,#58b198 29.5%,#3a9cb2 31.8%,#3b9faf 34.1%,#2c7ccd 36.4%,#2e81c9 38.6%,#328ac1 40.9%,#2b78d0 43.2%,#1c54e3 45.5%,#6ebd87 47.7%,#54ae9c 50.0%,#9dd962 52.3%,#ade355 54.5%,#ade256 56.8%,#5bb296 59.1%,#348ebe 61.4%,#f5f545 63.6%,#c4e94d 65.9%,#3692ba 68.2%,#f9f963 70.5%,#d9ee47 72.7%,#6bbc89 75.0%,#f7f754 77.3%,#fafa6c 79.5%,#9cd863 81.8%,#fdfda9 84.1%,#fbfb73 86.4%,#6abb8a 88.6%,#fcfc88 90.9%,#e1f044 93.2%,#1225a2 95.5%,#101e90 97.7%,#0e1a84 100.0%)"></i><i style="position:absolute;left:285px;top:0;width:4px;height:100%;box-shadow:inset 1px 0 rgba(0,0,12,.82);background:linear-gradient(#132cab 0.0%,#112198 2.3%,#1944cd 4.5%,#1944cd 6.8%,#173ec4 9.1%,#1842ca 11.4%,#1841c8 13.6%,#3085c5 15.9%,#328ac1 18.2%,#7ec77b 20.5%,#c1e84f 22.7%,#b0e454 25.0%,#42a3aa 27.3%,#3a9db1 29.5%,#5cb395 31.8%,#57b099 34.1%,#3fa2ac 36.4%,#2d7dcc 38.6%,#2162e3 40.9%,#2161e4 43.2%,#2f81c8 45.5%,#45a5a7 47.7%,#73c183 50.0%,#3b9faf 52.3%,#3999b4 54.5%,#6dbd88 56.8%,#79c47e 59.1%,#2263e2 61.4%,#bbe750 63.6%,#f5f540 65.9%,#328ac1 68.2%,#f7f74e 70.5%,#a4dd5d 72.7%,#348ebe 75.0%,#fafa6d 77.3%,#fdfd94 79.5%,#76c281 81.8%,#fafa69 84.1%,#f7f752 86.4%,#57b099 88.6%,#fdfda8 90.9%,#f7f750 93.2%,#1638bb 95.5%,#183fc6 97.7%,#102096 100.0%)"></i><i style="position:absolute;left:289px;top:0;width:3px;height:100%;box-shadow:inset 1px 0 rgba(0,0,12,.82);background:linear-gradient(#173bc0 0.0%,#1637bb 2.3%,#1c53e2 4.5%,#1b4cd8 6.8%,#1943cc 9.1%,#1b4fdb 11.4%,#2a76d2 13.6%,#3186c4 15.9%,#3a9bb2 18.2%,#b8e651 20.5%,#c4e94d 22.7%,#97d667 25.0%,#56af99 27.3%,#64b88f 29.5%,#7fc77a 31.8%,#3a9cb2 34.1%,#2a76d2 36.4%,#2d7dcc 38.6%,#3896b6 40.9%,#44a5a8 43.2%,#3692ba 45.5%,#2975d3 47.7%,#3a9cb1 50.0%,#90d16c 52.3%,#77c380 54.5%,#8dd06e 56.8%,#bae651 59.1%,#2975d3 61.4%,#f5f544 63.6%,#f8f858 65.9%,#3795b8 68.2%,#f9f960 70.5%,#d8ee47 72.7%,#3796b7 75.0%,#fbfb76 77.3%,#fbfb70 79.5%,#cceb4b 81.8%,#fcfc7c 84.1%,#f8f85e 86.4%,#86cc74 88.6%,#ffffc8 90.9%,#fafa6b 93.2%,#0f1d8c 95.5%,#1636b9 97.7%,#0f1d8e 100.0%)"></i><i style="position:absolute;left:292px;top:0;width:4px;height:100%;box-shadow:inset 1px 0 rgba(0,0,12,.82);background:linear-gradient(#1d55e5 0.0%,#1d59ea 2.3%,#2b7acf 4.5%,#2a77d2 6.8%,#256bdc 9.1%,#2770d7 11.4%,#399ab3 13.6%,#3289c2 15.9%,#50ac9e 18.2%,#c1e84e 20.5%,#daee46 22.7%,#c4e94e 25.0%,#9cd963 27.3%,#c9ea4c 29.5%,#bce750 31.8%,#68ba8b 34.1%,#3897b6 36.4%,#3897b6 38.6%,#40a2ab 40.9%,#4fab9f 43.2%,#77c380 45.5%,#3999b4 47.7%,#7fc879 50.0%,#a5de5c 52.3%,#8ace71 54.5%,#b3e553 56.8%,#e1f044 59.1%,#6bbc89 61.4%,#f6f64d 63.6%,#fcfc7f 65.9%,#74c183 68.2%,#fafa6e 70.5%,#f9f95f 72.7%,#7bc57d 75.0%,#fdfd99 77.3%,#fcfc7a 79.5%,#cceb4b 81.8%,#fefead 84.1%,#f8f85d 86.4%,#c6e94d 88.6%,#ffffc8 90.9%,#f9f961 93.2%,#0d187f 95.5%,#1636ba 97.7%,#1224a0 100.0%)"></i><i style="position:absolute;left:296px;top:0;width:4px;height:100%;box-shadow:inset 1px 0 rgba(0,0,12,.82);background:linear-gradient(#3b9eaf 0.0%,#4eaba0 2.3%,#77c380 4.5%,#86cb74 6.8%,#59b197 9.1%,#2f83c7 11.4%,#2b79d0 13.6%,#1b4dda 15.9%,#1d59ea 18.2%,#2d7ecb 20.5%,#3590bc 22.7%,#2c7ccd 25.0%,#1e5be9 27.3%,#3084c6 29.5%,#2367df 31.8%,#173bc0 34.1%,#1430b1 36.4%,#1224a1 38.6%,#101f94 40.9%,#101f94 43.2%,#1944cd 45.5%,#1531b3 47.7%,#1842ca 50.0%,#1430b1 52.3%,#11239e 54.5%,#1639bd 56.8%,#1f5ce8 59.1%,#1843cb 61.4%,#2163e3 63.6%,#70be86 65.9%,#173dc2 68.2%,#2f83c7 70.5%,#48a7a5 72.7%,#1841c8 75.0%,#3898b5 77.3%,#2a76d2 79.5%,#1533b5 81.8%,#3692ba 84.1%,#1a4ad5 86.4%,#1945ce 88.6%,#59b197 90.9%,#1b4dd9 93.2%,#0e1980 95.5%,#1430b1 97.7%,#1430b0 100.0%)"></i><i style="position:absolute;left:300px;top:0;width:4px;height:100%;box-shadow:inset 1px 0 rgba(0,0,12,.82);background:linear-gradient(#f5f53e 0.0%,#f5f541 2.3%,#f6f647 4.5%,#f8f85b 6.8%,#f7f750 9.1%,#c1e84e 11.4%,#49a7a4 13.6%,#62b690 15.9%,#69ba8b 18.2%,#caea4c 20.5%,#d8ee47 22.7%,#c6e94d 25.0%,#9dd962 27.3%,#50ab9f 29.5%,#8bcf70 31.8%,#2468de 34.1%,#2a77d1 36.4%,#2366e0 38.6%,#1d56e6 40.9%,#1e5aea 43.2%,#2265e1 45.5%,#3187c4 47.7%,#2a76d2 50.0%,#2e7fca 52.3%,#1f5ee7 54.5%,#2975d3 56.8%,#76c281 59.1%,#1e5aea 61.4%,#c8ea4c 63.6%,#f6f648 65.9%,#54ae9b 68.2%,#b5e552 70.5%,#f0f33f 72.7%,#77c280 75.0%,#e9f241 77.3%,#3186c4 79.5%,#2f82c8 81.8%,#d1ec49 84.1%,#3187c3 86.4%,#246add 88.6%,#6fbe86 90.9%,#47a6a6 93.2%,#112199 95.5%,#0c1575 97.7%,#101f92 100.0%)"></i><i style="position:absolute;left:304px;top:0;width:4px;height:100%;box-shadow:inset 1px 0 rgba(0,0,12,.82);background:linear-gradient(#f6f648 0.0%,#c9ea4c 2.3%,#d9ee47 4.5%,#e6f142 6.8%,#eff33f 9.1%,#daee46 11.4%,#58b098 13.6%,#b3e553 15.9%,#5bb296 18.2%,#6ebd87 20.5%,#89ce72 22.7%,#9dd962 25.0%,#9fdb60 27.3%,#7bc57d 29.5%,#3b9eb0 31.8%,#3897b6 34.1%,#2974d4 36.4%,#2e7fca 38.6%,#2d7ecc 40.9%,#1d59ea 43.2%,#256cdb 45.5%,#3188c3 47.7%,#358fbc 50.0%,#276fd8 52.3%,#2c7bce 54.5%,#3b9eb0 56.8%,#3a9bb2 59.1%,#1d57e7 61.4%,#ade356 63.6%,#f6f64a 65.9%,#6bbb8a 68.2%,#ade355 70.5%,#bae651 72.7%,#3692ba 75.0%,#dfef44 77.3%,#80c879 79.5%,#3085c5 81.8%,#97d667 84.1%,#2468de 86.4%,#1d56e6 88.6%,#b7e652 90.9%,#4ca9a2 93.2%,#1227a4 95.5%,#1227a4 97.7%,#11229b 100.0%)"></i><i style="position:absolute;left:308px;top:0;width:3px;height:100%;box-shadow:inset 1px 0 rgba(0,0,12,.82);background:linear-gradient(#f4f43e 0.0%,#dfef44 2.3%,#edf340 4.5%,#deef45 6.8%,#dcef46 9.1%,#d6ed47 11.4%,#80c879 13.6%,#daee46 15.9%,#b1e454 18.2%,#6fbe86 20.5%,#4eaaa0 22.7%,#62b690 25.0%,#8dd06f 27.3%,#88cd73 29.5%,#3694b9 31.8%,#338bc0 34.1%,#256bdc 36.4%,#2e7fca 38.6%,#348ebe 40.9%,#2b78d0 43.2%,#2469dd 45.5%,#2c7ccd 47.7%,#2d7ecb 50.0%,#2e81c9 52.3%,#3999b4 54.5%,#63b790 56.8%,#6dbd88 59.1%,#358fbc 61.4%,#bbe651 63.6%,#c2e84e 65.9%,#3795b7 68.2%,#bce750 70.5%,#a8e05a 72.7%,#2b78d0 75.0%,#cbea4b 77.3%,#b1e454 79.5%,#2975d3 81.8%,#bbe650 84.1%,#62b690 86.4%,#276fd8 88.6%,#dbee46 90.9%,#84cb76 93.2%,#1224a0 95.5%,#132aa8 97.7%,#0f1d8d 100.0%)"></i><i style="position:absolute;left:311px;top:0;width:4px;height:100%;box-shadow:inset 1px 0 rgba(0,0,12,.82);background:linear-gradient(#0e1981 0.0%,#0f1c8a 2.3%,#11229b 4.5%,#0d187d 6.8%,#0c1575 9.1%,#0e1981 11.4%,#0c1473 13.6%,#1531b3 15.9%,#132cab 18.2%,#0e1a86 20.5%,#0b136f 22.7%,#0d177d 25.0%,#1224a1 27.3%,#1636b9 29.5%,#0e1983 31.8%,#0c1577 34.1%,#0b1069 36.4%,#0e1981 38.6%,#102096 40.9%,#101e91 43.2%,#0e1a83 45.5%,#0e1b87 47.7%,#0e1982 50.0%,#1227a4 52.3%,#173cc1 54.5%,#1b4fdc 56.8%,#2469de 59.1%,#1a4bd7 61.4%,#2f82c8 63.6%,#1d57e6 65.9%,#1328a6 68.2%,#3590bc 70.5%,#2c7bce 72.7%,#11239d 75.0%,#338cbf 77.3%,#348ebe 79.5%,#1226a3 81.8%,#40a2ab 84.1%,#3da0ad 86.4%,#1840c7 88.6%,#7fc77a 90.9%,#3288c2 93.2%,#11239d 95.5%,#132aa8 97.7%,#0f1d8d 100.0%)"></i><i style="position:absolute;left:315px;top:0;width:4px;height:100%;box-shadow:inset 1px 0 rgba(0,0,12,.82);background:linear-gradient(#2f82c8 0.0%,#2060e5 2.3%,#2e80ca 4.5%,#1c54e3 6.8%,#1842c9 9.1%,#1a4bd6 11.4%,#2162e3 13.6%,#256bdb 15.9%,#256bdb 18.2%,#2975d3 20.5%,#2770d8 22.7%,#2974d4 25.0%,#338bc0 27.3%,#90d16d 29.5%,#2770d7 31.8%,#2975d3 34.1%,#256bdb 36.4%,#2c7ccd 38.6%,#266ed9 40.9%,#1b4cd8 43.2%,#3692ba 45.5%,#2873d5 47.7%,#205fe6 50.0%,#2c7bce 52.3%,#3999b4 54.5%,#8ace71 56.8%,#dfef45 59.1%,#3a9cb1 61.4%,#b0e454 63.6%,#9dd962 65.9%,#2974d4 68.2%,#c1e84e 70.5%,#ceeb4a 72.7%,#276fd8 75.0%,#b7e652 77.3%,#ceeb4a 79.5%,#328ac1 81.8%,#e2f043 84.1%,#f6f649 86.4%,#93d36a 88.6%,#f7f74f 90.9%,#e9f241 93.2%,#1329a7 95.5%,#1533b5 97.7%,#1639be 100.0%)"></i><i style="position:absolute;left:319px;top:0;width:4px;height:100%;box-shadow:inset 1px 0 rgba(0,0,12,.82);background:linear-gradient(#0f1c8b 0.0%,#1328a6 2.3%,#132baa 4.5%,#11229a 6.8%,#0f1c8a 9.1%,#0c1474 11.4%,#0b126d 13.6%,#0b126f 15.9%,#0d1678 18.2%,#1224a0 20.5%,#1a4ad5 22.7%,#1e5be9 25.0%,#1d56e6 27.3%,#2a76d2 29.5%,#1b50dd 31.8%,#142eae 34.1%,#142eae 36.4%,#1226a3 38.6%,#0f1b88 40.9%,#0c1575 43.2%,#1224a0 45.5%,#173abf 47.7%,#1a48d2 50.0%,#1430b1 52.3%,#142faf 54.5%,#1b4cd8 56.8%,#3999b4 59.1%,#1d56e5 61.4%,#2b78d0 63.6%,#2872d5 65.9%,#1636ba 68.2%,#3a9cb1 70.5%,#bee74f 72.7%,#2161e4 75.0%,#3289c2 77.3%,#a2dc5e 79.5%,#1a48d2 81.8%,#3692ba 84.1%,#3896b6 86.4%,#1532b4 88.6%,#41a3aa 90.9%,#54ae9b 93.2%,#1227a4 95.5%,#1225a1 97.7%,#11239d 100.0%)"></i><i style="position:absolute;left:323px;top:0;width:4px;height:100%;box-shadow:inset 1px 0 rgba(0,0,12,.82);background:linear-gradient(#1328a6 0.0%,#1840c8 2.3%,#1840c8 4.5%,#142dad 6.8%,#101f93 9.1%,#0d177c 11.4%,#101e90 13.6%,#0e1a85 15.9%,#1328a6 18.2%,#1b4fdb 20.5%,#3187c3 22.7%,#3a9bb2 25.0%,#3086c5 27.3%,#2d7ecc 29.5%,#3897b6 31.8%,#2872d5 34.1%,#1a4bd7 36.4%,#1843cb 38.6%,#173cc1 40.9%,#1637ba 43.2%,#1946d0 45.5%,#1e5be9 47.7%,#1d56e6 50.0%,#1944cd 52.3%,#1d58e8 54.5%,#348dbe 56.8%,#84cb76 59.1%,#2b79d0 61.4%,#2f83c7 63.6%,#86cb74 65.9%,#205fe5 68.2%,#5fb593 70.5%,#f5f545 72.7%,#75c182 75.0%,#80c879 77.3%,#f0f33f 79.5%,#266dd9 81.8%,#80c879 84.1%,#a0db60 86.4%,#1d57e7 88.6%,#b5e552 90.9%,#deef45 93.2%,#1430b1 95.5%,#101f92 97.7%,#0f1d8d 100.0%)"></i><i style="position:absolute;left:327px;top:0;width:3px;height:100%;box-shadow:inset 1px 0 rgba(0,0,12,.82);background:linear-gradient(#163abe 0.0%,#1a4ad5 2.3%,#1c54e4 4.5%,#173ec4 6.8%,#142dac 9.1%,#1329a8 11.4%,#173ec4 13.6%,#1533b4 15.9%,#1b4dd9 18.2%,#2c7ccd 20.5%,#58b198 22.7%,#65b88e 25.0%,#3795b8 27.3%,#2f82c8 29.5%,#53ad9c 31.8%,#3b9faf 34.1%,#2161e4 36.4%,#1f5ee7 38.6%,#205ee6 40.9%,#1c54e3 43.2%,#2161e4 45.5%,#2873d5 47.7%,#256bdb 50.0%,#1d57e7 52.3%,#2c7ccd 54.5%,#64b88e 56.8%,#bae651 59.1%,#3fa1ac 61.4%,#338bc0 63.6%,#d3ec49 65.9%,#3084c6 68.2%,#86cb75 70.5%,#f8f85c 72.7%,#c1e84f 75.0%,#b5e552 77.3%,#f8f85c 79.5%,#3999b4 81.8%,#c5e94d 84.1%,#e2f044 86.4%,#2f82c8 88.6%,#deef45 90.9%,#f7f753 93.2%,#1535b8 95.5%,#102197 97.7%,#0f1e8f 100.0%)"></i><i style="position:absolute;left:330px;top:0;width:4px;height:100%;box-shadow:inset 1px 0 rgba(0,0,12,.82);background:linear-gradient(#1639be 0.0%,#1636b9 2.3%,#2468de 4.5%,#1d57e7 6.8%,#1d59e9 9.1%,#2e80ca 11.4%,#256bdb 13.6%,#2468de 15.9%,#3186c4 18.2%,#85cb75 20.5%,#b8e651 22.7%,#88cd72 25.0%,#348dbe 27.3%,#3999b4 29.5%,#2c7bce 31.8%,#3794b8 34.1%,#2f83c7 36.4%,#3897b5 38.6%,#328ac1 40.9%,#1c51df 43.2%,#266ed9 45.5%,#276fd8 47.7%,#399ab4 50.0%,#2a77d2 52.3%,#2c7ccd 54.5%,#55ae9b 56.8%,#ddef45 59.1%,#cbea4b 61.4%,#3898b5 63.6%,#ebf241 65.9%,#3999b4 68.2%,#b4e553 70.5%,#fbfb77 72.7%,#e2f044 75.0%,#a0db60 77.3%,#fcfc7e 79.5%,#93d36a 81.8%,#ebf241 84.1%,#f6f64a 86.4%,#338bc0 88.6%,#d0ec4a 90.9%,#f7f754 93.2%,#142fb0 95.5%,#173bc0 97.7%,#142dad 100.0%)"></i><i style="position:absolute;left:334px;top:0;width:4px;height:100%;box-shadow:inset 1px 0 rgba(0,0,12,.82);background:linear-gradient(#101f92 0.0%,#11229c 2.3%,#1639be 4.5%,#1843cb 6.8%,#1a4ad5 9.1%,#2366e0 11.4%,#3590bc 13.6%,#338bc0 15.9%,#2468de 18.2%,#3999b4 20.5%,#4fab9f 22.7%,#338cbf 25.0%,#2060e5 27.3%,#266cda 29.5%,#2871d6 31.8%,#266dd9 34.1%,#3694b9 36.4%,#91d26c 38.6%,#b1e454 40.9%,#67b98d 43.2%,#5ab297 45.5%,#cfeb4a 47.7%,#c0e84f 50.0%,#73c183 52.3%,#66b98d 54.5%,#9bd864 56.8%,#f7f74e 59.1%,#f5f53f 61.4%,#cceb4b 63.6%,#f8f859 65.9%,#2f82c8 68.2%,#70bf85 70.5%,#fbfb71 72.7%,#cceb4b 75.0%,#86cc74 77.3%,#f8f85c 79.5%,#b2e453 81.8%,#dcee46 84.1%,#f7f750 86.4%,#2f83c7 88.6%,#f5f53f 90.9%,#f6f647 93.2%,#0e1880 95.5%,#1636ba 97.7%,#1535b8 100.0%)"></i><i style="position:absolute;left:338px;top:0;width:4px;height:100%;box-shadow:inset 1px 0 rgba(0,0,12,.82);background:linear-gradient(#2162e3 0.0%,#2a78d1 2.3%,#2b7acf 4.5%,#338bc0 6.8%,#348fbd 9.1%,#3999b4 11.4%,#8fd16d 13.6%,#cceb4b 15.9%,#65b88e 18.2%,#90d26c 20.5%,#92d36b 22.7%,#7dc67b 25.0%,#76c280 27.3%,#68ba8c 29.5%,#71bf84 31.8%,#92d36b 34.1%,#d9ee46 36.4%,#f4f43e 38.6%,#f0f33f 40.9%,#deef45 43.2%,#f5f545 45.5%,#f7f753 47.7%,#f5f540 50.0%,#ddef45 52.3%,#f0f33f 54.5%,#f7f753 56.8%,#fdfda8 59.1%,#fafa68 61.4%,#f3f43e 63.6%,#fdfd97 65.9%,#b2e453 68.2%,#ecf240 70.5%,#ffffc8 72.7%,#f8f85b 75.0%,#e4f043 77.3%,#ffffc8 79.5%,#d5ed48 81.8%,#f8f85a 84.1%,#fefeb6 86.4%,#b4e553 88.6%,#fafa6b 90.9%,#f8f85d 93.2%,#0d177b 95.5%,#142faf 97.7%,#112199 100.0%)"></i><i style="position:absolute;left:342px;top:0;width:4px;height:100%;box-shadow:inset 1px 0 rgba(0,0,12,.82);background:linear-gradient(#1f5de7 0.0%,#2366df 2.3%,#1d58e9 4.5%,#266ed9 6.8%,#2871d6 9.1%,#1f5ee7 11.4%,#2872d5 13.6%,#3796b7 15.9%,#266dda 18.2%,#2f83c7 20.5%,#3289c2 22.7%,#3289c1 25.0%,#348fbd 27.3%,#2c7bce 29.5%,#3694b9 31.8%,#3794b8 34.1%,#76c281 36.4%,#94d469 38.6%,#8ace71 40.9%,#7fc77a 43.2%,#cceb4b 45.5%,#c1e84f 47.7%,#bae651 50.0%,#9eda61 52.3%,#bae651 54.5%,#eaf241 56.8%,#fbfb76 59.1%,#f6f64d 61.4%,#9bd864 63.6%,#fafa6c 65.9%,#a1db5f 68.2%,#bce750 70.5%,#fefebd 72.7%,#f0f43f 75.0%,#aee355 77.3%,#fdfda4 79.5%,#54ae9c 81.8%,#e7f142 84.1%,#f8f85e 86.4%,#3796b7 88.6%,#f5f541 90.9%,#f7f750 93.2%,#0d177b 95.5%,#132aa8 97.7%,#112198 100.0%)"></i><i style="position:absolute;left:346px;top:0;width:3px;height:100%;box-shadow:inset 1px 0 rgba(0,0,12,.82);background:linear-gradient(#205fe6 0.0%,#1b4fdc 2.3%,#1a4bd6 4.5%,#2469dd 6.8%,#2c7bcd 9.1%,#1f5ee7 11.4%,#1a48d3 13.6%,#1531b3 15.9%,#1a48d2 18.2%,#2264e2 20.5%,#2f81c8 22.7%,#2d7ecb 25.0%,#1f5de7 27.3%,#1946d0 29.5%,#3289c2 31.8%,#1d55e5 34.1%,#1e5ce9 36.4%,#2c7ccd 38.6%,#338dbf 40.9%,#3289c2 43.2%,#69bb8b 45.5%,#47a7a5 47.7%,#a8df5a 50.0%,#61b691 52.3%,#5eb493 54.5%,#b7e552 56.8%,#fafa6f 59.1%,#f7f752 61.4%,#5eb493 63.6%,#fafa69 65.9%,#b2e453 68.2%,#85cb75 70.5%,#fcfc7b 72.7%,#c1e84e 75.0%,#83ca77 77.3%,#f8f85d 79.5%,#3795b7 81.8%,#c3e84e 84.1%,#cdeb4b 86.4%,#1b4fdc 88.6%,#d2ec49 90.9%,#fbfb70 93.2%,#0d187d 95.5%,#1226a3 97.7%,#1636b9 100.0%)"></i><i style="position:absolute;left:349px;top:0;width:4px;height:100%;box-shadow:inset 1px 0 rgba(0,0,12,.82);background:linear-gradient(#2770d7 0.0%,#2161e4 2.3%,#1d58e8 4.5%,#1b4eda 6.8%,#173cc1 9.1%,#101f94 11.4%,#0e1a84 13.6%,#1535b7 15.9%,#101f93 18.2%,#1841c8 20.5%,#1947d0 22.7%,#1b4cd8 25.0%,#205fe6 27.3%,#1a48d2 29.5%,#2263e2 31.8%,#142dad 34.1%,#132cac 36.4%,#1430b1 38.6%,#1a49d4 40.9%,#2f83c7 43.2%,#3085c5 45.5%,#3187c3 47.7%,#2873d5 50.0%,#1c52e0 52.3%,#3084c6 54.5%,#67b98c 56.8%,#85cb75 59.1%,#8ccf6f 61.4%,#51ac9e 63.6%,#d3ec49 65.9%,#338bc0 68.2%,#3187c3 70.5%,#f6f647 72.7%,#5cb395 75.0%,#399ab4 77.3%,#a0db60 79.5%,#1840c8 81.8%,#40a2ab 84.1%,#82c977 86.4%,#1843cb 88.6%,#4faba0 90.9%,#f5f540 93.2%,#11219a 95.5%,#112199 97.7%,#11239f 100.0%)"></i><i style="position:absolute;left:353px;top:0;width:4px;height:100%;box-shadow:inset 1px 0 rgba(0,0,12,.82);background:linear-gradient(#1841c9 0.0%,#1b4cd8 2.3%,#1a48d2 4.5%,#1842ca 6.8%,#1535b7 9.1%,#101f92 11.4%,#0e1983 13.6%,#101f93 15.9%,#101e91 18.2%,#142fb0 20.5%,#173cc1 22.7%,#1947d1 25.0%,#1c53e2 27.3%,#1636b9 29.5%,#1431b2 31.8%,#183fc6 34.1%,#1e5be9 36.4%,#1c51df 38.6%,#1b4fdc 40.9%,#266dda 43.2%,#2b78d0 45.5%,#1b50de 47.7%,#2e81c9 50.0%,#2974d4 52.3%,#2872d6 54.5%,#2e80ca 56.8%,#76c281 59.1%,#81c978 61.4%,#348dbe 63.6%,#c4e94e 65.9%,#2975d3 68.2%,#1d55e4 70.5%,#c4e94d 72.7%,#78c37f 75.0%,#358fbc 77.3%,#81c978 79.5%,#1842ca 81.8%,#348ebd 84.1%,#57af99 86.4%,#142eae 88.6%,#276fd8 90.9%,#ceeb4a 93.2%,#102095 95.5%,#142faf 97.7%,#11239e 100.0%)"></i><i style="position:absolute;left:357px;top:0;width:4px;height:100%;box-shadow:inset 1px 0 rgba(0,0,12,.82);background:linear-gradient(#112198 0.0%,#132aa9 2.3%,#11239f 4.5%,#112199 6.8%,#102096 9.1%,#0f1b88 11.4%,#0c1577 13.6%,#0f1c8a 15.9%,#132cab 18.2%,#173dc3 20.5%,#1b50dd 22.7%,#1c53e2 25.0%,#1a49d3 27.3%,#142dac 29.5%,#11229a 31.8%,#1945ce 34.1%,#3084c6 36.4%,#2c7ccd 38.6%,#2367df 40.9%,#2770d7 43.2%,#2872d6 45.5%,#1c52e0 47.7%,#338bc0 50.0%,#2c7ccd 52.3%,#266ed9 54.5%,#266dda 56.8%,#4aa8a3 59.1%,#5ab296 61.4%,#256cdb 63.6%,#b6e552 65.9%,#2a77d1 68.2%,#1c52e0 70.5%,#b9e651 72.7%,#b7e652 75.0%,#328ac1 77.3%,#69bb8b 79.5%,#1637bb 81.8%,#266dda 84.1%,#3084c6 86.4%,#0f1c89 88.6%,#1d59ea 90.9%,#afe454 93.2%,#11229c 95.5%,#1638bc 97.7%,#132baa 100.0%)"></i><i style="position:absolute;left:361px;top:0;width:4px;height:100%;box-shadow:inset 1px 0 rgba(0,0,12,.82);background:linear-gradient(#0f1b89 0.0%,#0f1c8a 2.3%,#0d177c 4.5%,#0c1474 6.8%,#0e1981 9.1%,#0f1d8c 11.4%,#0c1473 13.6%,#11239f 15.9%,#1b50dd 18.2%,#2365e0 20.5%,#3188c3 22.7%,#2a77d1 25.0%,#1947d0 27.3%,#1535b8 29.5%,#132baa 31.8%,#1943cc 34.1%,#3590bc 36.4%,#3b9eb0 38.6%,#3590bc 40.9%,#3187c3 43.2%,#2974d4 45.5%,#2e7fca 47.7%,#348ebd 50.0%,#266ed9 52.3%,#2b79cf 54.5%,#2f81c8 56.8%,#399ab3 59.1%,#52ad9d 61.4%,#205ee6 63.6%,#c7e94c 65.9%,#51ac9e 68.2%,#2e7fca 70.5%,#e2f044 72.7%,#edf340 75.0%,#3898b5 77.3%,#7dc67b 79.5%,#1531b3 81.8%,#1d56e6 84.1%,#246add 86.4%,#0d1678 88.6%,#276fd8 90.9%,#b0e454 93.2%,#132cab 95.5%,#173abf 97.7%,#1638bc 100.0%)"></i><i style="position:absolute;left:365px;top:0;width:3px;height:100%;box-shadow:inset 1px 0 rgba(0,0,12,.82);background:linear-gradient(#163abe 0.0%,#1532b4 2.3%,#1a4cd7 4.5%,#173cc2 6.8%,#142dad 9.1%,#142eae 11.4%,#1a4bd6 13.6%,#1d57e8 15.9%,#1c53e1 18.2%,#3591bb 20.5%,#52ad9d 22.7%,#46a6a6 25.0%,#3794b8 27.3%,#276fd8 29.5%,#399ab3 31.8%,#85cb75 34.1%,#f3f43e 36.4%,#f7f750 38.6%,#f6f64d 40.9%,#f6f648 43.2%,#f8f857 45.5%,#f9f960 47.7%,#eff33f 50.0%,#f3f43e 52.3%,#f0f33f 54.5%,#eff33f 56.8%,#fcfc79 59.1%,#f9f965 61.4%,#c2e84e 63.6%,#ffffc8 65.9%,#fcfc7d 68.2%,#ebf241 70.5%,#ffffc8 72.7%,#fdfd9d 75.0%,#edf340 77.3%,#ffffc8 79.5%,#9fda61 81.8%,#e1f044 84.1%,#fcfc7d 86.4%,#3b9db0 88.6%,#f1f43f 90.9%,#ffffc8 93.2%,#1225a2 95.5%,#132cab 97.7%,#0f1c8b 100.0%)"></i><i style="position:absolute;left:368px;top:0;width:4px;height:100%;box-shadow:inset 1px 0 rgba(0,0,12,.82);background:linear-gradient(#1c53e1 0.0%,#163abf 2.3%,#1945cd 4.5%,#1843cb 6.8%,#173cc1 9.1%,#1533b5 11.4%,#1946cf 13.6%,#1e5aea 15.9%,#1c54e3 18.2%,#2d7fcb 20.5%,#51ac9e 22.7%,#57b099 25.0%,#399ab3 27.3%,#9cd863 29.5%,#6abb8a 31.8%,#f5f546 34.1%,#fafa68 36.4%,#fafa6d 38.6%,#f9f962 40.9%,#f7f756 43.2%,#fafa69 45.5%,#fbfb76 47.7%,#f9f962 50.0%,#fafa6c 52.3%,#f9f961 54.5%,#f8f857 56.8%,#fefec7 59.1%,#fefebb 61.4%,#f5f541 63.6%,#ffffc8 65.9%,#ffffc8 68.2%,#f0f33f 70.5%,#ffffc8 72.7%,#fefebc 75.0%,#eff33f 77.3%,#ffffc8 79.5%,#f8f859 81.8%,#f5f544 84.1%,#ffffc8 86.4%,#e5f143 88.6%,#f7f754 90.9%,#ffffc8 93.2%,#0e1880 95.5%,#0f1c8a 97.7%,#101e90 100.0%)"></i><i style="position:absolute;left:372px;top:0;width:4px;height:100%;box-shadow:inset 1px 0 rgba(0,0,12,.82);background:linear-gradient(#0b1169 0.0%,#0b1169 2.3%,#080a57 4.5%,#090d5f 6.8%,#0b1069 9.1%,#0a0e61 11.4%,#090b59 13.6%,#0c1472 15.9%,#0d177d 18.2%,#1226a3 20.5%,#163abe 22.7%,#173abf 25.0%,#1534b6 27.3%,#1d57e7 29.5%,#266cda 31.8%,#9cd963 34.1%,#d0ec4a 36.4%,#cfeb4a 38.6%,#bde750 40.9%,#b1e454 43.2%,#c4e94e 45.5%,#c4e94e 47.7%,#b8e651 50.0%,#c3e84e 52.3%,#b7e652 54.5%,#afe454 56.8%,#f7f753 59.1%,#f6f646 61.4%,#50ac9e 63.6%,#fafa6c 65.9%,#fbfb70 68.2%,#5fb593 70.5%,#fcfc84 72.7%,#f5f53e 75.0%,#52ad9d 77.3%,#fcfc85 79.5%,#d6ed47 81.8%,#61b691 84.1%,#fcfc7d 86.4%,#9cd963 88.6%,#ade256 90.9%,#fafa68 93.2%,#0d187f 95.5%,#101f93 97.7%,#0f1e8f 100.0%)"></i><i style="position:absolute;left:376px;top:0;width:4px;height:100%;box-shadow:inset 1px 0 rgba(0,0,12,.82);background:linear-gradient(#080850 0.0%,#0e1a84 2.3%,#080850 4.5%,#0a0e62 6.8%,#0e1a84 9.1%,#0f1c8a 11.4%,#090d5f 13.6%,#0b116a 15.9%,#0f1c8b 18.2%,#132cab 20.5%,#132cab 22.7%,#1227a5 25.0%,#1228a5 27.3%,#1430b0 29.5%,#3085c5 31.8%,#85cb75 34.1%,#c0e84f 36.4%,#bde750 38.6%,#b1e454 40.9%,#b3e553 43.2%,#b5e552 45.5%,#9dd962 47.7%,#b3e553 50.0%,#b5e552 52.3%,#b8e651 54.5%,#bde750 56.8%,#f7f751 59.1%,#f6f649 61.4%,#3289c2 63.6%,#fafa69 65.9%,#fbfb71 68.2%,#55ae9b 70.5%,#fafa6c 72.7%,#b5e552 75.0%,#57b099 77.3%,#fcfc8c 79.5%,#f1f43f 81.8%,#48a7a4 84.1%,#fcfc79 86.4%,#b9e651 88.6%,#a7df5b 90.9%,#f6f64a 93.2%,#0f1d8e 95.5%,#132cab 97.7%,#0f1d8d 100.0%)"></i><i style="position:absolute;left:380px;top:0;width:4px;height:100%;box-shadow:inset 1px 0 rgba(0,0,12,.82);background:linear-gradient(#1b4dd9 0.0%,#2e80ca 2.3%,#1840c7 4.5%,#1a4ad5 6.8%,#2873d5 9.1%,#399bb3 11.4%,#3b9db0 13.6%,#1f5ee7 15.9%,#2d7dcc 18.2%,#256bdc 20.5%,#2e7fca 22.7%,#348ebd 25.0%,#3693b9 27.3%,#92d26b 29.5%,#95d469 31.8%,#f7f750 34.1%,#f7f754 36.4%,#f8f85b 38.6%,#f9f966 40.9%,#fbfb73 43.2%,#fcfc84 45.5%,#fdfd93 47.7%,#fbfb74 50.0%,#fbfb71 52.3%,#fcfc7d 54.5%,#fcfc80 56.8%,#fefeb7 59.1%,#ffffc8 61.4%,#e2f044 63.6%,#ffffc8 65.9%,#ffffc8 68.2%,#c5e94d 70.5%,#fefec7 72.7%,#f4f43e 75.0%,#f6f649 77.3%,#ffffc8 79.5%,#ffffc8 81.8%,#f8f85b 84.1%,#ffffc8 86.4%,#f8f859 88.6%,#f6f649 90.9%,#ffffc8 93.2%,#1224a0 95.5%,#1225a1 97.7%,#101f91 100.0%)"></i><i style="position:absolute;left:384px;top:0;width:3px;height:100%;box-shadow:inset 1px 0 rgba(0,0,12,.82);background:linear-gradient(#101f91 0.0%,#112199 2.3%,#11239f 4.5%,#1532b4 6.8%,#1840c7 9.1%,#1c52e0 11.4%,#3085c5 13.6%,#1a4bd6 15.9%,#1946cf 18.2%,#1534b6 20.5%,#1b4eda 22.7%,#2263e2 25.0%,#1e5bea 27.3%,#256adc 29.5%,#3898b5 31.8%,#7bc57d 34.1%,#e7f142 36.4%,#f6f648 38.6%,#f6f64a 40.9%,#f7f752 43.2%,#f7f755 45.5%,#edf340 47.7%,#fbfb70 50.0%,#f9f966 52.3%,#f9f963 54.5%,#f9f960 56.8%,#f9f965 59.1%,#ffffc8 61.4%,#ebf240 63.6%,#fcfc7d 65.9%,#fbfb75 68.2%,#9dd962 70.5%,#fdfd9a 72.7%,#a2dc5f 75.0%,#6cbc89 77.3%,#fefeb6 79.5%,#ffffc8 81.8%,#d5ed48 84.1%,#ffffc8 86.4%,#f7f752 88.6%,#c3e94e 90.9%,#fefebc 93.2%,#142eae 95.5%,#102197 97.7%,#11229b 100.0%)"></i><i style="position:absolute;left:387px;top:0;width:4px;height:100%;box-shadow:inset 1px 0 rgba(0,0,12,.82);background:linear-gradient(#0c1474 0.0%,#0d177d 2.3%,#1329a7 4.5%,#1638bb 6.8%,#1533b5 9.1%,#1532b4 11.4%,#2263e2 13.6%,#1842ca 15.9%,#1b4dd9 18.2%,#1637bb 20.5%,#1947d1 22.7%,#1c55e4 25.0%,#1c55e4 27.3%,#2973d4 29.5%,#2d7ecb 31.8%,#59b197 34.1%,#c9ea4c 36.4%,#d4ed48 38.6%,#d9ee47 40.9%,#f5f543 43.2%,#f5f543 45.5%,#d4ed48 47.7%,#fafa69 50.0%,#f8f858 52.3%,#f8f859 54.5%,#f8f85f 56.8%,#fafa67 59.1%,#ffffc8 61.4%,#e5f143 63.6%,#fafa67 65.9%,#fdfd9a 68.2%,#b1e454 70.5%,#fefead 72.7%,#ceeb4a 75.0%,#80c879 77.3%,#fcfc83 79.5%,#fcfc89 81.8%,#b7e652 84.1%,#fefec3 86.4%,#f8f85d 88.6%,#b4e553 90.9%,#fcfc85 93.2%,#1431b2 95.5%,#101e91 97.7%,#101f94 100.0%)"></i><i style="position:absolute;left:391px;top:0;width:4px;height:100%;box-shadow:inset 1px 0 rgba(0,0,12,.82);background:linear-gradient(#080850 0.0%,#0b1169 2.3%,#1329a7 4.5%,#163abe 6.8%,#132aa8 9.1%,#0f1d8e 11.4%,#1637bb 13.6%,#1226a3 15.9%,#1a4ad5 18.2%,#173bc0 20.5%,#1840c7 22.7%,#1a49d4 25.0%,#1d55e4 27.3%,#3085c5 29.5%,#2161e4 31.8%,#3898b5 34.1%,#59b197 36.4%,#4ba8a3 38.6%,#70bf85 40.9%,#cfeb4a 43.2%,#d0ec49 45.5%,#c2e84e 47.7%,#f8f85a 50.0%,#f5f545 52.3%,#f6f64a 54.5%,#f7f754 56.8%,#f9f964 59.1%,#fbfb74 61.4%,#bee74f 63.6%,#f7f754 65.9%,#ffffc8 68.2%,#c4e94d 70.5%,#fdfd93 72.7%,#f9f965 75.0%,#a7df5a 77.3%,#fafa6a 79.5%,#ddef45 81.8%,#7bc57d 84.1%,#fdfda6 86.4%,#f9f962 88.6%,#9dd962 90.9%,#f9f966 93.2%,#142dad 95.5%,#101f91 97.7%,#0f1c8b 100.0%)"></i><i style="position:absolute;left:395px;top:0;width:4px;height:100%;box-shadow:inset 1px 0 rgba(0,0,12,.82);background:linear-gradient(#0e1981 0.0%,#1531b3 2.3%,#1535b8 4.5%,#1945ce 6.8%,#1c53e2 9.1%,#1f5ce8 11.4%,#1a4bd6 13.6%,#132bab 15.9%,#1840c7 18.2%,#1a4bd6 20.5%,#1d56e6 22.7%,#2975d3 25.0%,#3b9faf 27.3%,#3289c2 29.5%,#3692ba 31.8%,#3ea1ad 34.1%,#348ebe 36.4%,#4fab9f 38.6%,#aae158 40.9%,#d7ed47 43.2%,#e2f043 45.5%,#f1f43f 47.7%,#fcfc8d 50.0%,#fbfb70 52.3%,#fafa6f 54.5%,#fafa69 56.8%,#fbfb72 59.1%,#fcfc89 61.4%,#b8e651 63.6%,#fbfb73 65.9%,#ffffc8 68.2%,#edf340 70.5%,#fdfd9e 72.7%,#ffffc8 75.0%,#aae158 77.3%,#fefec5 79.5%,#a7df5a 81.8%,#b6e552 84.1%,#ffffc8 86.4%,#fdfd93 88.6%,#eaf241 90.9%,#ffffc8 93.2%,#0f1c8a 95.5%,#132cab 97.7%,#11229a 100.0%)"></i><i style="position:absolute;left:399px;top:0;width:4px;height:100%;box-shadow:inset 1px 0 rgba(0,0,12,.82);background:linear-gradient(#0e1a84 0.0%,#0e1982 2.3%,#0f1d8d 4.5%,#11239e 6.8%,#132cac 9.1%,#1533b6 11.4%,#142eae 13.6%,#102096 15.9%,#142eae 18.2%,#183fc5 20.5%,#1636ba 22.7%,#1638bc 25.0%,#1a49d4 27.3%,#1532b3 29.5%,#1638bc 31.8%,#1532b4 34.1%,#1227a4 36.4%,#1531b3 38.6%,#173ec4 40.9%,#1842ca 43.2%,#1b4eda 45.5%,#1b4dd9 47.7%,#348ebd 50.0%,#1f5ee7 52.3%,#1c51df 54.5%,#2264e2 56.8%,#3289c2 59.1%,#3a9cb2 61.4%,#1c54e3 63.6%,#2b79cf 65.9%,#3b9eb0 68.2%,#2b79cf 70.5%,#65b88e 72.7%,#4aa8a3 75.0%,#1841c9 77.3%,#2366df 79.5%,#1534b6 81.8%,#1b4dd9 84.1%,#66b98d 86.4%,#58b098 88.6%,#2060e5 90.9%,#348ebe 93.2%,#1329a7 95.5%,#102094 97.7%,#102096 100.0%)"></i><i style="position:absolute;left:403px;top:0;width:3px;height:100%;box-shadow:inset 1px 0 rgba(0,0,12,.82);background:linear-gradient(#1b50de 0.0%,#1638bc 2.3%,#1638bc 4.5%,#1637ba 6.8%,#173cc2 9.1%,#1c51df 11.4%,#2c7bce 13.6%,#3187c4 15.9%,#348dbe 18.2%,#3a9db1 20.5%,#3a9cb2 22.7%,#46a5a7 25.0%,#6dbd88 27.3%,#7cc57c 29.5%,#9fda61 31.8%,#b3e553 34.1%,#9dd962 36.4%,#a1dc5f 38.6%,#c9ea4c 40.9%,#f5f545 43.2%,#f7f74f 45.5%,#f5f542 47.7%,#f7f753 50.0%,#d0ec4a 52.3%,#c0e84f 54.5%,#c5e94d 56.8%,#f3f43e 59.1%,#f9f964 61.4%,#71bf84 63.6%,#f5f542 65.9%,#fafa69 68.2%,#56af9a 70.5%,#f4f43e 72.7%,#dcef46 75.0%,#2f83c7 77.3%,#e6f142 79.5%,#42a3a9 81.8%,#3084c6 84.1%,#f7f752 86.4%,#f6f649 88.6%,#6fbe86 90.9%,#f9f962 93.2%,#1534b6 95.5%,#11239e 97.7%,#11239f 100.0%)"></i><i style="position:absolute;left:406px;top:0;width:4px;height:100%;box-shadow:inset 1px 0 rgba(0,0,12,.82);background:linear-gradient(#2060e5 0.0%,#173ec5 2.3%,#1638bc 4.5%,#132aa8 6.8%,#132bab 9.1%,#1a49d4 11.4%,#328ac1 13.6%,#45a5a7 15.9%,#42a3a9 18.2%,#3a9bb2 20.5%,#3fa2ab 22.7%,#58b098 25.0%,#69ba8b 27.3%,#a4de5c 29.5%,#b7e652 31.8%,#c6e94d 34.1%,#bae651 36.4%,#b0e454 38.6%,#d2ec49 40.9%,#f7f754 43.2%,#f8f858 45.5%,#f6f64a 47.7%,#f6f646 50.0%,#b5e552 52.3%,#b4e553 54.5%,#bce750 56.8%,#d7ed47 59.1%,#f7f754 61.4%,#6fbe86 63.6%,#f7f74f 65.9%,#f9f966 68.2%,#3289c2 70.5%,#cdeb4a 72.7%,#9bd864 75.0%,#2f83c7 77.3%,#d9ee47 79.5%,#53ae9c 81.8%,#2162e3 84.1%,#e9f241 86.4%,#eff33f 88.6%,#76c281 90.9%,#fafa69 93.2%,#173bc0 95.5%,#1329a7 97.7%,#1226a2 100.0%)"></i><i style="position:absolute;left:410px;top:0;width:4px;height:100%;box-shadow:inset 1px 0 rgba(0,0,12,.82);background:linear-gradient(#101e91 0.0%,#0f1d8c 2.3%,#0f1e8e 4.5%,#0d177a 6.8%,#0e1a83 9.1%,#1431b2 11.4%,#1947d1 13.6%,#1946d0 15.9%,#2d7dcc 18.2%,#2161e4 20.5%,#2469dd 22.7%,#3084c6 25.0%,#3794b8 27.3%,#42a3aa 29.5%,#54ae9c 31.8%,#399ab3 34.1%,#79c47e 36.4%,#b5e552 38.6%,#c5e94d 40.9%,#bae651 43.2%,#c0e84f 45.5%,#cdeb4a 47.7%,#cdeb4b 50.0%,#61b691 52.3%,#7fc77a 54.5%,#a4dd5d 56.8%,#b9e651 59.1%,#cfeb4a 61.4%,#3795b8 63.6%,#d3ec49 65.9%,#f1f43f 68.2%,#1d59ea 70.5%,#ade256 72.7%,#a4dd5d 75.0%,#1d57e8 77.3%,#5ab197 79.5%,#2872d5 81.8%,#1843cb 84.1%,#b4e553 86.4%,#9bd864 88.6%,#2c7bce 90.9%,#f6f649 93.2%,#1840c7 95.5%,#11219a 97.7%,#0f1c89 100.0%)"></i><i style="position:absolute;left:414px;top:0;width:4px;height:100%;box-shadow:inset 1px 0 rgba(0,0,12,.82);background:linear-gradient(#1d59e9 0.0%,#2263e2 2.3%,#1d56e5 4.5%,#1945cf 6.8%,#1a4bd7 9.1%,#2975d3 11.4%,#42a3a9 13.6%,#70be85 15.9%,#7ec77b 18.2%,#3a9bb2 20.5%,#65b88e 22.7%,#abe158 25.0%,#c8ea4c 27.3%,#f8f85a 29.5%,#f6f64a 31.8%,#e4f043 34.1%,#f6f64d 36.4%,#f8f85c 38.6%,#f9f965 40.9%,#fafa6e 43.2%,#fcfc87 45.5%,#fdfd9d 47.7%,#fafa6c 50.0%,#f9f95f 52.3%,#f6f64a 54.5%,#e4f043 56.8%,#f7f751 59.1%,#f9f966 61.4%,#4ba9a2 63.6%,#fafa6e 65.9%,#fbfb74 68.2%,#89cd72 70.5%,#f7f74f 72.7%,#f8f857 75.0%,#48a7a5 77.3%,#f9f964 79.5%,#fbfb71 81.8%,#a6df5b 84.1%,#f9f962 86.4%,#e7f142 88.6%,#5cb395 90.9%,#fbfb76 93.2%,#1225a2 95.5%,#1533b5 97.7%,#101f92 100.0%)"></i><i style="position:absolute;left:418px;top:0;width:4px;height:100%;box-shadow:inset 1px 0 rgba(0,0,12,.82);background:linear-gradient(#0b116a 0.0%,#0c1371 2.3%,#0d187e 4.5%,#0a0e63 6.8%,#0b1169 9.1%,#11239d 11.4%,#1535b8 13.6%,#1227a4 15.9%,#1b4fdc 18.2%,#173bc0 20.5%,#1a4ad6 22.7%,#266ed9 25.0%,#3796b7 27.3%,#8ccf6f 29.5%,#7dc67b 31.8%,#95d568 34.1%,#96d567 36.4%,#c4e94d 38.6%,#d8ee47 40.9%,#ceeb4a 43.2%,#e5f142 45.5%,#e1f044 47.7%,#c5e94d 50.0%,#b9e651 52.3%,#99d766 54.5%,#50ac9e 56.8%,#8ccf70 59.1%,#51ac9e 61.4%,#1227a4 63.6%,#bde750 65.9%,#7cc67c 68.2%,#1c52e0 70.5%,#8bcf70 72.7%,#c4e94d 75.0%,#1c51df 77.3%,#93d36a 79.5%,#f2f43e 81.8%,#3084c6 84.1%,#caea4b 86.4%,#43a4a9 88.6%,#1d55e5 90.9%,#c8ea4c 93.2%,#132aa8 95.5%,#142faf 97.7%,#11239f 100.0%)"></i><i style="position:absolute;left:422px;top:0;width:3px;height:100%;box-shadow:inset 1px 0 rgba(0,0,12,.82);background:linear-gradient(#173cc1 0.0%,#1943cc 2.3%,#1f5de8 4.5%,#1946d0 6.8%,#1944cd 9.1%,#2367df 11.4%,#266ed9 13.6%,#1a4ad5 15.9%,#3085c5 18.2%,#205fe6 20.5%,#2367df 22.7%,#348ebe 25.0%,#66b98d 27.3%,#67b98d 29.5%,#6fbe86 31.8%,#92d36b 34.1%,#6bbc89 36.4%,#9eda61 38.6%,#b5e553 40.9%,#92d26b 43.2%,#a7df5a 45.5%,#6dbc88 47.7%,#5fb493 50.0%,#71bf85 52.3%,#6fbe86 54.5%,#47a7a5 56.8%,#5eb493 59.1%,#3896b6 61.4%,#142eaf 63.6%,#aee355 65.9%,#71bf85 68.2%,#256bdb 70.5%,#b9e651 72.7%,#ebf241 75.0%,#338bc0 77.3%,#b5e552 79.5%,#f5f544 81.8%,#5cb295 84.1%,#f5f540 86.4%,#b1e454 88.6%,#3084c6 90.9%,#f1f43f 93.2%,#1329a7 95.5%,#11239e 97.7%,#1225a1 100.0%)"></i><i style="position:absolute;left:425px;top:0;width:4px;height:100%;box-shadow:inset 1px 0 rgba(0,0,12,.82);background:linear-gradient(#1a4ad4 0.0%,#246add 2.3%,#3898b5 4.5%,#338cbf 6.8%,#2b7acf 9.1%,#2d7ecb 11.4%,#2e80ca 13.6%,#3796b7 15.9%,#3795b7 18.2%,#2365e0 20.5%,#256bdc 22.7%,#3a9db1 25.0%,#8ed06e 27.3%,#3b9db0 29.5%,#86cc74 31.8%,#69ba8b 34.1%,#b2e453 36.4%,#c2e84e 38.6%,#cfeb4a 40.9%,#e5f143 43.2%,#eff33f 45.5%,#6bbb8a 47.7%,#58b098 50.0%,#abe157 52.3%,#b7e652 54.5%,#a7df5a 56.8%,#a5de5c 59.1%,#f5f541 61.4%,#266ed9 63.6%,#d0ec49 65.9%,#c4e94d 68.2%,#348dbe 70.5%,#dfef44 72.7%,#f3f43e 75.0%,#7dc67b 77.3%,#f3f43e 79.5%,#f6f647 81.8%,#70bf85 84.1%,#f8f857 86.4%,#f5f541 88.6%,#3086c5 90.9%,#fafa6c 93.2%,#0f1d8c 95.5%,#0d177d 97.7%,#0f1d8e 100.0%)"></i><i style="position:absolute;left:429px;top:0;width:4px;height:100%;box-shadow:inset 1px 0 rgba(0,0,12,.82);background:linear-gradient(#102096 0.0%,#1533b5 2.3%,#2163e3 4.5%,#3084c6 6.8%,#2f83c7 9.1%,#2b7acf 11.4%,#266cda 13.6%,#1c55e4 15.9%,#2871d6 18.2%,#1535b7 20.5%,#102094 22.7%,#1224a1 25.0%,#173dc2 27.3%,#1a4cd8 29.5%,#2365e0 31.8%,#338bc0 34.1%,#2d7dcc 36.4%,#2366e0 38.6%,#256cdb 40.9%,#3794b8 43.2%,#74c183 45.5%,#256cdb 47.7%,#1a4bd6 50.0%,#2367df 52.3%,#3590bc 54.5%,#5fb493 56.8%,#3796b7 59.1%,#b2e454 61.4%,#1946cf 63.6%,#2263e2 65.9%,#3ca0ae 68.2%,#173ec4 70.5%,#47a7a5 72.7%,#3897b6 75.0%,#1945cf 77.3%,#96d568 79.5%,#3794b8 81.8%,#1639be 84.1%,#6ebd87 86.4%,#a1dc5f 88.6%,#1a4ad5 90.9%,#c8ea4c 93.2%,#112198 95.5%,#0d177d 97.7%,#11229b 100.0%)"></i><i style="position:absolute;left:433px;top:0;width:4px;height:100%;box-shadow:inset 1px 0 rgba(0,0,12,.82);background:linear-gradient(#1c55e4 0.0%,#2f82c7 2.3%,#50ac9e 4.5%,#64b78f 6.8%,#7cc57c 9.1%,#a8e059 11.4%,#56af9a 13.6%,#5fb593 15.9%,#5eb493 18.2%,#2264e2 20.5%,#1944cc 22.7%,#1b50dd 25.0%,#2e80ca 27.3%,#50ac9e 29.5%,#3a9cb2 31.8%,#7dc77b 34.1%,#71bf85 36.4%,#88cd73 38.6%,#b1e454 40.9%,#bce750 43.2%,#b5e553 45.5%,#57b099 47.7%,#56af9a 50.0%,#73c183 52.3%,#97d567 54.5%,#c9ea4c 56.8%,#bbe750 59.1%,#f7f754 61.4%,#4aa8a3 63.6%,#6ebd87 65.9%,#deef45 68.2%,#2c7ccd 70.5%,#b2e453 72.7%,#9dd963 75.0%,#1d59ea 77.3%,#f5f540 79.5%,#caea4c 81.8%,#328ac1 84.1%,#ecf240 86.4%,#f8f85b 88.6%,#62b690 90.9%,#f8f857 93.2%,#132aa8 95.5%,#0e1a83 97.7%,#0e1a83 100.0%)"></i><i style="position:absolute;left:437px;top:0;width:4px;height:100%;box-shadow:inset 1px 0 rgba(0,0,12,.82);background:linear-gradient(#2872d5 0.0%,#3da0ae 2.3%,#3795b8 4.5%,#3186c4 6.8%,#3b9faf 9.1%,#abe257 11.4%,#94d469 13.6%,#b2e453 15.9%,#a4de5c 18.2%,#3a9cb2 20.5%,#3187c3 22.7%,#3b9db0 25.0%,#85cb75 27.3%,#c4e94e 29.5%,#a1db5f 31.8%,#dbee46 34.1%,#e1f044 36.4%,#f5f545 38.6%,#f8f859 40.9%,#f8f85d 43.2%,#f7f751 45.5%,#e6f142 47.7%,#f5f541 50.0%,#f5f53f 52.3%,#f5f53f 54.5%,#f7f753 56.8%,#f7f74e 59.1%,#ffffc8 61.4%,#e9f241 63.6%,#eef340 65.9%,#fefeb0 68.2%,#b3e553 70.5%,#f5f53f 72.7%,#fbfb72 75.0%,#46a6a6 77.3%,#fafa6e 79.5%,#fbfb72 81.8%,#abe257 84.1%,#fbfb72 86.4%,#ffffc8 88.6%,#d1ec49 90.9%,#fcfc8e 93.2%,#1533b5 95.5%,#0f1b89 97.7%,#0e1a85 100.0%)"></i><i style="position:absolute;left:441px;top:0;width:3px;height:100%;box-shadow:inset 1px 0 rgba(0,0,12,.82);background:linear-gradient(#2b78d0 0.0%,#3897b6 2.3%,#1c52e0 4.5%,#1841c8 6.8%,#1c54e2 9.1%,#3999b4 11.4%,#b3e553 13.6%,#95d568 15.9%,#79c47e 18.2%,#3590bc 20.5%,#3b9db0 22.7%,#51ac9d 25.0%,#399bb3 27.3%,#3da0ad 29.5%,#3795b7 31.8%,#a5de5c 34.1%,#aee355 36.4%,#b4e553 38.6%,#c0e84f 40.9%,#d7ed47 43.2%,#e4f043 45.5%,#a0db60 47.7%,#afe454 50.0%,#89cd72 52.3%,#92d36b 54.5%,#c9ea4c 56.8%,#d1ec49 59.1%,#fbfb77 61.4%,#d4ed48 63.6%,#afe454 65.9%,#fcfc87 68.2%,#bce750 70.5%,#b0e454 72.7%,#fcfc8d 75.0%,#7ac57d 77.3%,#d5ed48 79.5%,#f7f753 81.8%,#58b098 84.1%,#f6f64b 86.4%,#fefead 88.6%,#6bbb8a 90.9%,#f1f43f 93.2%,#163abf 95.5%,#0f1d8d 97.7%,#132baa 100.0%)"></i><i style="position:absolute;left:444px;top:0;width:4px;height:100%;box-shadow:inset 1px 0 rgba(0,0,12,.82);background:linear-gradient(#2469dd 0.0%,#246add 2.3%,#2e80c9 4.5%,#2162e3 6.8%,#2263e2 9.1%,#3794b8 11.4%,#63b78f 13.6%,#5eb493 15.9%,#67b98c 18.2%,#3288c2 20.5%,#3591bb 22.7%,#6dbd88 25.0%,#b2e453 27.3%,#aee355 29.5%,#9fda61 31.8%,#bee74f 34.1%,#67b98c 36.4%,#75c182 38.6%,#a9e059 40.9%,#c2e84e 43.2%,#b8e651 45.5%,#8ccf70 47.7%,#ddef45 50.0%,#e0ef44 52.3%,#eff33f 54.5%,#f6f647 56.8%,#dbee46 59.1%,#fefebe 61.4%,#ebf241 63.6%,#e3f043 65.9%,#ffffc8 68.2%,#f8f85b 70.5%,#f5f540 72.7%,#ffffc8 75.0%,#f5f541 77.3%,#d9ee47 79.5%,#fefeb2 81.8%,#c4e94d 84.1%,#f8f858 86.4%,#ffffc8 88.6%,#f2f43e 90.9%,#fafa6e 93.2%,#11229d 95.5%,#0e1880 97.7%,#0f1c8a 100.0%)"></i><i style="position:absolute;left:448px;top:0;width:4px;height:100%;box-shadow:inset 1px 0 rgba(0,0,12,.82);background:linear-gradient(#132aa9 0.0%,#1533b5 2.3%,#1638bc 4.5%,#1225a2 6.8%,#1225a2 9.1%,#1946d0 11.4%,#2974d4 13.6%,#3288c2 15.9%,#2060e5 18.2%,#1b50de 20.5%,#1c55e4 22.7%,#266ed9 25.0%,#338bc0 27.3%,#3187c3 29.5%,#348ebd 31.8%,#3084c6 34.1%,#1f5ee7 36.4%,#2060e5 38.6%,#2e80ca 40.9%,#53ae9c 43.2%,#49a8a4 45.5%,#3897b6 47.7%,#3898b5 50.0%,#72c084 52.3%,#6dbd88 54.5%,#73c083 56.8%,#5fb593 59.1%,#f8f859 61.4%,#77c380 63.6%,#7ac47e 65.9%,#f8f857 68.2%,#62b691 70.5%,#3999b4 72.7%,#f7f753 75.0%,#45a5a7 77.3%,#61b591 79.5%,#f7f755 81.8%,#399ab3 84.1%,#b5e552 86.4%,#fafa6d 88.6%,#3590bc 90.9%,#c6e94d 93.2%,#101f93 95.5%,#101f91 97.7%,#1227a4 100.0%)"></i><i style="position:absolute;left:452px;top:0;width:4px;height:100%;box-shadow:inset 1px 0 rgba(0,0,12,.82);background:linear-gradient(#1b4edb 0.0%,#1c54e3 2.3%,#2263e2 4.5%,#1e5aea 6.8%,#1d59ea 9.1%,#2c7ace 11.4%,#60b592 13.6%,#54ae9b 15.9%,#328ac1 18.2%,#399ab3 20.5%,#3694b9 22.7%,#3898b5 25.0%,#55af9a 27.3%,#4fab9f 29.5%,#7cc67c 31.8%,#51ac9d 34.1%,#48a7a5 36.4%,#3ea1ad 38.6%,#69bb8b 40.9%,#c4e94d 43.2%,#ceeb4a 45.5%,#b2e453 47.7%,#a5de5c 50.0%,#e0ef44 52.3%,#d3ec48 54.5%,#c3e94e 56.8%,#b5e552 59.1%,#fbfb73 61.4%,#c9ea4c 63.6%,#b7e652 65.9%,#fafa6b 68.2%,#53ad9c 70.5%,#6bbc89 72.7%,#f2f43e 75.0%,#48a7a5 77.3%,#b4e553 79.5%,#fdfd9d 81.8%,#bee74f 84.1%,#e0f044 86.4%,#fefeb1 88.6%,#70bf85 90.9%,#eaf241 93.2%,#11229c 95.5%,#11229c 97.7%,#132cab 100.0%)"></i><i style="position:absolute;left:456px;top:0;width:4px;height:100%;box-shadow:inset 1px 0 rgba(0,0,12,.82);background:linear-gradient(#0f1d8c 0.0%,#0e1880 2.3%,#11239f 4.5%,#142dad 6.8%,#132baa 9.1%,#1533b6 11.4%,#1c55e4 13.6%,#11239f 15.9%,#132aa8 18.2%,#1b4dd9 20.5%,#1638bc 22.7%,#132cab 25.0%,#1840c6 27.3%,#1946d0 29.5%,#276fd8 31.8%,#2263e2 34.1%,#3591bb 36.4%,#348fbd 38.6%,#3b9eb0 40.9%,#b4e553 43.2%,#dbee46 45.5%,#9dd962 47.7%,#bee74f 50.0%,#f1f43f 52.3%,#ebf241 54.5%,#d9ee47 56.8%,#b2e453 59.1%,#fafa6a 61.4%,#d0ec49 63.6%,#74c182 65.9%,#f9f962 68.2%,#3796b7 70.5%,#75c281 72.7%,#c4e94d 75.0%,#3796b7 77.3%,#9eda61 79.5%,#ffffc8 81.8%,#daee46 84.1%,#d1ec49 86.4%,#fefebf 88.6%,#9fda61 90.9%,#e3f043 93.2%,#1532b4 95.5%,#1226a3 97.7%,#1226a3 100.0%)"></i><i style="position:absolute;left:460px;top:0;width:3px;height:100%;box-shadow:inset 1px 0 rgba(0,0,12,.82);background:linear-gradient(#1944cc 0.0%,#1c55e4 2.3%,#2770d7 4.5%,#2c7bcd 6.8%,#266cda 9.1%,#256bdc 11.4%,#56af9a 13.6%,#1d58e8 15.9%,#338cbf 18.2%,#3187c4 20.5%,#2872d5 22.7%,#2c7ccd 25.0%,#51ac9e 27.3%,#7dc67b 29.5%,#a6df5b 31.8%,#b7e552 34.1%,#80c879 36.4%,#c1e84e 38.6%,#f5f540 40.9%,#f6f64d 43.2%,#f5f541 45.5%,#f5f540 47.7%,#f9f960 50.0%,#f9f962 52.3%,#f7f754 54.5%,#f7f74e 56.8%,#f1f43f 59.1%,#fbfb72 61.4%,#f9f961 63.6%,#f7f750 65.9%,#ffffc8 68.2%,#f6f649 70.5%,#f5f545 72.7%,#fafa69 75.0%,#c0e84f 77.3%,#f8f859 79.5%,#ffffc8 81.8%,#f8f858 84.1%,#f5f543 86.4%,#ffffc8 88.6%,#f5f545 90.9%,#fafa6c 93.2%,#1534b6 95.5%,#1226a3 97.7%,#1226a3 100.0%)"></i><i style="position:absolute;left:463px;top:0;width:4px;height:100%;box-shadow:inset 1px 0 rgba(0,0,12,.82);background:linear-gradient(#0e1880 0.0%,#101e90 2.3%,#101f92 4.5%,#1842ca 6.8%,#1b4dd9 9.1%,#173dc3 11.4%,#173ec4 13.6%,#173ec5 15.9%,#1638bc 18.2%,#183fc6 20.5%,#173ec4 22.7%,#173ec5 25.0%,#1a48d2 27.3%,#2469dd 29.5%,#3590bc 31.8%,#2974d4 34.1%,#2265e1 36.4%,#2f83c7 38.6%,#57af99 40.9%,#9bd864 43.2%,#b9e651 45.5%,#93d36a 47.7%,#d7ed47 50.0%,#deef45 52.3%,#b5e552 54.5%,#8dd06f 56.8%,#87cc74 59.1%,#f9f964 61.4%,#deef45 63.6%,#75c182 65.9%,#fbfb71 68.2%,#f6f647 70.5%,#98d666 72.7%,#fafa68 75.0%,#ceeb4a 77.3%,#8ed16e 79.5%,#fcfc7c 81.8%,#dcef45 84.1%,#c4e94d 86.4%,#f7f753 88.6%,#3a9cb1 90.9%,#ebf241 93.2%,#101f93 95.5%,#1224a0 97.7%,#11239d 100.0%)"></i><i style="position:absolute;left:467px;top:0;width:4px;height:100%;box-shadow:inset 1px 0 rgba(0,0,12,.82);background:linear-gradient(#0d1679 0.0%,#0f1d8c 2.3%,#11229a 4.5%,#1b4edb 6.8%,#2161e4 9.1%,#1b4dd9 11.4%,#1637bb 13.6%,#1a48d2 15.9%,#1534b7 18.2%,#1a48d2 20.5%,#1c51de 22.7%,#1d55e5 25.0%,#2161e4 27.3%,#3085c6 29.5%,#3a9db1 31.8%,#3794b8 34.1%,#2c7ace 36.4%,#328ac1 38.6%,#59b198 40.9%,#aae158 43.2%,#ceeb4a 45.5%,#c1e84f 47.7%,#c1e84f 50.0%,#c9ea4c 52.3%,#ade356 54.5%,#91d26c 56.8%,#9ad765 59.1%,#fcfc79 61.4%,#f7f750 63.6%,#8bcf70 65.9%,#fbfb75 68.2%,#fbfb72 70.5%,#b4e553 72.7%,#fdfd97 75.0%,#f8f857 77.3%,#b7e652 79.5%,#ffffc8 81.8%,#f6f64b 84.1%,#e6f142 86.4%,#f5f545 88.6%,#338bc0 90.9%,#f1f43f 93.2%,#101e91 95.5%,#132aa8 97.7%,#132bab 100.0%)"></i><i style="position:absolute;left:471px;top:0;width:4px;height:100%;box-shadow:inset 1px 0 rgba(0,0,12,.82);background:linear-gradient(#1227a5 0.0%,#1639bd 2.3%,#1a4ad6 4.5%,#2872d5 6.8%,#338cbf 9.1%,#348ebd 11.4%,#256cdb 13.6%,#2c7ccd 15.9%,#2161e4 18.2%,#348ebd 20.5%,#4aa8a3 22.7%,#65b88e 25.0%,#83ca77 27.3%,#9fdb60 29.5%,#8dcf6f 31.8%,#caea4c 34.1%,#8dd06f 36.4%,#90d16c 38.6%,#c1e84e 40.9%,#eff33f 43.2%,#f6f64c 45.5%,#f9f960 47.7%,#e7f142 50.0%,#f5f53f 52.3%,#f5f53f 54.5%,#f5f545 56.8%,#f3f43e 59.1%,#ffffc8 61.4%,#fefebb 63.6%,#e0ef44 65.9%,#ffffc8 68.2%,#fdfd98 70.5%,#e9f241 72.7%,#ffffc8 75.0%,#fbfb70 77.3%,#f7f752 79.5%,#ffffc8 81.8%,#fdfd9f 84.1%,#f9f966 86.4%,#fdfd93 88.6%,#9bd864 90.9%,#f9f961 93.2%,#11229a 95.5%,#1533b4 97.7%,#1639be 100.0%)"></i><i style="position:absolute;left:475px;top:0;width:4px;height:100%;box-shadow:inset 1px 0 rgba(0,0,12,.82);background:linear-gradient(#1328a6 0.0%,#1a48d2 2.3%,#142faf 4.5%,#1638bd 6.8%,#1d56e6 9.1%,#3188c3 11.4%,#3084c6 13.6%,#276fd8 15.9%,#266dda 18.2%,#45a5a7 20.5%,#78c37f 22.7%,#64b78f 25.0%,#3b9eb0 27.3%,#48a7a5 29.5%,#2a76d2 31.8%,#3a9cb1 34.1%,#3794b8 36.4%,#47a7a5 38.6%,#a4dd5d 40.9%,#e6f142 43.2%,#d0ec4a 45.5%,#f7f755 47.7%,#f6f64a 50.0%,#f8f85a 52.3%,#f8f858 54.5%,#fafa6c 56.8%,#f7f756 59.1%,#fdfdaa 61.4%,#fbfb77 63.6%,#e6f142 65.9%,#ffffc8 68.2%,#d9ee46 70.5%,#b3e553 72.7%,#fefebf 75.0%,#caea4b 77.3%,#bde750 79.5%,#ffffc8 81.8%,#f9f967 84.1%,#f7f750 86.4%,#fdfda3 88.6%,#54ae9b 90.9%,#f8f85a 93.2%,#0d177b 95.5%,#1535b8 97.7%,#1227a4 100.0%)"></i><i style="position:absolute;left:479px;top:0;width:3px;height:100%;box-shadow:inset 1px 0 rgba(0,0,12,.82);background:linear-gradient(#1b4dd9 0.0%,#1b4fdc 2.3%,#1328a6 4.5%,#102097 6.8%,#142eae 9.1%,#1d58e8 11.4%,#3897b6 13.6%,#399ab3 15.9%,#79c47f 18.2%,#9fdb60 20.5%,#aee355 22.7%,#5eb494 25.0%,#276fd8 27.3%,#2263e2 29.5%,#256adc 31.8%,#3794b8 34.1%,#76c281 36.4%,#96d568 38.6%,#a6de5b 40.9%,#bfe84f 43.2%,#f6f64c 45.5%,#f5f540 47.7%,#f8f85e 50.0%,#fcfc79 52.3%,#fafa6d 54.5%,#fcfc86 56.8%,#f9f95f 59.1%,#fefeb2 61.4%,#fbfb70 63.6%,#d7ed47 65.9%,#fcfc7e 68.2%,#a6df5b 70.5%,#e4f043 72.7%,#fafa6d 75.0%,#b2e453 77.3%,#cceb4b 79.5%,#ffffc8 81.8%,#f9f960 84.1%,#f7f750 86.4%,#ffffc8 88.6%,#c8ea4c 90.9%,#fafa69 93.2%,#132aa8 95.5%,#102094 97.7%,#0e1981 100.0%)"></i><i style="position:absolute;left:482px;top:0;width:4px;height:100%;box-shadow:inset 1px 0 rgba(0,0,12,.82);background:linear-gradient(#0f1b88 0.0%,#101f94 2.3%,#0a0f65 4.5%,#090b59 6.8%,#0c1371 9.1%,#132baa 11.4%,#1d56e5 13.6%,#1a4cd7 15.9%,#2f83c7 18.2%,#338cbf 20.5%,#338bc0 22.7%,#2161e4 25.0%,#1636ba 27.3%,#1531b3 29.5%,#1843cb 31.8%,#1d56e6 34.1%,#348ebe 36.4%,#399bb3 38.6%,#3898b5 40.9%,#48a7a5 43.2%,#b3e553 45.5%,#86cc74 47.7%,#e5f143 50.0%,#f3f43e 52.3%,#ecf240 54.5%,#f8f859 56.8%,#f5f541 59.1%,#f9f963 61.4%,#f6f647 63.6%,#58b098 65.9%,#f7f750 68.2%,#49a7a4 70.5%,#90d16d 72.7%,#f8f85a 75.0%,#63b78f 77.3%,#5fb593 79.5%,#fbfb76 81.8%,#e3f043 84.1%,#bde750 86.4%,#fcfc7b 88.6%,#6bbb8a 90.9%,#c3e84e 93.2%,#132cac 95.5%,#101e90 97.7%,#0e1b87 100.0%)"></i><i style="position:absolute;left:486px;top:0;width:4px;height:100%;box-shadow:inset 1px 0 rgba(0,0,12,.82);background:linear-gradient(#0c1370 0.0%,#0f1c8a 2.3%,#0b116b 4.5%,#0b126d 6.8%,#0f1b88 9.1%,#1535b8 11.4%,#1c51df 13.6%,#1535b8 15.9%,#2367df 18.2%,#276fd8 20.5%,#256bdb 22.7%,#1d56e6 25.0%,#1840c7 27.3%,#173cc2 29.5%,#1947d0 31.8%,#1947d1 34.1%,#2265e1 36.4%,#1f5de8 38.6%,#1a48d2 40.9%,#183fc5 43.2%,#1943cb 45.5%,#173ec5 47.7%,#2a77d1 50.0%,#2060e5 52.3%,#2973d4 54.5%,#81c978 56.8%,#82c977 59.1%,#89cd72 61.4%,#57b099 63.6%,#1947d1 65.9%,#51ac9e 68.2%,#2975d3 70.5%,#2770d8 72.7%,#ceeb4a 75.0%,#40a2ab 77.3%,#2468de 79.5%,#a0db60 81.8%,#52ad9d 84.1%,#2c7bce 86.4%,#a3dd5d 88.6%,#1d57e7 90.9%,#1b4eda 93.2%,#11239d 95.5%,#112198 97.7%,#102197 100.0%)"></i><i style="position:absolute;left:490px;top:0;width:4px;height:100%;box-shadow:inset 1px 0 rgba(0,0,12,.82);background:linear-gradient(#1535b8 0.0%,#112198 2.3%,#102094 4.5%,#11229b 6.8%,#1224a1 9.1%,#1532b3 11.4%,#1d59e9 13.6%,#1842ca 15.9%,#1b4dda 18.2%,#2060e5 20.5%,#2872d6 22.7%,#3188c3 25.0%,#3898b5 27.3%,#338cbf 29.5%,#3897b6 31.8%,#6cbc89 34.1%,#5db394 36.4%,#5db394 38.6%,#348ebe 40.9%,#1f5de7 43.2%,#2e81c9 45.5%,#3591bb 47.7%,#3692ba 50.0%,#266ed9 52.3%,#3898b5 54.5%,#bbe750 56.8%,#6dbd88 59.1%,#b1e454 61.4%,#9fda61 63.6%,#2366e0 65.9%,#8ace71 68.2%,#7fc77a 70.5%,#45a5a7 72.7%,#cbeb4b 75.0%,#f5f545 77.3%,#81c978 79.5%,#e2f043 81.8%,#95d469 84.1%,#3289c2 86.4%,#d8ee47 88.6%,#3794b8 90.9%,#2468de 93.2%,#0e1981 95.5%,#1531b2 97.7%,#0f1e8f 100.0%)"></i><i style="position:absolute;left:494px;top:0;width:4px;height:100%;box-shadow:inset 1px 0 rgba(0,0,12,.82);background:linear-gradient(#11229b 0.0%,#0d187f 2.3%,#11229c 4.5%,#0f1c89 6.8%,#0d177b 9.1%,#0f1e8e 11.4%,#1639be 13.6%,#1b4cd8 15.9%,#1945cf 18.2%,#1a4ad5 20.5%,#1945cf 22.7%,#1c55e4 25.0%,#3085c5 27.3%,#3694b9 29.5%,#2e7fca 31.8%,#2e80ca 34.1%,#399ab3 36.4%,#3084c6 38.6%,#1d58e9 40.9%,#1a4ad5 43.2%,#1a49d4 45.5%,#1638bc 47.7%,#2a78d1 50.0%,#266ed9 52.3%,#2365e0 54.5%,#399ab3 56.8%,#3fa1ac 59.1%,#6abb8a 61.4%,#60b592 63.6%,#1639be 65.9%,#6fbe86 68.2%,#83ca77 70.5%,#3898b5 72.7%,#bbe750 75.0%,#c7e94c 77.3%,#3a9bb2 79.5%,#a3dd5d 81.8%,#98d666 84.1%,#2265e1 86.4%,#74c182 88.6%,#2a77d2 90.9%,#1d59e9 93.2%,#1227a4 95.5%,#1225a2 97.7%,#1227a5 100.0%)"></i><i style="position:absolute;left:498px;top:0;width:3px;height:100%;box-shadow:inset 1px 0 rgba(0,0,12,.82);background:linear-gradient(#0d1678 0.0%,#0c1475 2.3%,#0e1b87 4.5%,#0c1372 6.8%,#0c1370 9.1%,#0f1e8e 11.4%,#112199 13.6%,#1534b6 15.9%,#1534b7 18.2%,#142fb0 20.5%,#1638bc 22.7%,#1841c8 25.0%,#1946d0 27.3%,#1c55e4 29.5%,#1c54e3 31.8%,#1d59ea 34.1%,#2367df 36.4%,#205fe6 38.6%,#1946cf 40.9%,#142dad 43.2%,#1531b2 45.5%,#1430b1 47.7%,#1c52e0 50.0%,#1c53e1 52.3%,#1c52df 54.5%,#3289c2 56.8%,#3796b7 59.1%,#55af9b 61.4%,#5bb296 63.6%,#173ec4 65.9%,#44a4a8 68.2%,#4daaa1 70.5%,#2162e4 72.7%,#6cbc89 75.0%,#72c084 77.3%,#1e5be9 79.5%,#5eb494 81.8%,#3da1ad 84.1%,#1a49d4 86.4%,#57af99 88.6%,#2a78d1 90.9%,#1842ca 93.2%,#1228a6 95.5%,#101f92 97.7%,#101f92 100.0%)"></i><i style="position:absolute;left:501px;top:0;width:4px;height:100%;box-shadow:inset 1px 0 rgba(0,0,12,.82);background:linear-gradient(#0b116b 0.0%,#0c1577 2.3%,#0c1474 4.5%,#0a0f65 6.8%,#0c1472 9.1%,#101f93 11.4%,#0f1b88 13.6%,#112198 15.9%,#132aa8 18.2%,#11219a 20.5%,#1637ba 22.7%,#1638bd 25.0%,#102096 27.3%,#11239f 29.5%,#1225a1 31.8%,#142dad 34.1%,#1328a6 36.4%,#142faf 38.6%,#11239e 40.9%,#0b136f 43.2%,#0d1678 45.5%,#0f1e8e 47.7%,#11229a 50.0%,#1328a6 52.3%,#142fb0 54.5%,#1c55e4 56.8%,#2367df 59.1%,#2872d6 61.4%,#2468de 63.6%,#173dc3 65.9%,#1b50de 68.2%,#1b4edb 70.5%,#11239d 72.7%,#1638bb 75.0%,#1a4ad5 77.3%,#11229b 79.5%,#1b4eda 81.8%,#173bc0 84.1%,#112198 86.4%,#1d55e4 88.6%,#1a4ad5 90.9%,#0f1d8d 93.2%,#1226a3 95.5%,#0e1a85 97.7%,#0e1b87 100.0%)"></i><i style="position:absolute;left:505px;top:0;width:4px;height:100%;box-shadow:inset 1px 0 rgba(0,0,12,.82);background:linear-gradient(#0c1370 0.0%,#090d5f 2.3%,#080850 4.5%,#080850 6.8%,#080953 9.1%,#090b58 11.4%,#0e1981 13.6%,#0c1575 15.9%,#0f1d8c 18.2%,#0e1a85 20.5%,#1225a2 22.7%,#132cab 25.0%,#102094 27.3%,#0d1679 29.5%,#080850 31.8%,#080850 34.1%,#080850 36.4%,#0b1069 38.6%,#0d177c 40.9%,#0a1067 43.2%,#090c5c 45.5%,#0c1473 47.7%,#0f1c8a 50.0%,#1637bb 52.3%,#173bc0 54.5%,#1c52e0 56.8%,#1d58e8 59.1%,#1c53e1 61.4%,#1d56e5 63.6%,#1532b4 65.9%,#1c51df 68.2%,#1840c7 70.5%,#0b116a 72.7%,#102095 75.0%,#132cab 77.3%,#11229b 79.5%,#1d58e9 81.8%,#1227a5 84.1%,#0e1b87 86.4%,#1c53e2 88.6%,#1534b7 90.9%,#11229c 93.2%,#132aa8 95.5%,#0e1a84 97.7%,#142ead 100.0%)"></i><i style="position:absolute;left:509px;top:0;width:4px;height:100%;box-shadow:inset 1px 0 rgba(0,0,12,.82);background:linear-gradient(#0c1474 0.0%,#0c1577 2.3%,#0d177b 4.5%,#11229b 6.8%,#11239d 9.1%,#0d167a 11.4%,#0a0e62 13.6%,#0c1474 15.9%,#0f1c89 18.2%,#1328a6 20.5%,#11229b 22.7%,#11229c 25.0%,#1431b2 27.3%,#0e1981 29.5%,#0f1b89 31.8%,#173bc0 34.1%,#1228a5 36.4%,#102096 38.6%,#0f1e8f 40.9%,#101e90 43.2%,#101f94 45.5%,#132aa8 47.7%,#132aa9 50.0%,#11229c 52.3%,#1329a7 54.5%,#1b4cd8 56.8%,#1b4dda 59.1%,#2975d3 61.4%,#1f5ce8 63.6%,#142faf 65.9%,#2162e3 68.2%,#1a48d3 70.5%,#0d177c 72.7%,#1a4ad5 75.0%,#1943cc 77.3%,#0c1474 79.5%,#173abf 81.8%,#1943cc 84.1%,#112198 86.4%,#1947d0 88.6%,#1b4dda 90.9%,#142eae 93.2%,#0e1a83 95.5%,#102096 97.7%,#142eae 100.0%)"></i><i style="position:absolute;left:513px;top:0;width:4px;height:100%;box-shadow:inset 1px 0 rgba(0,0,12,.82);background:linear-gradient(#0f1d8c 0.0%,#1226a3 2.3%,#1d58e8 4.5%,#2a78d1 6.8%,#266ed9 9.1%,#1a4ad5 11.4%,#101f92 13.6%,#142fb0 15.9%,#1946d0 18.2%,#1d58e9 20.5%,#1b4cd8 22.7%,#1d57e7 25.0%,#3188c3 27.3%,#1d58e9 29.5%,#2468de 31.8%,#3ea1ad 34.1%,#59b198 36.4%,#3b9faf 38.6%,#2871d6 40.9%,#1a4bd6 43.2%,#173ec4 45.5%,#1e5be9 47.7%,#1947d1 50.0%,#1a4ad4 52.3%,#1c51df 54.5%,#2e80c9 56.8%,#348ebd 59.1%,#76c280 61.4%,#73c083 63.6%,#1946cf 65.9%,#3694b9 68.2%,#3794b8 70.5%,#1d56e6 72.7%,#4ba8a3 75.0%,#256adc 77.3%,#1841c9 79.5%,#2973d4 81.8%,#1f5de7 84.1%,#1840c7 86.4%,#2872d5 88.6%,#1c51df 90.9%,#2a77d1 93.2%,#0d177b 95.5%,#132cab 97.7%,#11229c 100.0%)"></i><i style="position:absolute;left:517px;top:0;width:3px;height:100%;box-shadow:inset 1px 0 rgba(0,0,12,.82);background:linear-gradient(#0b126e 0.0%,#102096 2.3%,#2366df 4.5%,#2e81c9 6.8%,#2770d7 9.1%,#1b4dd9 11.4%,#0f1c8b 13.6%,#1225a2 15.9%,#1a48d2 18.2%,#1a4bd7 20.5%,#1945ce 22.7%,#1d57e7 25.0%,#338cbf 27.3%,#2770d7 29.5%,#2a77d1 31.8%,#3fa2ac 34.1%,#7fc77a 36.4%,#6cbc89 38.6%,#2e7fca 40.9%,#1946cf 43.2%,#142eae 45.5%,#1a4bd6 47.7%,#1534b6 50.0%,#1841c9 52.3%,#1b4edb 54.5%,#2d7ecb 56.8%,#3289c2 59.1%,#45a5a7 61.4%,#6fbe86 63.6%,#1638bc 65.9%,#2d7dcc 68.2%,#3898b5 70.5%,#256bdc 72.7%,#4eaba0 75.0%,#1d57e7 77.3%,#1a4ad4 79.5%,#2a77d1 81.8%,#1b4dd9 84.1%,#1637bb 86.4%,#2871d6 88.6%,#173abf 90.9%,#266dda 93.2%,#0d177b 95.5%,#1532b3 97.7%,#102096 100.0%)"></i><i style="position:absolute;left:520px;top:0;width:4px;height:100%;box-shadow:inset 1px 0 rgba(0,0,12,.82);background:linear-gradient(#090b59 0.0%,#112198 2.3%,#1a49d3 4.5%,#205fe6 6.8%,#1c54e3 9.1%,#173cc1 11.4%,#1224a0 13.6%,#102095 15.9%,#1c52e0 18.2%,#173cc1 20.5%,#1a4ad5 22.7%,#266ed9 25.0%,#3693b9 27.3%,#64b88f 29.5%,#3898b5 31.8%,#4ca9a1 34.1%,#3898b5 36.4%,#3796b7 38.6%,#3590bc 40.9%,#3188c3 43.2%,#2770d7 45.5%,#2366e0 47.7%,#266ed9 50.0%,#2c7bce 52.3%,#62b690 54.5%,#dfef45 56.8%,#a8df5a 59.1%,#a4dd5d 61.4%,#f6f64b 63.6%,#43a4a8 65.9%,#f6f648 68.2%,#fcfc7d 70.5%,#c4e94d 72.7%,#fcfc78 75.0%,#fafa6e 77.3%,#7dc67b 79.5%,#fbfb70 81.8%,#f8f85a 84.1%,#94d469 86.4%,#fefeb7 88.6%,#f7f756 90.9%,#5bb296 93.2%,#0e1b86 95.5%,#11239e 97.7%,#132baa 100.0%)"></i><i style="position:absolute;left:524px;top:0;width:4px;height:100%;box-shadow:inset 1px 0 rgba(0,0,12,.82);background:linear-gradient(#080850 0.0%,#080a57 2.3%,#11239f 4.5%,#173abf 6.8%,#163abe 9.1%,#1535b7 11.4%,#142dad 13.6%,#1b4cd8 15.9%,#1a4ad5 18.2%,#2871d6 20.5%,#2162e3 22.7%,#1f5de8 25.0%,#2e80c9 27.3%,#48a7a5 29.5%,#2975d3 31.8%,#266ed9 34.1%,#205fe6 36.4%,#2265e1 38.6%,#2c7ccd 40.9%,#3897b6 43.2%,#348fbd 45.5%,#2d7ecc 47.7%,#2f81c8 50.0%,#3692ba 52.3%,#4ba9a2 54.5%,#ace256 56.8%,#5fb493 59.1%,#c3e84e 61.4%,#f6f64a 63.6%,#6bbc89 65.9%,#d0ec4a 68.2%,#fafa6a 70.5%,#99d765 72.7%,#f0f33f 75.0%,#fcfc7d 77.3%,#43a4a9 79.5%,#f9f967 81.8%,#fefeaf 84.1%,#d0ec4a 86.4%,#fbfb74 88.6%,#fafa69 90.9%,#7ac57d 93.2%,#0f1d8e 95.5%,#142eae 97.7%,#11219a 100.0%)"></i><i style="position:absolute;left:528px;top:0;width:4px;height:100%;box-shadow:inset 1px 0 rgba(0,0,12,.82);background:linear-gradient(#080850 0.0%,#080850 2.3%,#0a0f66 4.5%,#0e1a83 6.8%,#101f93 9.1%,#132aa9 11.4%,#1842ca 13.6%,#1b4cd8 15.9%,#1b50dd 18.2%,#1f5de7 20.5%,#1d57e6 22.7%,#1c55e4 25.0%,#2161e4 27.3%,#2c7bce 29.5%,#2975d3 31.8%,#1841c9 34.1%,#1636ba 36.4%,#1841c8 38.6%,#2366e0 40.9%,#3a9cb1 43.2%,#2f82c8 45.5%,#2b79cf 47.7%,#2f82c8 50.0%,#2366e0 52.3%,#2974d4 54.5%,#55af9a 56.8%,#3084c6 59.1%,#70be86 61.4%,#e3f043 63.6%,#399bb3 65.9%,#bae651 68.2%,#fafa6f 70.5%,#b4e553 72.7%,#f5f53e 75.0%,#fdfd9f 77.3%,#9eda62 79.5%,#f5f543 81.8%,#fcfc81 84.1%,#c0e84f 86.4%,#f7f74f 88.6%,#fcfc7b 90.9%,#3da0ad 93.2%,#102095 95.5%,#11229a 97.7%,#11229a 100.0%)"></i><i style="position:absolute;left:532px;top:0;width:4px;height:100%;box-shadow:inset 1px 0 rgba(0,0,12,.82);background:linear-gradient(#080851 0.0%,#080850 2.3%,#080953 4.5%,#0c1371 6.8%,#0e1981 9.1%,#0f1d8d 11.4%,#1226a4 13.6%,#132aa8 15.9%,#173cc1 18.2%,#1840c7 20.5%,#1840c8 22.7%,#173bc0 25.0%,#1534b6 27.3%,#1841c9 29.5%,#1a48d2 31.8%,#132aa9 34.1%,#142eae 36.4%,#1639bd 38.6%,#1d59ea 40.9%,#3590bc 43.2%,#2b78d0 45.5%,#2873d5 47.7%,#2264e2 50.0%,#1b4dd9 52.3%,#1c51de 54.5%,#3187c4 56.8%,#2770d7 59.1%,#3694b9 61.4%,#d3ec49 63.6%,#2974d4 65.9%,#86cc74 68.2%,#f9f964 70.5%,#93d36a 72.7%,#e5f143 75.0%,#fbfb71 77.3%,#7ac57d 79.5%,#caea4c 81.8%,#f8f85b 84.1%,#56af9a 86.4%,#d6ed48 88.6%,#f9f963 90.9%,#2a76d2 93.2%,#0f1d8e 95.5%,#0f1b88 97.7%,#101e90 100.0%)"></i><i style="position:absolute;left:536px;top:0;width:3px;height:100%;box-shadow:inset 1px 0 rgba(0,0,12,.82);background:linear-gradient(#0e1980 0.0%,#0d1679 2.3%,#11229c 4.5%,#1636b9 6.8%,#1535b8 9.1%,#11239e 11.4%,#0d177d 13.6%,#11229c 15.9%,#1843cb 18.2%,#1c53e1 20.5%,#1d57e7 22.7%,#1944cd 25.0%,#132aa8 27.3%,#1639bd 29.5%,#1328a6 31.8%,#1a4cd7 34.1%,#256adc 36.4%,#2873d5 38.6%,#3591bb 40.9%,#79c47e 43.2%,#92d36b 45.5%,#74c182 47.7%,#2469dd 50.0%,#3186c4 52.3%,#2b79d0 54.5%,#3b9eaf 56.8%,#55ae9b 59.1%,#8ace71 61.4%,#f9f95f 63.6%,#3999b4 65.9%,#afe454 68.2%,#fdfd93 70.5%,#c3e94e 72.7%,#f5f542 75.0%,#fafa6b 77.3%,#5ab197 79.5%,#ebf241 81.8%,#fbfb77 84.1%,#59b198 86.4%,#dbee46 88.6%,#fbfb73 90.9%,#3187c3 93.2%,#0c1576 95.5%,#0d1679 97.7%,#0c1576 100.0%)"></i><i style="position:absolute;left:539px;top:0;width:4px;height:100%;box-shadow:inset 1px 0 rgba(0,0,12,.82);background:linear-gradient(#11229c 0.0%,#1840c7 2.3%,#205fe6 4.5%,#2974d4 6.8%,#2162e3 9.1%,#1843cb 11.4%,#173cc1 13.6%,#1d56e5 15.9%,#2265e1 18.2%,#266ed9 20.5%,#338cbf 22.7%,#2b78d0 25.0%,#1843cb 27.3%,#1840c7 29.5%,#3186c4 31.8%,#2d7dcc 34.1%,#3b9eb0 36.4%,#3b9faf 38.6%,#64b78f 40.9%,#a5de5c 43.2%,#a2dc5e 45.5%,#94d469 47.7%,#a6de5b 50.0%,#9cd863 52.3%,#96d567 54.5%,#c3e94e 56.8%,#78c47f 59.1%,#97d567 61.4%,#fcfc88 63.6%,#f5f542 65.9%,#f5f540 68.2%,#fefec2 70.5%,#bee74f 72.7%,#f5f53f 75.0%,#fefeb2 77.3%,#deef45 79.5%,#fcfc81 81.8%,#fefec0 84.1%,#a9e059 86.4%,#fafa69 88.6%,#ffffc8 90.9%,#96d568 93.2%,#1228a6 95.5%,#1638bc 97.7%,#173abf 100.0%)"></i><i style="position:absolute;left:543px;top:0;width:4px;height:100%;box-shadow:inset 1px 0 rgba(0,0,12,.82);background:linear-gradient(#102197 0.0%,#173bc0 2.3%,#266cda 4.5%,#2d7dcc 6.8%,#256bdc 9.1%,#1b4edb 11.4%,#173cc1 13.6%,#1946d0 15.9%,#1c52e1 18.2%,#2e80c9 20.5%,#3591bb 22.7%,#2b79d0 25.0%,#1d58e9 27.3%,#2974d4 29.5%,#3693b9 31.8%,#3186c4 34.1%,#40a2ab 36.4%,#63b790 38.6%,#82c977 40.9%,#98d666 43.2%,#d8ee47 45.5%,#8fd16d 47.7%,#5fb493 50.0%,#72c084 52.3%,#99d765 54.5%,#dbee46 56.8%,#b5e552 59.1%,#aee355 61.4%,#fefeb8 63.6%,#f6f648 65.9%,#f5f542 68.2%,#fefebc 70.5%,#c3e94e 72.7%,#f8f85b 75.0%,#ffffc8 77.3%,#bee74f 79.5%,#f8f85e 81.8%,#fefebf 84.1%,#d6ed47 86.4%,#fcfc80 88.6%,#ffffc8 90.9%,#b5e552 93.2%,#0f1d8e 95.5%,#1224a0 97.7%,#1224a0 100.0%)"></i><i style="position:absolute;left:547px;top:0;width:4px;height:100%;box-shadow:inset 1px 0 rgba(0,0,12,.82);background:linear-gradient(#090b5a 0.0%,#0a0f66 2.3%,#1531b3 4.5%,#1944cd 6.8%,#173abf 9.1%,#142dac 11.4%,#1329a6 13.6%,#132baa 15.9%,#1636b9 18.2%,#1b4edb 20.5%,#1c51df 22.7%,#1946d0 25.0%,#183fc6 27.3%,#266dda 29.5%,#2468de 31.8%,#2469dd 34.1%,#256cdb 36.4%,#2d7ecb 38.6%,#2f82c8 40.9%,#2873d5 43.2%,#399ab3 45.5%,#2d7ecb 47.7%,#205ee6 50.0%,#1f5de8 52.3%,#2c7ccd 54.5%,#92d36a 56.8%,#95d469 59.1%,#3b9db0 61.4%,#f9f966 63.6%,#6bbc89 65.9%,#88cd72 68.2%,#f7f755 70.5%,#399ab3 72.7%,#eff33f 75.0%,#f8f85e 77.3%,#3188c3 79.5%,#cfeb4a 81.8%,#fafa68 84.1%,#ade256 86.4%,#f7f751 88.6%,#fefebe 90.9%,#98d666 93.2%,#101e91 95.5%,#101f92 97.7%,#0f1d8c 100.0%)"></i><i style="position:absolute;left:551px;top:0;width:4px;height:100%;box-shadow:inset 1px 0 rgba(0,0,12,.82);background:linear-gradient(#1329a7 0.0%,#0e1981 2.3%,#1b4dda 4.5%,#2b78d0 6.8%,#266ed9 9.1%,#2060e5 11.4%,#2e81c9 13.6%,#2f83c7 15.9%,#3796b7 18.2%,#3590bc 20.5%,#348fbd 22.7%,#3084c6 25.0%,#2b78d0 27.3%,#85cb75 29.5%,#5ab297 31.8%,#9eda61 34.1%,#63b790 36.4%,#76c281 38.6%,#73c083 40.9%,#3b9faf 43.2%,#3187c4 45.5%,#78c37f 47.7%,#4eaaa0 50.0%,#2e80c9 52.3%,#3999b4 54.5%,#d6ed47 56.8%,#f6f646 59.1%,#a2dc5e 61.4%,#fcfc87 63.6%,#59b198 65.9%,#a3dd5e 68.2%,#fafa6c 70.5%,#97d667 72.7%,#f9f962 75.0%,#fbfb72 77.3%,#68ba8c 79.5%,#f8f857 81.8%,#fefec3 84.1%,#f5f544 86.4%,#fbfb76 88.6%,#ffffc8 90.9%,#f8f85c 93.2%,#142dad 95.5%,#0f1e8f 97.7%,#0e1a85 100.0%)"></i><i style="position:absolute;left:555px;top:0;width:3px;height:100%;box-shadow:inset 1px 0 rgba(0,0,12,.82);background:linear-gradient(#1227a4 0.0%,#11239d 2.3%,#132baa 4.5%,#1944cd 6.8%,#1f5ee7 9.1%,#2d7dcc 11.4%,#2161e4 13.6%,#1f5ee7 15.9%,#1d59ea 18.2%,#2264e1 20.5%,#1d56e6 22.7%,#1d59e9 25.0%,#2e7fca 27.3%,#8dd06f 29.5%,#51ac9e 31.8%,#48a7a5 34.1%,#8ace71 36.4%,#a4dd5d 38.6%,#76c281 40.9%,#3897b6 43.2%,#3b9eb0 45.5%,#49a8a4 47.7%,#3897b5 50.0%,#40a2ab 52.3%,#77c280 54.5%,#ddef45 56.8%,#e9f241 59.1%,#8ccf6f 61.4%,#fcfc80 63.6%,#a6de5b 65.9%,#b0e454 68.2%,#f9f960 70.5%,#52ad9d 72.7%,#f8f859 75.0%,#ffffc8 77.3%,#afe454 79.5%,#f9f964 81.8%,#ffffc8 84.1%,#f7f753 86.4%,#f9f966 88.6%,#ffffc8 90.9%,#f7f755 93.2%,#1535b8 95.5%,#101f94 97.7%,#142eaf 100.0%)"></i><i style="position:absolute;left:558px;top:0;width:4px;height:100%;box-shadow:inset 1px 0 rgba(0,0,12,.82);background:linear-gradient(#f9f960 0.0%,#f9f964 2.3%,#fafa68 4.5%,#f9f966 6.8%,#f8f859 9.1%,#f6f64a 11.4%,#f7f756 13.6%,#f1f43f 15.9%,#f6f64d 18.2%,#e9f241 20.5%,#daee46 22.7%,#f5f546 25.0%,#fbfb71 27.3%,#fdfd94 29.5%,#f8f858 31.8%,#f2f43e 34.1%,#ddef45 36.4%,#e0f044 38.6%,#dcee46 40.9%,#cdeb4a 43.2%,#d0ec49 45.5%,#ace256 47.7%,#dbee46 50.0%,#e4f143 52.3%,#e2f044 54.5%,#f7f74f 56.8%,#f7f756 59.1%,#c8ea4c 61.4%,#fafa6d 63.6%,#76c281 65.9%,#86cc74 68.2%,#f9f963 70.5%,#5cb295 72.7%,#91d26c 75.0%,#f9f960 77.3%,#66b98d 79.5%,#9cd863 81.8%,#fafa67 84.1%,#99d765 86.4%,#c0e84f 88.6%,#f9f962 90.9%,#98d666 93.2%,#1328a6 95.5%,#132cab 97.7%,#11229a 100.0%)"></i><i style="position:absolute;left:562px;top:0;width:4px;height:100%;box-shadow:inset 1px 0 rgba(0,0,12,.82);background:linear-gradient(#fafa6f 0.0%,#f9f967 2.3%,#fafa68 4.5%,#f7f752 6.8%,#f5f53e 9.1%,#dfef45 11.4%,#eaf241 13.6%,#d6ed48 15.9%,#f5f53e 18.2%,#c8ea4c 20.5%,#bfe84f 22.7%,#f5f53e 25.0%,#fbfb71 27.3%,#fdfda0 29.5%,#f7f756 31.8%,#e0f044 34.1%,#aee355 36.4%,#bee74f 38.6%,#d0ec4a 40.9%,#c8ea4c 43.2%,#d1ec49 45.5%,#a9e059 47.7%,#f6f648 50.0%,#f5f542 52.3%,#f5f541 54.5%,#f8f859 56.8%,#f7f753 59.1%,#daee46 61.4%,#fafa69 63.6%,#a7df5a 65.9%,#9ad864 68.2%,#fbfb75 70.5%,#a1db5f 72.7%,#98d666 75.0%,#fafa6c 77.3%,#b3e553 79.5%,#7cc67c 81.8%,#f8f85e 84.1%,#59b197 86.4%,#9dd962 88.6%,#f7f753 90.9%,#66b98d 93.2%,#11239e 95.5%,#142dad 97.7%,#0f1d8e 100.0%)"></i><i style="position:absolute;left:566px;top:0;width:4px;height:100%;box-shadow:inset 1px 0 rgba(0,0,12,.82);background:linear-gradient(#fafa69 0.0%,#f7f753 2.3%,#f9f960 4.5%,#f5f546 6.8%,#f3f43e 9.1%,#f5f542 11.4%,#e6f142 13.6%,#f5f544 15.9%,#f6f649 18.2%,#daee46 20.5%,#d1ec49 22.7%,#f5f540 25.0%,#f9f965 27.3%,#fdfda3 29.5%,#f8f859 31.8%,#edf340 34.1%,#bee74f 36.4%,#deef45 38.6%,#f2f43e 40.9%,#d5ed48 43.2%,#e1f044 45.5%,#c3e84e 47.7%,#f8f85a 50.0%,#f3f43e 52.3%,#f6f648 54.5%,#fafa68 56.8%,#f7f753 59.1%,#e8f142 61.4%,#fafa6e 63.6%,#d3ec48 65.9%,#b7e652 68.2%,#fcfc7e 70.5%,#bde750 72.7%,#cceb4b 75.0%,#fcfc83 77.3%,#d5ed48 79.5%,#96d568 81.8%,#f9f95f 84.1%,#4daaa1 86.4%,#9eda61 88.6%,#f9f966 90.9%,#89ce72 93.2%,#11229b 95.5%,#1226a3 97.7%,#0f1c8b 100.0%)"></i><i style="position:absolute;left:570px;top:0;width:4px;height:100%;box-shadow:inset 1px 0 rgba(0,0,12,.82);background:linear-gradient(#e5f143 0.0%,#d7ed47 2.3%,#c7e94c 4.5%,#c7e94c 6.8%,#c4e94d 9.1%,#c7ea4c 11.4%,#f5f542 13.6%,#edf340 15.9%,#e7f142 18.2%,#c3e84e 20.5%,#a7df5b 22.7%,#c5e94d 25.0%,#f5f545 27.3%,#f7f750 29.5%,#c5e94d 31.8%,#7ec77a 34.1%,#b6e552 36.4%,#c6e94d 38.6%,#b6e552 40.9%,#82c977 43.2%,#b6e552 45.5%,#c9ea4c 47.7%,#d0ec4a 50.0%,#b5e552 52.3%,#b8e651 54.5%,#f5f540 56.8%,#f8f857 59.1%,#3999b4 61.4%,#f6f648 63.6%,#bee74f 65.9%,#348ebe 68.2%,#f7f74f 70.5%,#8ccf70 72.7%,#49a8a4 75.0%,#f8f857 77.3%,#84ca76 79.5%,#358fbc 81.8%,#f5f540 84.1%,#3084c6 86.4%,#5eb493 88.6%,#e2f044 90.9%,#56af9a 93.2%,#1329a7 95.5%,#1329a7 97.7%,#1535b8 100.0%)"></i><i style="position:absolute;left:574px;top:0;width:3px;height:100%;box-shadow:inset 1px 0 rgba(0,0,12,.82);background:linear-gradient(#f0f33f 0.0%,#edf340 2.3%,#f5f545 4.5%,#f6f648 6.8%,#f6f648 9.1%,#f8f85a 11.4%,#fcfc86 13.6%,#f8f85e 15.9%,#fcfc8b 18.2%,#f7f750 20.5%,#f6f647 22.7%,#f8f857 25.0%,#f9f965 27.3%,#f7f754 29.5%,#dcef45 31.8%,#c7ea4c 34.1%,#b4e553 36.4%,#c4e94d 38.6%,#e7f142 40.9%,#f5f541 43.2%,#c9ea4c 45.5%,#d5ed48 47.7%,#f4f43e 50.0%,#c4e94d 52.3%,#c5e94d 54.5%,#f7f751 56.8%,#fcfc8c 59.1%,#b9e651 61.4%,#fbfb6f 63.6%,#f8f85e 65.9%,#6fbe86 68.2%,#f7f751 70.5%,#a7df5b 72.7%,#b3e553 75.0%,#f7f754 77.3%,#3590bb 79.5%,#70be86 81.8%,#dbee46 84.1%,#2a77d1 86.4%,#b3e553 88.6%,#f6f64c 90.9%,#a5de5c 93.2%,#112199 95.5%,#132ba9 97.7%,#1534b7 100.0%)"></i><i style="position:absolute;left:577px;top:0;width:4px;height:100%;box-shadow:inset 1px 0 rgba(0,0,12,.82);background:linear-gradient(#080850 0.0%,#080850 2.3%,#080850 4.5%,#080a57 6.8%,#0b1068 9.1%,#0e1a84 11.4%,#1430b1 13.6%,#11239d 15.9%,#11239f 18.2%,#0f1b88 20.5%,#0f1b88 22.7%,#11229b 25.0%,#132ba9 27.3%,#0f1c8a 29.5%,#101f93 31.8%,#0d177b 34.1%,#0a0f64 36.4%,#0c1576 38.6%,#11229a 40.9%,#142eae 43.2%,#0f1c8a 45.5%,#142faf 47.7%,#1636b9 50.0%,#11239e 52.3%,#132baa 54.5%,#1d57e7 56.8%,#328ac1 59.1%,#1b4cd8 61.4%,#3084c6 63.6%,#3897b6 65.9%,#1840c7 68.2%,#2770d8 70.5%,#1945cf 72.7%,#1d56e6 75.0%,#2468de 77.3%,#11239f 79.5%,#142eae 81.8%,#1843cb 84.1%,#0e1a85 86.4%,#1a4bd6 88.6%,#2a78d1 90.9%,#1c53e1 93.2%,#102094 95.5%,#142eae 97.7%,#1535b8 100.0%)"></i><i style="position:absolute;left:581px;top:0;width:4px;height:100%;box-shadow:inset 1px 0 rgba(0,0,12,.82);background:linear-gradient(#0e1a84 0.0%,#0b126f 2.3%,#0a0f64 4.5%,#0f1d8e 6.8%,#1329a6 9.1%,#132cab 11.4%,#173bc0 13.6%,#1840c7 15.9%,#101f92 18.2%,#142fb0 20.5%,#1532b3 22.7%,#1636ba 25.0%,#173dc4 27.3%,#1227a5 29.5%,#1b4eda 31.8%,#132cab 34.1%,#102094 36.4%,#1226a2 38.6%,#1636b9 40.9%,#1638bc 43.2%,#132ba9 45.5%,#1d58e8 47.7%,#1a48d2 50.0%,#163abe 52.3%,#1842ca 54.5%,#2162e3 56.8%,#2974d4 59.1%,#1b4edb 61.4%,#3188c3 63.6%,#3a9bb2 65.9%,#1c52e0 68.2%,#358fbc 70.5%,#1f5ee7 72.7%,#2468de 75.0%,#2974d4 77.3%,#1946d0 79.5%,#173bc0 81.8%,#1c54e3 84.1%,#1227a5 86.4%,#2162e4 88.6%,#348ebe 90.9%,#1d59ea 93.2%,#101f93 95.5%,#1430b1 97.7%,#1535b7 100.0%)"></i><i style="position:absolute;left:585px;top:0;width:4px;height:100%;box-shadow:inset 1px 0 rgba(0,0,12,.82);background:linear-gradient(#1636b9 0.0%,#0f1d8c 2.3%,#1946d0 4.5%,#1a4bd7 6.8%,#183fc6 9.1%,#1532b3 11.4%,#132aa8 13.6%,#1329a7 15.9%,#1b4fdc 18.2%,#1a4ad5 20.5%,#173bc0 22.7%,#1534b6 25.0%,#183fc6 27.3%,#266dd9 29.5%,#1843cb 31.8%,#1637ba 34.1%,#173cc1 36.4%,#1947d0 38.6%,#1f5de8 40.9%,#2b79cf 43.2%,#1c51df 45.5%,#3084c6 47.7%,#3084c6 50.0%,#1a49d4 52.3%,#1a49d4 54.5%,#2d7dcc 56.8%,#3898b5 59.1%,#173cc1 61.4%,#6abb8a 63.6%,#3b9faf 65.9%,#2367df 68.2%,#4eaaa0 70.5%,#2b78d0 72.7%,#2c7bce 75.0%,#87cc73 77.3%,#1944cd 79.5%,#1c52e0 81.8%,#338bc0 84.1%,#183fc6 86.4%,#276fd8 88.6%,#9eda61 90.9%,#2469dd 93.2%,#102095 95.5%,#1224a0 97.7%,#132aa9 100.0%)"></i><i style="position:absolute;left:589px;top:0;width:4px;height:100%;box-shadow:inset 1px 0 rgba(0,0,12,.82);background:linear-gradient(#173cc1 0.0%,#101f94 2.3%,#132baa 4.5%,#142faf 6.8%,#1535b7 9.1%,#173bc0 11.4%,#1532b3 13.6%,#1842ca 15.9%,#1224a1 18.2%,#1639be 20.5%,#1843cb 22.7%,#1a48d2 25.0%,#1a4bd7 27.3%,#1a49d4 29.5%,#266ed9 31.8%,#1946d0 34.1%,#1534b7 36.4%,#173cc2 38.6%,#1c53e1 40.9%,#2365e0 43.2%,#173cc1 45.5%,#1a48d2 47.7%,#1841c8 50.0%,#1b4fdc 52.3%,#1f5ce8 54.5%,#2973d4 56.8%,#2263e2 59.1%,#173dc2 61.4%,#338cbf 63.6%,#1c55e4 65.9%,#1b50de 68.2%,#4aa8a3 70.5%,#2f82c7 72.7%,#2c7ccd 75.0%,#3692ba 77.3%,#1c51df 79.5%,#2366e0 81.8%,#3898b5 84.1%,#1b4dd8 86.4%,#2973d4 88.6%,#51ac9e 90.9%,#1841c8 93.2%,#1225a1 95.5%,#1533b4 97.7%,#142fb0 100.0%)"></i><i style="position:absolute;left:593px;top:0;width:3px;height:100%;box-shadow:inset 1px 0 rgba(0,0,12,.82);background:linear-gradient(#163abe 0.0%,#1329a7 2.3%,#1227a4 4.5%,#1329a8 6.8%,#1430b1 9.1%,#1534b6 11.4%,#132baa 13.6%,#142eae 15.9%,#132aa9 18.2%,#1226a3 20.5%,#1224a0 22.7%,#142eae 25.0%,#1840c7 27.3%,#1a48d2 29.5%,#2365e0 31.8%,#2a76d2 34.1%,#205fe6 36.4%,#256bdb 38.6%,#348fbd 40.9%,#5ab296 43.2%,#2d7ecb 45.5%,#348dbe 47.7%,#58b098 50.0%,#6cbc89 52.3%,#9cd963 54.5%,#c4e94d 56.8%,#8ccf6f 59.1%,#3a9cb1 61.4%,#f6f64d 63.6%,#c6e94d 65.9%,#3a9cb1 68.2%,#f9f963 70.5%,#f5f540 72.7%,#7dc67c 75.0%,#fbfb73 77.3%,#e3f043 79.5%,#83ca76 81.8%,#fdfd97 84.1%,#bfe84f 86.4%,#8ed06e 88.6%,#fbfb76 90.9%,#4daaa1 93.2%,#0f1d8e 95.5%,#1329a7 97.7%,#1329a7 100.0%)"></i><i style="position:absolute;left:596px;top:0;width:4px;height:100%;box-shadow:inset 1px 0 rgba(0,0,12,.82);background:linear-gradient(#205fe6 0.0%,#2366e0 2.3%,#1c52e0 4.5%,#1c51df 6.8%,#1d56e5 9.1%,#1e5aea 11.4%,#1e5aea 13.6%,#1c52e0 15.9%,#2c7ace 18.2%,#1d57e7 20.5%,#1a4cd7 22.7%,#1d56e6 25.0%,#2b7acf 27.3%,#3692ba 29.5%,#338bc0 31.8%,#aee355 34.1%,#96d568 36.4%,#a0db60 38.6%,#b1e454 40.9%,#b9e651 43.2%,#76c281 45.5%,#aae158 47.7%,#f4f43e 50.0%,#dcee46 52.3%,#f5f53e 54.5%,#f7f754 56.8%,#d7ed47 59.1%,#d0ec4a 61.4%,#fdfd94 63.6%,#fbfb77 65.9%,#c8ea4c 68.2%,#fefebe 70.5%,#fdfda4 72.7%,#dbee46 75.0%,#ffffc8 77.3%,#ffffc8 79.5%,#f0f33f 81.8%,#ffffc8 84.1%,#fefead 86.4%,#d5ed48 88.6%,#ffffc8 90.9%,#f5f543 93.2%,#0e1a85 95.5%,#11229c 97.7%,#11239e 100.0%)"></i><i style="position:absolute;left:600px;top:0;width:4px;height:100%;box-shadow:inset 1px 0 rgba(0,0,12,.82);background:linear-gradient(#173bc1 0.0%,#2161e4 2.3%,#1c53e1 4.5%,#1947d1 6.8%,#1944cd 9.1%,#1a48d2 11.4%,#1a49d3 13.6%,#1946cf 15.9%,#1841c8 18.2%,#1841c9 20.5%,#1843cb 22.7%,#1b4eda 25.0%,#2264e1 27.3%,#2e80ca 29.5%,#1c52e0 31.8%,#48a7a5 34.1%,#7bc57d 36.4%,#b3e553 38.6%,#84ca76 40.9%,#2e7fca 43.2%,#3896b6 45.5%,#b8e651 47.7%,#c7e94c 50.0%,#8dd06e 52.3%,#b6e552 54.5%,#e6f142 56.8%,#aae158 59.1%,#67b98d 61.4%,#f6f64d 63.6%,#fbfb74 65.9%,#cbea4b 68.2%,#fefeb8 70.5%,#fefec3 72.7%,#dbee46 75.0%,#ffffc8 77.3%,#ffffc8 79.5%,#f6f648 81.8%,#ffffc8 84.1%,#fefec0 86.4%,#d1ec49 88.6%,#ffffc8 90.9%,#f7f752 93.2%,#173bc0 95.5%,#1532b4 97.7%,#11239f 100.0%)"></i><i style="position:absolute;left:604px;top:0;width:4px;height:100%;box-shadow:inset 1px 0 rgba(0,0,12,.82);background:linear-gradient(#1329a7 0.0%,#1534b7 2.3%,#173bc0 4.5%,#142dad 6.8%,#1225a1 9.1%,#142fb0 11.4%,#1c51df 13.6%,#142eae 15.9%,#1533b4 18.2%,#1534b7 20.5%,#11239d 22.7%,#11229b 25.0%,#1636b9 27.3%,#1c51df 29.5%,#1d58e9 31.8%,#6ebd87 34.1%,#56af9a 36.4%,#3a9cb1 38.6%,#2e7fca 40.9%,#2975d3 43.2%,#72c084 45.5%,#75c182 47.7%,#99d765 50.0%,#c4e94d 52.3%,#d5ed48 54.5%,#deef45 56.8%,#a6de5b 59.1%,#3ea1ac 61.4%,#fbfb70 63.6%,#fafa6c 65.9%,#6ebe87 68.2%,#fafa6b 70.5%,#fdfda7 72.7%,#bde750 75.0%,#ffffc8 77.3%,#fefeb3 79.5%,#c0e84f 81.8%,#fefeb7 84.1%,#fdfdad 86.4%,#cceb4b 88.6%,#ffffc8 90.9%,#d4ed48 93.2%,#183fc6 95.5%,#0f1c8a 97.7%,#1226a3 100.0%)"></i><i style="position:absolute;left:608px;top:0;width:4px;height:100%;box-shadow:inset 1px 0 rgba(0,0,12,.82);background:linear-gradient(#0f1d8d 0.0%,#0c1473 2.3%,#0e1982 4.5%,#090b5a 6.8%,#080850 9.1%,#090b5a 11.4%,#0f1c8a 13.6%,#0a1067 15.9%,#0c1575 18.2%,#0a0f65 20.5%,#0a0e63 22.7%,#0c1371 25.0%,#0e1b86 27.3%,#1636ba 29.5%,#1842ca 31.8%,#1a4bd6 34.1%,#1943cb 36.4%,#1946cf 38.6%,#1a48d2 40.9%,#1b4fdc 43.2%,#1b50de 45.5%,#3187c3 47.7%,#3796b7 50.0%,#4ca9a1 52.3%,#76c281 54.5%,#a1db5f 56.8%,#8dd06f 59.1%,#2d7ecb 61.4%,#e2f043 63.6%,#fafa69 65.9%,#348fbd 68.2%,#d6ed48 70.5%,#f9f95f 72.7%,#60b592 75.0%,#fafa6a 77.3%,#daee46 79.5%,#2b79cf 81.8%,#f8f859 84.1%,#f7f756 86.4%,#71bf85 88.6%,#f9f964 90.9%,#5db395 93.2%,#1534b6 95.5%,#1227a4 97.7%,#1224a0 100.0%)"></i><i style="position:absolute;left:612px;top:0;width:3px;height:100%;box-shadow:inset 1px 0 rgba(0,0,12,.82);background:linear-gradient(#7fc77a 0.0%,#3085c5 2.3%,#328ac1 4.5%,#2161e4 6.8%,#1c54e3 9.1%,#256cdb 11.4%,#399bb3 13.6%,#338dbf 15.9%,#3b9db0 18.2%,#348ebe 20.5%,#41a3ab 22.7%,#6fbe86 25.0%,#7fc879 27.3%,#d1ec49 29.5%,#bbe750 31.8%,#64b88f 34.1%,#3794b8 36.4%,#399ab3 38.6%,#3da0ad 40.9%,#3a9bb2 43.2%,#1f5de7 45.5%,#66b98d 47.7%,#6fbe86 50.0%,#57b099 52.3%,#6abb8a 54.5%,#a0db60 56.8%,#b4e553 59.1%,#348ebd 61.4%,#8fd16d 63.6%,#f7f74f 65.9%,#3b9eb0 68.2%,#7fc879 70.5%,#cceb4b 72.7%,#3590bc 75.0%,#caea4c 77.3%,#358fbc 79.5%,#1945cf 81.8%,#7bc57d 84.1%,#afe454 86.4%,#45a5a7 88.6%,#b5e552 90.9%,#256bdc 93.2%,#1228a5 95.5%,#142eae 97.7%,#11239d 100.0%)"></i><i style="position:absolute;left:615px;top:0;width:4px;height:100%;box-shadow:inset 1px 0 rgba(0,0,12,.82);background:linear-gradient(#3b9db0 0.0%,#1d59ea 2.3%,#1840c8 4.5%,#1d57e7 6.8%,#266ed9 9.1%,#2060e5 11.4%,#2163e3 13.6%,#1f5ee7 15.9%,#1c53e1 18.2%,#2973d4 20.5%,#2a78d1 22.7%,#3186c4 25.0%,#59b197 27.3%,#d5ed48 29.5%,#4ca9a2 31.8%,#6bbc89 34.1%,#2975d3 36.4%,#2c7ace 38.6%,#2f82c8 40.9%,#2770d7 43.2%,#1f5ee7 45.5%,#3187c4 47.7%,#3999b4 50.0%,#2d7dcc 52.3%,#256bdb 54.5%,#3289c2 56.8%,#80c879 59.1%,#1943cc 61.4%,#2e7fca 63.6%,#b7e652 65.9%,#3795b7 68.2%,#8ccf6f 70.5%,#b8e651 72.7%,#1a48d2 75.0%,#a3dd5e 77.3%,#328ac1 79.5%,#142eaf 81.8%,#3590bc 84.1%,#77c280 86.4%,#3590bc 88.6%,#99d765 90.9%,#1f5ce8 93.2%,#112198 95.5%,#0d1679 97.7%,#11239f 100.0%)"></i><i style="position:absolute;left:619px;top:0;width:4px;height:100%;box-shadow:inset 1px 0 rgba(0,0,12,.82);background:linear-gradient(#3b9eb0 0.0%,#68ba8c 2.3%,#3999b4 4.5%,#50ac9e 6.8%,#5ab197 9.1%,#3289c2 11.4%,#2163e3 13.6%,#68ba8b 15.9%,#3fa2ac 18.2%,#b0e454 20.5%,#c0e84f 22.7%,#d0ec4a 25.0%,#ecf240 27.3%,#e0ef44 29.5%,#8dd06e 31.8%,#a5de5c 34.1%,#51ac9e 36.4%,#43a4a9 38.6%,#3a9db1 40.9%,#338bc0 43.2%,#3ea1ad 45.5%,#aee355 47.7%,#8ccf70 50.0%,#81c878 52.3%,#9dd962 54.5%,#b2e453 56.8%,#b1e454 59.1%,#70bf85 61.4%,#87cc74 63.6%,#f6f64c 65.9%,#63b790 68.2%,#83ca77 70.5%,#cbea4b 72.7%,#2f83c7 75.0%,#afe454 77.3%,#dfef45 79.5%,#1d57e7 81.8%,#c9ea4c 84.1%,#f2f43e 86.4%,#48a7a5 88.6%,#c5e94d 90.9%,#dfef45 93.2%,#0d177d 95.5%,#11229a 97.7%,#1534b6 100.0%)"></i><i style="position:absolute;left:623px;top:0;width:4px;height:100%;box-shadow:inset 1px 0 rgba(0,0,12,.82);background:linear-gradient(#3fa2ab 0.0%,#3ea1ad 2.3%,#2b7acf 4.5%,#338bc0 6.8%,#338cbf 9.1%,#205fe6 11.4%,#1b4cd8 13.6%,#348dbe 15.9%,#2f83c7 18.2%,#6dbd88 20.5%,#bbe750 22.7%,#d4ed48 25.0%,#d6ed47 27.3%,#c3e84e 29.5%,#79c47f 31.8%,#54ae9b 34.1%,#2d7ecb 36.4%,#3289c2 38.6%,#3693b9 40.9%,#2f82c7 43.2%,#4fab9f 45.5%,#9bd864 47.7%,#96d567 50.0%,#5db394 52.3%,#4eaaa0 54.5%,#5db394 56.8%,#7fc77a 59.1%,#256bdc 61.4%,#40a2ab 63.6%,#f4f43e 65.9%,#348ebd 68.2%,#3897b6 70.5%,#ace256 72.7%,#2770d7 75.0%,#6ebd87 77.3%,#ebf241 79.5%,#2c7ccd 81.8%,#bae651 84.1%,#f2f43e 86.4%,#47a7a5 88.6%,#ade355 90.9%,#c9ea4c 93.2%,#0e1b87 95.5%,#11229c 97.7%,#1534b6 100.0%)"></i><i style="position:absolute;left:627px;top:0;width:4px;height:100%;box-shadow:inset 1px 0 rgba(0,0,12,.82);background:linear-gradient(#2d7ecb 0.0%,#266ed9 2.3%,#1946cf 4.5%,#1b4dd9 6.8%,#1c52e1 9.1%,#1843cb 11.4%,#1639be 13.6%,#1e5be9 15.9%,#1d55e5 18.2%,#2a77d1 20.5%,#4daaa1 22.7%,#7ac47e 25.0%,#6fbe86 27.3%,#62b690 29.5%,#3795b8 31.8%,#348dbe 34.1%,#2367df 36.4%,#2a76d2 38.6%,#2f81c8 40.9%,#276fd8 43.2%,#348ebe 45.5%,#51ac9d 47.7%,#81c978 50.0%,#60b592 52.3%,#64b78f 54.5%,#91d26c 56.8%,#c9ea4c 59.1%,#3591bb 61.4%,#bde750 63.6%,#fbfb74 65.9%,#b6e552 68.2%,#caea4b 70.5%,#f9f965 72.7%,#94d46a 75.0%,#f5f544 77.3%,#fdfd9e 79.5%,#c5e94d 81.8%,#fafa67 84.1%,#fdfda2 86.4%,#dbee46 88.6%,#fafa6c 90.9%,#fbfb6f 93.2%,#0f1d8d 95.5%,#101f92 97.7%,#142faf 100.0%)"></i><i style="position:absolute;left:631px;top:0;width:3px;height:100%;box-shadow:inset 1px 0 rgba(0,0,12,.82);background:linear-gradient(#2060e5 0.0%,#2264e2 2.3%,#173cc2 4.5%,#173abf 6.8%,#1b4edb 9.1%,#2264e1 11.4%,#1c53e1 13.6%,#2468de 15.9%,#2263e2 18.2%,#2974d4 20.5%,#2f83c7 22.7%,#2e7fca 25.0%,#266dda 27.3%,#2871d6 29.5%,#1f5de7 31.8%,#3b9eb0 34.1%,#338bc0 36.4%,#2f83c7 38.6%,#2c7bce 40.9%,#256adc 43.2%,#1c55e4 45.5%,#1c54e3 47.7%,#2873d5 50.0%,#338bc0 52.3%,#5ab197 54.5%,#99d766 56.8%,#bee74f 59.1%,#5eb494 61.4%,#cfeb4a 63.6%,#f8f85b 65.9%,#b4e553 68.2%,#c8ea4c 70.5%,#f6f64e 72.7%,#348dbe 75.0%,#c3e94e 77.3%,#f5f540 79.5%,#63b790 81.8%,#f5f53f 84.1%,#ddef45 86.4%,#4daaa1 88.6%,#f9f965 90.9%,#f7f754 93.2%,#0f1c89 95.5%,#0d1679 97.7%,#1224a0 100.0%)"></i><i style="position:absolute;left:634px;top:0;width:4px;height:100%;box-shadow:inset 1px 0 rgba(0,0,12,.82);background:linear-gradient(#1639be 0.0%,#1b4fdc 2.3%,#1843cb 4.5%,#173bc0 6.8%,#1946d0 9.1%,#2367df 11.4%,#2b78d0 13.6%,#59b198 15.9%,#2e80c9 18.2%,#3591bb 20.5%,#2e81c9 22.7%,#256adc 25.0%,#2367df 27.3%,#3898b5 29.5%,#2469dd 31.8%,#3999b4 34.1%,#45a5a7 36.4%,#399bb3 38.6%,#3591bb 40.9%,#399ab3 43.2%,#3a9bb2 45.5%,#2469dd 47.7%,#338cbf 50.0%,#2b7acf 52.3%,#3795b8 54.5%,#98d666 56.8%,#e7f142 59.1%,#6fbe86 61.4%,#bfe74f 63.6%,#fdfdab 65.9%,#c7e94c 68.2%,#ddef45 70.5%,#fafa68 72.7%,#4daaa1 75.0%,#f6f649 77.3%,#bbe750 79.5%,#3b9db0 81.8%,#f6f64d 84.1%,#b5e552 86.4%,#3289c1 88.6%,#f5f542 90.9%,#fafa68 93.2%,#1226a3 95.5%,#0d167a 97.7%,#112198 100.0%)"></i><i style="position:absolute;left:638px;top:0;width:4px;height:100%;box-shadow:inset 1px 0 rgba(0,0,12,.82);background:linear-gradient(#1225a2 0.0%,#1535b7 2.3%,#142dad 4.5%,#132ba9 6.8%,#1533b5 9.1%,#1945ce 11.4%,#1943cb 13.6%,#2975d3 15.9%,#205fe6 18.2%,#1945cd 20.5%,#1a4cd7 22.7%,#1b4edb 25.0%,#1842ca 27.3%,#1c51de 29.5%,#1f5ce8 31.8%,#2469dd 34.1%,#3084c6 36.4%,#2b78d0 38.6%,#2162e3 40.9%,#1f5de8 43.2%,#2264e2 45.5%,#1c51df 47.7%,#173ec4 50.0%,#1b4cd8 52.3%,#2469dd 54.5%,#3898b5 56.8%,#a4dd5d 59.1%,#3a9bb2 61.4%,#55af9a 63.6%,#f6f649 65.9%,#75c281 68.2%,#7bc57d 70.5%,#dcef45 72.7%,#2f83c7 75.0%,#d8ee47 77.3%,#3ca0ae 79.5%,#1b4edb 81.8%,#d6ed48 84.1%,#84ca76 86.4%,#2161e4 88.6%,#dfef45 90.9%,#f7f755 93.2%,#102096 95.5%,#102097 97.7%,#132aa9 100.0%)"></i><i style="position:absolute;left:642px;top:0;width:4px;height:100%;box-shadow:inset 1px 0 rgba(0,0,12,.82);background:linear-gradient(#1946cf 0.0%,#1d59ea 2.3%,#1d59ea 4.5%,#1c54e3 6.8%,#1d56e6 9.1%,#2366e0 11.4%,#205ee6 13.6%,#2e81c9 15.9%,#3591bb 18.2%,#1d59ea 20.5%,#266ed9 22.7%,#2d7dcc 25.0%,#246add 27.3%,#2770d7 29.5%,#3694b9 31.8%,#3794b8 34.1%,#3fa2ac 36.4%,#3796b7 38.6%,#3086c5 40.9%,#3084c6 43.2%,#348ebd 45.5%,#328ac1 47.7%,#1d56e5 50.0%,#2f82c8 52.3%,#46a6a6 54.5%,#88cd73 56.8%,#dfef45 59.1%,#9fda61 61.4%,#85cb75 63.6%,#f5f544 65.9%,#68ba8c 68.2%,#b8e651 70.5%,#e2f043 72.7%,#338bc0 75.0%,#eff33f 77.3%,#8fd16d 79.5%,#2161e4 81.8%,#f2f43e 84.1%,#f6f648 86.4%,#59b197 88.6%,#f6f64b 90.9%,#fcfc89 93.2%,#11229a 95.5%,#1226a3 97.7%,#1431b2 100.0%)"></i><i style="position:absolute;left:646px;top:0;width:4px;height:100%;box-shadow:inset 1px 0 rgba(0,0,12,.82);background:linear-gradient(#338cc0 0.0%,#6bbc89 2.3%,#78c37f 4.5%,#49a8a4 6.8%,#3ca0ae 9.1%,#6dbd88 11.4%,#85cb75 13.6%,#57af99 15.9%,#bfe84f 18.2%,#6dbd88 20.5%,#7ec77a 22.7%,#9bd864 25.0%,#98d666 27.3%,#aee355 29.5%,#bce750 31.8%,#cceb4b 34.1%,#b2e453 36.4%,#a7df5a 38.6%,#b3e553 40.9%,#c6e94d 43.2%,#d3ec49 45.5%,#c4e94d 47.7%,#68ba8c 50.0%,#b1e454 52.3%,#cbea4b 54.5%,#e3f043 56.8%,#f9f966 59.1%,#dcee46 61.4%,#9ad765 63.6%,#f5f544 65.9%,#3693ba 68.2%,#c6e94d 70.5%,#c8ea4c 72.7%,#1a4ad4 75.0%,#a8df5a 77.3%,#8ed06e 79.5%,#1d56e6 81.8%,#b6e552 84.1%,#f7f74e 86.4%,#ace256 88.6%,#cfeb4a 90.9%,#f9f961 93.2%,#1431b2 95.5%,#11239f 97.7%,#1531b3 100.0%)"></i><i style="position:absolute;left:650px;top:0;width:3px;height:100%;box-shadow:inset 1px 0 rgba(0,0,12,.82);background:linear-gradient(#55af9b 0.0%,#53ae9c 2.3%,#3795b8 4.5%,#49a8a4 6.8%,#7dc67b 9.1%,#ace257 11.4%,#afe454 13.6%,#82c977 15.9%,#cbeb4b 18.2%,#cbeb4b 20.5%,#b4e553 22.7%,#8ace71 25.0%,#86cb75 27.3%,#cbea4b 29.5%,#66b88e 31.8%,#b5e552 34.1%,#abe157 36.4%,#b1e454 38.6%,#c4e94d 40.9%,#dfef45 43.2%,#eaf241 45.5%,#c6e94d 47.7%,#b1e454 50.0%,#8ccf6f 52.3%,#b6e552 54.5%,#dcee46 56.8%,#f7f754 59.1%,#83ca76 61.4%,#a8e059 63.6%,#f8f85a 65.9%,#3a9bb2 68.2%,#b7e552 70.5%,#c1e84e 72.7%,#2367df 75.0%,#e7f142 77.3%,#95d468 79.5%,#2367df 81.8%,#d0ec4a 84.1%,#f9f965 86.4%,#caea4b 88.6%,#cbea4b 90.9%,#fcfc82 93.2%,#1636b9 95.5%,#0d187e 97.7%,#101e91 100.0%)"></i><i style="position:absolute;left:653px;top:0;width:4px;height:100%;box-shadow:inset 1px 0 rgba(0,0,12,.82);background:linear-gradient(#266dda 0.0%,#1c53e2 2.3%,#2d7dcc 4.5%,#328ac1 6.8%,#348ebd 9.1%,#3b9db0 11.4%,#62b690 13.6%,#3b9db0 15.9%,#52ad9d 18.2%,#58b198 20.5%,#5ab197 22.7%,#5db394 25.0%,#6abb8a 27.3%,#60b592 29.5%,#3ea1ad 31.8%,#6dbd87 34.1%,#40a2ab 36.4%,#3b9eb0 38.6%,#54ae9c 40.9%,#80c879 43.2%,#9bd863 45.5%,#46a6a6 47.7%,#51ac9e 50.0%,#4eaaa0 52.3%,#85cb75 54.5%,#b5e552 56.8%,#ecf240 59.1%,#77c380 61.4%,#40a2ab 63.6%,#e5f142 65.9%,#2264e2 68.2%,#68ba8c 70.5%,#a6de5b 72.7%,#1b50dd 75.0%,#82c977 77.3%,#3794b8 79.5%,#1a48d2 81.8%,#86cc74 84.1%,#c5e94d 86.4%,#266dda 88.6%,#71bf85 90.9%,#f7f754 93.2%,#101e91 95.5%,#11239f 97.7%,#102096 100.0%)"></i><i style="position:absolute;left:657px;top:0;width:4px;height:100%;box-shadow:inset 1px 0 rgba(0,0,12,.82);background:linear-gradient(#54ae9b 0.0%,#348dbe 2.3%,#77c380 4.5%,#83ca77 6.8%,#87cc73 9.1%,#a2dc5e 11.4%,#a7df5a 13.6%,#bae651 15.9%,#c3e84e 18.2%,#c9ea4c 20.5%,#d3ec48 22.7%,#d2ec49 25.0%,#cceb4b 27.3%,#bbe750 29.5%,#b9e651 31.8%,#deef45 34.1%,#cbea4b 36.4%,#c7e94c 38.6%,#c7e94d 40.9%,#c6e94d 43.2%,#e4f043 45.5%,#c0e84f 47.7%,#c0e84f 50.0%,#d5ed48 52.3%,#e3f043 54.5%,#eff33f 56.8%,#fafa67 59.1%,#f0f33f 61.4%,#9ad765 63.6%,#f6f64d 65.9%,#328ac1 68.2%,#b9e651 70.5%,#f2f43e 72.7%,#3796b7 75.0%,#d4ec48 77.3%,#b3e553 79.5%,#348dbe 81.8%,#e6f142 84.1%,#daee46 86.4%,#2a77d1 88.6%,#c8ea4c 90.9%,#f9f960 93.2%,#101f91 95.5%,#11239d 97.7%,#11229b 100.0%)"></i><i style="position:absolute;left:661px;top:0;width:4px;height:100%;box-shadow:inset 1px 0 rgba(0,0,12,.82);background:linear-gradient(#4daaa1 0.0%,#3a9cb1 2.3%,#57b099 4.5%,#57b099 6.8%,#6ebd87 9.1%,#8fd16d 11.4%,#45a5a7 13.6%,#c2e84e 15.9%,#cdeb4a 18.2%,#d1ec49 20.5%,#d9ee46 22.7%,#c9ea4c 25.0%,#abe257 27.3%,#ade356 29.5%,#aae158 31.8%,#ecf240 34.1%,#eef340 36.4%,#f0f33f 38.6%,#daee46 40.9%,#b3e553 43.2%,#e5f142 45.5%,#d9ee47 47.7%,#bfe84f 50.0%,#e4f043 52.3%,#d5ed48 54.5%,#cdeb4a 56.8%,#f9f961 59.1%,#f2f43e 61.4%,#62b691 63.6%,#eef340 65.9%,#266ed9 68.2%,#7ec77a 70.5%,#e2f044 72.7%,#3897b6 75.0%,#d0ec49 77.3%,#cfeb4a 79.5%,#3a9cb2 81.8%,#f4f43e 84.1%,#e5f143 86.4%,#2d7ecb 88.6%,#bee74f 90.9%,#f7f74e 93.2%,#132aa8 95.5%,#0f1b88 97.7%,#1224a0 100.0%)"></i><i style="position:absolute;left:665px;top:0;width:3px;height:100%;box-shadow:inset 1px 0 rgba(0,0,12,.82);background:linear-gradient(#2f82c8 0.0%,#4daaa1 2.3%,#4ba8a3 4.5%,#3a9cb1 6.8%,#399ab3 9.1%,#3999b4 11.4%,#3289c2 13.6%,#9bd864 15.9%,#6fbe86 18.2%,#8fd16d 20.5%,#bbe650 22.7%,#c5e94d 25.0%,#b9e651 27.3%,#98d666 29.5%,#bde750 31.8%,#c8ea4c 34.1%,#bbe651 36.4%,#b8e651 38.6%,#9fda60 40.9%,#7bc57c 43.2%,#c9ea4c 45.5%,#c8ea4c 47.7%,#d4ed48 50.0%,#b5e552 52.3%,#bce750 54.5%,#bce750 56.8%,#d5ed48 59.1%,#73c183 61.4%,#3795b8 63.6%,#f9f961 65.9%,#50ab9f 68.2%,#43a4a9 70.5%,#d5ed48 72.7%,#358fbc 75.0%,#44a5a7 77.3%,#ecf240 79.5%,#3188c3 81.8%,#cfeb4a 84.1%,#cceb4b 86.4%,#1d59e9 88.6%,#a2dc5e 90.9%,#dcee46 93.2%,#102095 95.5%,#112198 97.7%,#11229b 100.0%)"></i><i style="position:absolute;left:668px;top:0;width:4px;height:100%;box-shadow:inset 1px 0 rgba(0,0,12,.82);background:linear-gradient(#7dc67b 0.0%,#3084c6 2.3%,#2367df 4.5%,#2263e2 6.8%,#2468de 9.1%,#2264e1 11.4%,#256adc 13.6%,#3084c6 15.9%,#3794b8 18.2%,#95d568 20.5%,#c9ea4c 22.7%,#dbee46 25.0%,#d6ed47 27.3%,#a0db60 29.5%,#ddef45 31.8%,#cfeb4a 34.1%,#b0e454 36.4%,#9fda61 38.6%,#8bce70 40.9%,#8fd16d 43.2%,#b7e652 45.5%,#e4f043 47.7%,#cbea4b 50.0%,#caea4c 52.3%,#dcee46 54.5%,#d6ed47 56.8%,#e5f143 59.1%,#99d765 61.4%,#42a3aa 63.6%,#f8f859 65.9%,#eaf241 68.2%,#9eda61 70.5%,#f7f752 72.7%,#7bc57d 75.0%,#ade356 77.3%,#ddef45 79.5%,#2f83c7 81.8%,#ceeb4a 84.1%,#f5f540 86.4%,#3085c6 88.6%,#aee355 90.9%,#f9f95f 93.2%,#1228a5 95.5%,#1227a4 97.7%,#11219a 100.0%)"></i><i style="position:absolute;left:672px;top:0;width:4px;height:100%;box-shadow:inset 1px 0 rgba(0,0,12,.82);background:linear-gradient(#88cd72 0.0%,#3590bc 2.3%,#266ed9 4.5%,#256bdc 6.8%,#266ed9 9.1%,#205fe6 11.4%,#1f5de7 13.6%,#2468de 15.9%,#3ea1ac 18.2%,#b1e454 20.5%,#c0e84f 22.7%,#d0ec49 25.0%,#e6f142 27.3%,#abe257 29.5%,#d9ee47 31.8%,#c9ea4c 34.1%,#cdeb4b 36.4%,#bee74f 38.6%,#9eda61 40.9%,#9eda61 43.2%,#95d469 45.5%,#c5e94d 47.7%,#d4ed48 50.0%,#e7f142 52.3%,#f1f43f 54.5%,#d8ee47 56.8%,#daee46 59.1%,#8fd16d 61.4%,#3b9faf 63.6%,#f8f85d 65.9%,#f7f753 68.2%,#a1dc5f 70.5%,#f7f755 72.7%,#71bf85 75.0%,#b0e454 77.3%,#f2f43e 79.5%,#2d7ecb 81.8%,#ade356 84.1%,#f5f544 86.4%,#3a9bb2 88.6%,#9cd963 90.9%,#f9f964 93.2%,#102097 95.5%,#1226a3 97.7%,#112199 100.0%)"></i><i style="position:absolute;left:676px;top:0;width:4px;height:100%;box-shadow:inset 1px 0 rgba(0,0,12,.82);background:linear-gradient(#2469dd 0.0%,#2468de 2.3%,#1b4fdc 4.5%,#1a4bd7 6.8%,#1b4cd8 9.1%,#1842ca 11.4%,#163abe 13.6%,#1637bb 15.9%,#3084c6 18.2%,#5ab197 20.5%,#3a9cb2 22.7%,#3b9faf 25.0%,#86cc74 27.3%,#3693b9 29.5%,#5bb296 31.8%,#60b592 34.1%,#b7e652 36.4%,#a2dc5f 38.6%,#63b78f 40.9%,#60b592 43.2%,#3796b7 45.5%,#3999b4 47.7%,#90d26c 50.0%,#bae651 52.3%,#b9e651 54.5%,#7ec77b 56.8%,#7bc57d 59.1%,#3590bc 61.4%,#2469dd 63.6%,#f5f540 65.9%,#daee46 68.2%,#3591bb 70.5%,#d8ee47 72.7%,#3188c3 75.0%,#3a9bb2 77.3%,#f5f540 79.5%,#2a76d2 81.8%,#3188c3 84.1%,#c6e94d 86.4%,#256bdb 88.6%,#348fbd 90.9%,#cdeb4a 93.2%,#0e1a85 95.5%,#11239f 97.7%,#112199 100.0%)"></i><i style="position:absolute;left:680px;top:0;width:4px;height:100%;box-shadow:inset 1px 0 rgba(0,0,12,.82);background:linear-gradient(#2872d5 0.0%,#4fab9f 2.3%,#266ed9 4.5%,#1b4dd9 6.8%,#1f5ee7 9.1%,#3898b5 11.4%,#4eaba0 13.6%,#205fe5 15.9%,#72c084 18.2%,#b5e552 20.5%,#a5de5c 22.7%,#70be86 25.0%,#48a7a5 27.3%,#4ca9a2 29.5%,#aae158 31.8%,#b1e454 34.1%,#89cd72 36.4%,#5db395 38.6%,#43a4a9 40.9%,#58b198 43.2%,#40a2ab 45.5%,#74c182 47.7%,#51ac9e 50.0%,#82c977 52.3%,#6bbb8a 54.5%,#3a9bb2 56.8%,#82c977 59.1%,#55ae9b 61.4%,#57b099 63.6%,#fafa67 65.9%,#f7f752 68.2%,#72bf84 70.5%,#fbfb75 72.7%,#f5f544 75.0%,#99d765 77.3%,#ffffc8 79.5%,#f6f649 81.8%,#b6e552 84.1%,#f9f964 86.4%,#2a76d2 88.6%,#9fda61 90.9%,#e1f044 93.2%,#1533b6 95.5%,#142fb0 97.7%,#102096 100.0%)"></i><i style="position:absolute;left:684px;top:0;width:3px;height:100%;box-shadow:inset 1px 0 rgba(0,0,12,.82);background:linear-gradient(#256adc 0.0%,#2f83c7 2.3%,#1b4dd9 4.5%,#1637ba 6.8%,#1842ca 9.1%,#2162e3 11.4%,#2a76d2 13.6%,#266ed9 15.9%,#3187c3 18.2%,#2e7fca 20.5%,#3999b4 22.7%,#3b9db0 25.0%,#3085c5 27.3%,#3694b9 29.5%,#3795b8 31.8%,#348dbe 34.1%,#4aa8a3 36.4%,#67b98d 38.6%,#3898b5 40.9%,#205fe6 43.2%,#2367df 45.5%,#3897b6 47.7%,#3085c5 50.0%,#338bc0 52.3%,#3a9db1 54.5%,#47a6a6 56.8%,#a7df5a 59.1%,#78c37f 61.4%,#1c51df 63.6%,#daee46 65.9%,#c0e84f 68.2%,#3085c5 70.5%,#f8f85d 72.7%,#eaf241 75.0%,#65b88e 77.3%,#f9f960 79.5%,#f7f752 81.8%,#72c084 84.1%,#f6f64a 86.4%,#1b4cd8 88.6%,#84ca76 90.9%,#bee74f 93.2%,#1225a2 95.5%,#0e1b87 97.7%,#1227a4 100.0%)"></i><i style="position:absolute;left:687px;top:0;width:4px;height:100%;box-shadow:inset 1px 0 rgba(0,0,12,.82);background:linear-gradient(#64b78f 0.0%,#b3e553 2.3%,#46a6a6 4.5%,#3795b7 6.8%,#49a7a4 9.1%,#70bf85 11.4%,#68ba8c 13.6%,#94d469 15.9%,#bee74f 18.2%,#b1e454 20.5%,#c9ea4c 22.7%,#c5e94d 25.0%,#98d666 27.3%,#b1e454 29.5%,#b3e553 31.8%,#95d568 34.1%,#b9e651 36.4%,#c8ea4c 38.6%,#b0e454 40.9%,#54ae9c 43.2%,#77c380 45.5%,#b1e454 47.7%,#99d766 50.0%,#b4e553 52.3%,#cdeb4b 54.5%,#d8ed47 56.8%,#f6f64b 59.1%,#cbea4b 61.4%,#4ca9a2 63.6%,#f9f964 65.9%,#fafa69 68.2%,#c8ea4c 70.5%,#ffffc8 72.7%,#fbfb74 75.0%,#c4e94d 77.3%,#fdfda5 79.5%,#fcfc81 81.8%,#eaf241 84.1%,#fdfd9c 86.4%,#5bb295 88.6%,#e4f143 90.9%,#fcfc7c 93.2%,#142dad 95.5%,#11229a 97.7%,#1532b4 100.0%)"></i><i style="position:absolute;left:691px;top:0;width:4px;height:100%;box-shadow:inset 1px 0 rgba(0,0,12,.82);background:linear-gradient(#f8f85b 0.0%,#fdfd97 2.3%,#f9f962 4.5%,#f9f965 6.8%,#fbfb70 9.1%,#fafa6c 11.4%,#f7f750 13.6%,#fafa69 15.9%,#fdfda5 18.2%,#fdfda1 20.5%,#fdfda8 22.7%,#fcfc7c 25.0%,#f8f858 27.3%,#f7f751 29.5%,#f6f64c 31.8%,#e7f142 34.1%,#e0f044 36.4%,#e3f043 38.6%,#e3f043 40.9%,#d4ed48 43.2%,#edf340 45.5%,#edf340 47.7%,#d8ee47 50.0%,#ecf240 52.3%,#f5f542 54.5%,#f5f540 56.8%,#f9f962 59.1%,#c0e84f 61.4%,#a9e158 63.6%,#fdfda7 65.9%,#ffffc8 68.2%,#f6f647 70.5%,#ffffc8 72.7%,#ffffc8 75.0%,#c5e94d 77.3%,#fefec2 79.5%,#f7f750 81.8%,#f6f64a 84.1%,#ffffc8 86.4%,#dfef45 88.6%,#f3f43e 90.9%,#ffffc8 93.2%,#1431b2 95.5%,#1535b8 97.7%,#173cc1 100.0%)"></i><i style="position:absolute;left:695px;top:0;width:4px;height:100%;box-shadow:inset 1px 0 rgba(0,0,12,.82);background:linear-gradient(#f8f85c 0.0%,#fafa6e 2.3%,#f7f753 4.5%,#f8f85a 6.8%,#fafa69 9.1%,#f9f964 11.4%,#e1f044 13.6%,#f5f53f 15.9%,#fafa6c 18.2%,#fcfc7a 20.5%,#f9f964 22.7%,#f7f750 25.0%,#f7f74f 27.3%,#edf340 29.5%,#a8e05a 31.8%,#8ace71 34.1%,#4aa8a3 36.4%,#69ba8b 38.6%,#ade256 40.9%,#bce750 43.2%,#eef340 45.5%,#dfef44 47.7%,#cdeb4b 50.0%,#b5e552 52.3%,#9eda62 54.5%,#86cb75 56.8%,#deef45 59.1%,#5bb296 61.4%,#3b9db0 63.6%,#fcfc82 65.9%,#fbfb75 68.2%,#8ccf6f 70.5%,#fafa68 72.7%,#fdfda7 75.0%,#7bc57d 77.3%,#f8f85c 79.5%,#2b7acf 81.8%,#b2e453 84.1%,#fcfc91 86.4%,#dcef46 88.6%,#b9e651 90.9%,#fefeae 93.2%,#0d187d 95.5%,#1636ba 97.7%,#183fc5 100.0%)"></i><i style="position:absolute;left:699px;top:0;width:4px;height:100%;box-shadow:inset 1px 0 rgba(0,0,12,.82);background:linear-gradient(#fafa68 0.0%,#f9f965 2.3%,#f8f859 4.5%,#fafa6a 6.8%,#fcfc79 9.1%,#fafa6d 11.4%,#f5f53f 13.6%,#e6f142 15.9%,#f6f64c 18.2%,#fbfb70 20.5%,#fbfb70 22.7%,#f9f961 25.0%,#f8f859 27.3%,#f6f64e 29.5%,#c7ea4c 31.8%,#b6e552 34.1%,#92d36a 36.4%,#78c37f 38.6%,#b8e651 40.9%,#f5f544 43.2%,#f6f64e 45.5%,#c1e84e 47.7%,#c9ea4c 50.0%,#d9ee46 52.3%,#b7e652 54.5%,#61b691 56.8%,#c2e84e 59.1%,#c2e84e 61.4%,#3898b5 63.6%,#fcfc7c 65.9%,#fdfda1 68.2%,#d6ed47 70.5%,#fefeb5 72.7%,#fdfd97 75.0%,#b4e553 77.3%,#fafa6b 79.5%,#4daaa1 81.8%,#d7ed47 84.1%,#ffffc8 86.4%,#f6f647 88.6%,#d0ec4a 90.9%,#fdfd9c 93.2%,#1225a1 95.5%,#0e1a83 97.7%,#101e90 100.0%)"></i><i style="position:absolute;left:703px;top:0;width:3px;height:100%;box-shadow:inset 1px 0 rgba(0,0,12,.82);background:linear-gradient(#f7f74f 0.0%,#f7f752 2.3%,#f6f646 4.5%,#f8f857 6.8%,#f8f85d 9.1%,#f6f64b 11.4%,#e7f142 13.6%,#f5f540 15.9%,#f0f33f 18.2%,#f6f64a 20.5%,#f8f85b 22.7%,#f9f965 25.0%,#f9f963 27.3%,#f8f85f 29.5%,#f5f53f 31.8%,#f5f540 34.1%,#eaf241 36.4%,#e2f044 38.6%,#f1f43f 40.9%,#f6f649 43.2%,#f6f649 45.5%,#e2f043 47.7%,#d7ed47 50.0%,#d8ed47 52.3%,#d4ed48 54.5%,#bae651 56.8%,#e2f044 59.1%,#d6ed47 61.4%,#9cd963 63.6%,#fafa6a 65.9%,#ffffc8 68.2%,#d4ed48 70.5%,#fefeb0 72.7%,#f6f648 75.0%,#88cd72 77.3%,#f9f963 79.5%,#79c47e 81.8%,#cdeb4a 84.1%,#fefeb2 86.4%,#e2f044 88.6%,#d0ec49 90.9%,#fdfda2 93.2%,#1534b7 95.5%,#0e1a84 97.7%,#0f1c8a 100.0%)"></i><i style="position:absolute;left:706px;top:0;width:4px;height:100%;box-shadow:inset 1px 0 rgba(0,0,12,.82);background:linear-gradient(#183fc6 0.0%,#1b4eda 2.3%,#1945cf 4.5%,#1c53e1 6.8%,#1d55e5 9.1%,#1a48d3 11.4%,#1947d1 13.6%,#2366df 15.9%,#1c53e1 18.2%,#1c54e3 20.5%,#2b79cf 22.7%,#42a3aa 25.0%,#65b88e 27.3%,#75c182 29.5%,#67b98d 31.8%,#a6df5b 34.1%,#b1e454 36.4%,#b2e453 38.6%,#b2e453 40.9%,#afe454 43.2%,#a4dd5d 45.5%,#abe257 47.7%,#70be86 50.0%,#65b88e 52.3%,#76c281 54.5%,#6abb8a 56.8%,#87cc74 59.1%,#5db395 61.4%,#61b691 63.6%,#c2e84e 65.9%,#f7f754 68.2%,#52ad9d 70.5%,#e2f043 72.7%,#3086c5 75.0%,#205ee6 77.3%,#8ccf70 79.5%,#2872d6 81.8%,#3288c2 84.1%,#d0ec49 86.4%,#3796b7 88.6%,#4ca9a2 90.9%,#e7f142 93.2%,#1533b5 95.5%,#0f1d8c 97.7%,#101e91 100.0%)"></i><i style="position:absolute;left:710px;top:0;width:4px;height:100%;box-shadow:inset 1px 0 rgba(0,0,12,.82);background:linear-gradient(#0a0f65 0.0%,#0e1880 2.3%,#0d177d 4.5%,#0c1474 6.8%,#0d187d 9.1%,#101f94 11.4%,#101f91 13.6%,#112198 15.9%,#142eae 18.2%,#1841c8 20.5%,#1b4cd8 22.7%,#1c53e1 25.0%,#1c51df 27.3%,#1a4ad4 29.5%,#205fe6 31.8%,#3694b9 34.1%,#51ac9d 36.4%,#2e80ca 38.6%,#2872d5 40.9%,#3a9bb2 43.2%,#2d7dcc 45.5%,#2f83c7 47.7%,#1e5aea 50.0%,#3084c6 52.3%,#2060e5 54.5%,#1943cc 56.8%,#2a77d1 59.1%,#2d7dcc 61.4%,#1535b8 63.6%,#3b9faf 65.9%,#b0e454 68.2%,#1b4fdc 70.5%,#7bc57d 72.7%,#1d59ea 75.0%,#11239e 77.3%,#348fbd 79.5%,#1329a8 81.8%,#132baa 84.1%,#3896b6 86.4%,#1b4dd9 88.6%,#256adc 90.9%,#6ebd87 93.2%,#0d187e 95.5%,#101f92 97.7%,#142dad 100.0%)"></i><i style="position:absolute;left:714px;top:0;width:4px;height:100%;box-shadow:inset 1px 0 rgba(0,0,12,.82);background:linear-gradient(#3085c5 0.0%,#1d56e6 2.3%,#205fe6 4.5%,#1a49d4 6.8%,#163abe 9.1%,#173abf 11.4%,#2469dd 13.6%,#2c7ace 15.9%,#1945ce 18.2%,#1b4fdc 20.5%,#2d7ecb 22.7%,#3a9bb2 25.0%,#3999b4 27.3%,#6abb8a 29.5%,#3187c4 31.8%,#2f82c7 34.1%,#2f83c7 36.4%,#3b9faf 38.6%,#95d468 40.9%,#c2e84e 43.2%,#a5de5c 45.5%,#3ea1ad 47.7%,#69ba8b 50.0%,#328ac1 52.3%,#2a77d1 54.5%,#266dda 56.8%,#3692ba 59.1%,#6dbd88 61.4%,#2e7fca 63.6%,#d5ed48 65.9%,#fbfb71 68.2%,#63b790 70.5%,#ceeb4a 72.7%,#b2e453 75.0%,#3591bb 77.3%,#dfef45 79.5%,#abe157 81.8%,#2e7fca 84.1%,#edf340 86.4%,#b7e652 88.6%,#3590bc 90.9%,#eff33f 93.2%,#11239f 95.5%,#142fb0 97.7%,#173abf 100.0%)"></i><i style="position:absolute;left:718px;top:0;width:4px;height:100%;box-shadow:inset 1px 0 rgba(0,0,12,.82);background:linear-gradient(#2b78d0 0.0%,#1b4edb 2.3%,#173cc2 4.5%,#132cab 6.8%,#1225a1 9.1%,#11229a 11.4%,#1946d0 13.6%,#1a4bd6 15.9%,#1840c8 18.2%,#1b4dd9 20.5%,#2163e3 22.7%,#2872d6 25.0%,#2c7ccd 27.3%,#41a3aa 29.5%,#2872d6 31.8%,#2a77d1 34.1%,#266dda 36.4%,#43a4a9 38.6%,#bde750 40.9%,#d8ee47 43.2%,#d2ec49 45.5%,#80c879 47.7%,#b4e553 50.0%,#a1db5f 52.3%,#92d36b 54.5%,#7dc67c 56.8%,#cfeb4a 59.1%,#e7f142 61.4%,#62b690 63.6%,#f9f965 65.9%,#ffffc8 68.2%,#deef45 70.5%,#fcfc89 72.7%,#fdfd9a 75.0%,#bfe84f 77.3%,#fcfc84 79.5%,#fefeba 81.8%,#caea4b 84.1%,#ffffc8 86.4%,#fcfc88 88.6%,#7fc879 90.9%,#fdfda1 93.2%,#1224a0 95.5%,#11229c 97.7%,#11229b 100.0%)"></i><i style="position:absolute;left:722px;top:0;width:3px;height:100%;box-shadow:inset 1px 0 rgba(0,0,12,.82);background:linear-gradient(#2b78d0 0.0%,#205fe6 2.3%,#173bc0 4.5%,#142eae 6.8%,#142dac 9.1%,#1226a3 11.4%,#173ec4 13.6%,#1b4eda 15.9%,#1c53e2 18.2%,#266ed9 20.5%,#2c7bce 22.7%,#2d7ecb 25.0%,#328ac1 27.3%,#55af9b 29.5%,#2a78d1 31.8%,#3186c4 34.1%,#2f83c7 36.4%,#6dbd88 38.6%,#cbea4b 40.9%,#d6ed47 43.2%,#d4ed48 45.5%,#a3dd5e 47.7%,#bae651 50.0%,#bae651 52.3%,#bbe750 54.5%,#b4e553 56.8%,#e8f142 59.1%,#f5f544 61.4%,#95d469 63.6%,#fafa6e 65.9%,#ffffc8 68.2%,#f1f43f 70.5%,#fefeb0 72.7%,#ffffc8 75.0%,#ceeb4a 77.3%,#fbfb77 79.5%,#ffffc8 81.8%,#e1f044 84.1%,#ffffc8 86.4%,#fdfda0 88.6%,#a6de5b 90.9%,#fefeb2 93.2%,#1224a0 95.5%,#101f93 97.7%,#101f91 100.0%)"></i><i style="position:absolute;left:725px;top:0;width:4px;height:100%;box-shadow:inset 1px 0 rgba(0,0,12,.82);background:linear-gradient(#1b4dda 0.0%,#1d57e6 2.3%,#1532b3 4.5%,#112198 6.8%,#102095 9.1%,#101e90 11.4%,#0f1c8b 13.6%,#1c53e1 15.9%,#1944cd 18.2%,#2975d3 20.5%,#338cbf 22.7%,#358fbc 25.0%,#3795b8 27.3%,#5cb395 29.5%,#256adc 31.8%,#2b7acf 34.1%,#3fa1ac 36.4%,#7dc67b 38.6%,#aae158 40.9%,#b0e454 43.2%,#a2dc5e 45.5%,#afe454 47.7%,#9fda61 50.0%,#59b197 52.3%,#82c977 54.5%,#a9e059 56.8%,#bae651 59.1%,#f6f648 61.4%,#90d26c 63.6%,#f8f859 65.9%,#fcfc7f 68.2%,#b0e454 70.5%,#fcfc84 72.7%,#ffffc8 75.0%,#8ed06e 77.3%,#f8f857 79.5%,#f9f962 81.8%,#5fb592 84.1%,#fafa6a 86.4%,#f9f960 88.6%,#c1e84f 90.9%,#fdfda5 93.2%,#1227a4 95.5%,#1225a1 97.7%,#1636b9 100.0%)"></i><i style="position:absolute;left:729px;top:0;width:4px;height:100%;box-shadow:inset 1px 0 rgba(0,0,12,.82);background:linear-gradient(#0f1c89 0.0%,#1534b7 2.3%,#1b4dda 4.5%,#1944cd 6.8%,#1535b7 9.1%,#1534b7 11.4%,#1c54e2 13.6%,#1f5ce8 15.9%,#1b50dd 18.2%,#2a76d2 20.5%,#2871d6 22.7%,#2b79d0 25.0%,#4ba9a2 27.3%,#c9ea4c 29.5%,#64b88f 31.8%,#7dc67b 34.1%,#c5e94d 36.4%,#c9ea4c 38.6%,#c5e94d 40.9%,#cfeb4a 43.2%,#bae651 45.5%,#ebf241 47.7%,#f5f543 50.0%,#d9ee46 52.3%,#e3f043 54.5%,#f2f43e 56.8%,#d4ec48 59.1%,#fdfd9e 61.4%,#3b9db0 63.6%,#f5f53f 65.9%,#f6f647 68.2%,#94d469 70.5%,#fcfc7e 72.7%,#ffffc8 75.0%,#71bf85 77.3%,#fcfc83 79.5%,#ecf240 81.8%,#89cd72 84.1%,#fefebe 86.4%,#fbfb76 88.6%,#b8e651 90.9%,#ffffc8 93.2%,#1639bd 95.5%,#1430b1 97.7%,#101f94 100.0%)"></i><i style="position:absolute;left:733px;top:0;width:4px;height:100%;box-shadow:inset 1px 0 rgba(0,0,12,.82);background:linear-gradient(#90d26c 0.0%,#b5e552 2.3%,#e3f043 4.5%,#d7ed47 6.8%,#c9ea4c 9.1%,#d7ed47 11.4%,#edf340 13.6%,#f5f53e 15.9%,#f1f43f 18.2%,#f5f53e 20.5%,#eaf241 22.7%,#f2f43e 25.0%,#f7f750 27.3%,#fafa6c 29.5%,#f8f858 31.8%,#f7f74f 34.1%,#f9f95f 36.4%,#f8f858 38.6%,#f5f540 40.9%,#deef45 43.2%,#f5f545 45.5%,#f6f64c 47.7%,#f6f649 50.0%,#f6f64a 52.3%,#f7f74e 54.5%,#f6f64e 56.8%,#d1ec49 59.1%,#fbfb76 61.4%,#399ab3 63.6%,#dcee46 65.9%,#9cd863 68.2%,#358fbc 70.5%,#f5f544 72.7%,#fcfc82 75.0%,#56af9a 77.3%,#ebf241 79.5%,#67ba8c 81.8%,#2c7ccd 84.1%,#f5f542 86.4%,#eef340 88.6%,#74c182 90.9%,#f6f64a 93.2%,#1636ba 95.5%,#1638bc 97.7%,#0f1e8f 100.0%)"></i><i style="position:absolute;left:737px;top:0;width:4px;height:100%;box-shadow:inset 1px 0 rgba(0,0,12,.82);background:linear-gradient(#d5ed48 0.0%,#c6e94d 2.3%,#d8ee47 4.5%,#d1ec49 6.8%,#d0ec4a 9.1%,#e2f044 11.4%,#f5f544 13.6%,#f6f648 15.9%,#f5f541 18.2%,#cfeb4a 20.5%,#c4e94d 22.7%,#ceeb4a 25.0%,#daee46 27.3%,#f3f43e 29.5%,#f4f43e 31.8%,#e4f043 34.1%,#f5f53f 36.4%,#f5f541 38.6%,#ddef45 40.9%,#b8e651 43.2%,#f5f53f 45.5%,#ebf240 47.7%,#e0f044 50.0%,#eef340 52.3%,#eff33f 54.5%,#f4f43e 56.8%,#d5ed48 59.1%,#fbfb73 61.4%,#66b98d 63.6%,#c7e94c 65.9%,#cdeb4b 68.2%,#3591bb 70.5%,#d6ed47 72.7%,#fbfb75 75.0%,#58b098 77.3%,#d6ed48 79.5%,#7bc57d 81.8%,#2a77d1 84.1%,#eef340 86.4%,#f7f752 88.6%,#85cb75 90.9%,#e5f143 93.2%,#1225a2 95.5%,#173abf 97.7%,#102096 100.0%)"></i><i style="position:absolute;left:741px;top:0;width:3px;height:100%;box-shadow:inset 1px 0 rgba(0,0,12,.82);background:linear-gradient(#fafa69 0.0%,#f6f648 2.3%,#e8f242 4.5%,#f4f43e 6.8%,#f5f543 9.1%,#f6f646 11.4%,#fbfb70 13.6%,#fafa6c 15.9%,#f8f859 18.2%,#c9ea4c 20.5%,#c3e84e 22.7%,#cdeb4a 25.0%,#bfe74f 27.3%,#cdeb4b 29.5%,#d8ee47 31.8%,#cfeb4a 34.1%,#d6ed48 36.4%,#f5f53f 38.6%,#f5f53e 40.9%,#cbea4b 43.2%,#f5f542 45.5%,#e5f143 47.7%,#eef340 50.0%,#e8f142 52.3%,#cfeb4a 54.5%,#e6f142 56.8%,#f6f64d 59.1%,#fefeb4 61.4%,#d5ed48 63.6%,#96d567 65.9%,#f9f962 68.2%,#90d26c 70.5%,#bbe750 72.7%,#fbfb71 75.0%,#58b098 77.3%,#ddef45 79.5%,#bee750 81.8%,#5cb395 84.1%,#f7f752 86.4%,#fdfd9c 88.6%,#c7ea4c 90.9%,#e6f142 93.2%,#0c1575 95.5%,#1534b6 97.7%,#1328a6 100.0%)"></i><i style="position:absolute;left:744px;top:0;width:4px;height:100%;box-shadow:inset 1px 0 rgba(0,0,12,.82);background:linear-gradient(#e1f044 0.0%,#d3ec48 2.3%,#d3ec48 4.5%,#b4e553 6.8%,#b8e652 9.1%,#d6ed47 11.4%,#bfe74f 13.6%,#a5de5c 15.9%,#9ad765 18.2%,#399bb3 20.5%,#3187c3 22.7%,#3b9faf 25.0%,#7bc57c 27.3%,#65b88e 29.5%,#67b98c 31.8%,#a2dc5e 34.1%,#7bc57c 36.4%,#3b9db0 38.6%,#3084c6 40.9%,#2e81c9 43.2%,#3ea1ad 45.5%,#2975d3 47.7%,#41a3aa 50.0%,#2b78d0 52.3%,#2a76d2 54.5%,#3896b6 56.8%,#3794b8 59.1%,#f5f53e 61.4%,#72c084 63.6%,#2d7ecb 65.9%,#dfef45 68.2%,#348ebd 70.5%,#3b9faf 72.7%,#f6f646 75.0%,#3898b5 77.3%,#7ac57d 79.5%,#b9e651 81.8%,#1d57e6 84.1%,#8ed06e 86.4%,#f9f962 88.6%,#5ab296 90.9%,#b1e454 93.2%,#0d187e 95.5%,#0e1880 97.7%,#0d167a 100.0%)"></i><i style="position:absolute;left:748px;top:0;width:4px;height:100%;box-shadow:inset 1px 0 rgba(0,0,12,.82);background:linear-gradient(#183fc5 0.0%,#1945ce 2.3%,#173ec5 4.5%,#173cc1 6.8%,#173cc2 9.1%,#183fc6 11.4%,#1b4dd9 13.6%,#1c53e2 15.9%,#1535b8 18.2%,#0f1d8c 20.5%,#0f1d8e 22.7%,#142dad 25.0%,#1840c7 27.3%,#173dc3 29.5%,#1d56e6 31.8%,#1b4dd9 34.1%,#1d56e6 36.4%,#1a4bd6 38.6%,#1840c7 40.9%,#1a4ad5 43.2%,#2d7dcc 45.5%,#2469dd 47.7%,#2770d7 50.0%,#2871d6 52.3%,#2975d3 54.5%,#348fbd 56.8%,#44a4a8 59.1%,#e8f142 61.4%,#63b78f 63.6%,#52ad9d 65.9%,#f7f751 68.2%,#48a7a5 70.5%,#72c084 72.7%,#fdfd93 75.0%,#70bf85 77.3%,#b5e552 79.5%,#cdeb4a 81.8%,#3186c4 84.1%,#e9f241 86.4%,#fdfdab 88.6%,#95d468 90.9%,#e1f044 93.2%,#0f1c89 95.5%,#0f1d8c 97.7%,#101e90 100.0%)"></i><i style="position:absolute;left:752px;top:0;width:4px;height:100%;box-shadow:inset 1px 0 rgba(0,0,12,.82);background:linear-gradient(#1843cb 0.0%,#1d58e9 2.3%,#1b4fdc 4.5%,#1d59ea 6.8%,#1f5de7 9.1%,#1c51df 11.4%,#1d56e5 13.6%,#1f5ee7 15.9%,#1947d1 18.2%,#1531b2 20.5%,#1841c9 22.7%,#205ee6 25.0%,#2975d3 27.3%,#2f82c7 29.5%,#47a6a6 31.8%,#2871d6 34.1%,#266ed9 36.4%,#2366df 38.6%,#1e5be9 40.9%,#2161e4 43.2%,#3897b6 45.5%,#3795b8 47.7%,#2f82c8 50.0%,#338cc0 52.3%,#3591bb 54.5%,#3896b6 56.8%,#4daaa1 59.1%,#cfeb4a 61.4%,#3a9db1 63.6%,#a3dd5d 65.9%,#fafa6d 68.2%,#93d36a 70.5%,#b6e552 72.7%,#fefeae 75.0%,#6bbb8a 77.3%,#cdeb4a 79.5%,#c7ea4c 81.8%,#3795b8 84.1%,#f6f648 86.4%,#fefebd 88.6%,#a7df5a 90.9%,#f6f648 93.2%,#0f1d8d 95.5%,#101f93 97.7%,#102095 100.0%)"></i><i style="position:absolute;left:756px;top:0;width:4px;height:100%;box-shadow:inset 1px 0 rgba(0,0,12,.82);background:linear-gradient(#1842ca 0.0%,#276fd8 2.3%,#205fe6 4.5%,#2a76d2 6.8%,#2f83c7 9.1%,#256bdb 11.4%,#1b4edb 13.6%,#1a49d4 15.9%,#1b50de 18.2%,#1841c8 20.5%,#1f5de8 22.7%,#348ebd 25.0%,#4ba9a3 27.3%,#9eda61 29.5%,#b7e652 31.8%,#50ac9e 34.1%,#3288c2 36.4%,#3188c3 38.6%,#2f83c7 40.9%,#2b7acf 43.2%,#3a9bb2 45.5%,#55af9b 47.7%,#3591bb 50.0%,#3692ba 52.3%,#40a2ab 54.5%,#3b9faf 56.8%,#3796b7 59.1%,#b2e453 61.4%,#2f82c8 63.6%,#c4e94d 65.9%,#fcfc8b 68.2%,#d5ed48 70.5%,#e8f142 72.7%,#fefeae 75.0%,#63b790 77.3%,#e8f142 79.5%,#daee46 81.8%,#3a9db1 84.1%,#f6f64d 86.4%,#ffffc8 88.6%,#b9e651 90.9%,#f9f961 93.2%,#0f1c8b 95.5%,#112199 97.7%,#101f93 100.0%)"></i><i style="position:absolute;left:760px;top:0;width:3px;height:100%;box-shadow:inset 1px 0 rgba(0,0,12,.82);background:linear-gradient(#11239e 0.0%,#1b4dd9 2.3%,#1a48d2 4.5%,#1637bb 6.8%,#1227a4 9.1%,#0f1d8d 11.4%,#0f1c89 13.6%,#0e1a86 15.9%,#132cab 18.2%,#0f1d8d 20.5%,#0f1d8c 22.7%,#173abf 25.0%,#2c7bcd 27.3%,#3187c3 29.5%,#1f5de7 31.8%,#2c7ccd 34.1%,#2771d7 36.4%,#1b4fdc 38.6%,#1a49d3 40.9%,#2367df 43.2%,#205fe6 45.5%,#1e5aea 47.7%,#1946d0 50.0%,#1637bb 52.3%,#1945ce 54.5%,#1f5ce8 56.8%,#266ed9 59.1%,#76c281 61.4%,#3b9faf 63.6%,#4caaa1 65.9%,#f7f74f 68.2%,#87cc74 70.5%,#a8df5a 72.7%,#fcfc8b 75.0%,#81c978 77.3%,#84ca76 79.5%,#d6ed48 81.8%,#3591bb 84.1%,#c8ea4c 86.4%,#fbfb72 88.6%,#7cc67c 90.9%,#a8e059 93.2%,#101f91 95.5%,#173abf 97.7%,#1639bd 100.0%)"></i><i style="position:absolute;left:763px;top:0;width:4px;height:100%;box-shadow:inset 1px 0 rgba(0,0,12,.82);background:linear-gradient(#2f82c8 0.0%,#2e80ca 2.3%,#2366df 4.5%,#173bc0 6.8%,#142eaf 9.1%,#1639bd 11.4%,#1841c8 13.6%,#1f5ee7 15.9%,#2264e1 18.2%,#2162e3 20.5%,#1d55e5 22.7%,#1c53e2 25.0%,#2264e1 27.3%,#3694b9 29.5%,#2265e1 31.8%,#2d7fcb 34.1%,#61b691 36.4%,#47a6a6 38.6%,#3590bc 40.9%,#3898b5 43.2%,#6bbb8a 45.5%,#74c182 47.7%,#3187c3 50.0%,#3a9bb2 52.3%,#74c182 54.5%,#c0e84f 56.8%,#bce750 59.1%,#f5f541 61.4%,#66b88d 63.6%,#90d16d 65.9%,#f9f961 68.2%,#c3e84e 70.5%,#d3ec49 72.7%,#ffffc8 75.0%,#f5f53e 77.3%,#c8ea4c 79.5%,#fcfc78 81.8%,#d1ec49 84.1%,#f6f647 86.4%,#ffffc8 88.6%,#e5f143 90.9%,#f5f542 93.2%,#142fb0 95.5%,#112198 97.7%,#102095 100.0%)"></i><i style="position:absolute;left:767px;top:0;width:4px;height:100%;box-shadow:inset 1px 0 rgba(0,0,12,.82);background:linear-gradient(#338cbf 0.0%,#2060e5 2.3%,#1d55e5 4.5%,#1329a8 6.8%,#11229b 9.1%,#1535b7 11.4%,#173cc2 13.6%,#1c52e1 15.9%,#1a49d3 18.2%,#1947d1 20.5%,#1a4ad5 22.7%,#1943cb 25.0%,#173bc0 27.3%,#1f5ce8 29.5%,#1a4bd6 31.8%,#2a76d2 34.1%,#3b9faf 36.4%,#3b9eb0 38.6%,#399ab3 40.9%,#41a3aa 43.2%,#76c281 45.5%,#80c879 47.7%,#3794b8 50.0%,#3ea1ad 52.3%,#8ace71 54.5%,#ddef45 56.8%,#c9ea4c 59.1%,#f7f74f 61.4%,#86cc74 63.6%,#8bce71 65.9%,#f6f64d 68.2%,#b5e552 70.5%,#cdeb4a 72.7%,#ffffc8 75.0%,#f7f74f 77.3%,#afe454 79.5%,#fdfda2 81.8%,#e0f044 84.1%,#eef340 86.4%,#ffffc8 88.6%,#f6f64e 90.9%,#f6f64b 93.2%,#1532b4 95.5%,#0f1d8c 97.7%,#112198 100.0%)"></i><i style="position:absolute;left:771px;top:0;width:4px;height:100%;box-shadow:inset 1px 0 rgba(0,0,12,.82);background:linear-gradient(#0d177c 0.0%,#080850 2.3%,#090d5f 4.5%,#080850 6.8%,#080850 9.1%,#080850 11.4%,#080850 13.6%,#080850 15.9%,#080850 18.2%,#080850 20.5%,#080850 22.7%,#080850 25.0%,#080850 27.3%,#090b5b 29.5%,#090b5a 31.8%,#0e1a83 34.1%,#0d1679 36.4%,#0d167a 38.6%,#0f1d8c 40.9%,#11239f 43.2%,#1329a7 45.5%,#11239e 47.7%,#0e1a84 50.0%,#0b136f 52.3%,#0f1c8b 54.5%,#173cc2 56.8%,#1533b5 59.1%,#1d58e8 61.4%,#1636ba 63.6%,#112198 65.9%,#1637bb 68.2%,#1225a2 70.5%,#173cc2 72.7%,#338dbf 75.0%,#173ec4 77.3%,#0e1a85 79.5%,#1f5ee7 81.8%,#102096 84.1%,#1637bb 86.4%,#56af9a 88.6%,#2263e2 90.9%,#1c55e4 93.2%,#132cab 95.5%,#0f1c89 97.7%,#132cac 100.0%)"></i><i style="position:absolute;left:775px;top:0;width:4px;height:100%;box-shadow:inset 1px 0 rgba(0,0,12,.82);background:linear-gradient(#0d177c 0.0%,#1228a5 2.3%,#102096 4.5%,#0d177d 6.8%,#0a1067 9.1%,#090b59 11.4%,#101f91 13.6%,#11239e 15.9%,#080850 18.2%,#090c5e 20.5%,#0a0e61 22.7%,#0c1472 25.0%,#101f92 27.3%,#132baa 29.5%,#1944cd 31.8%,#101f93 34.1%,#173dc3 36.4%,#183fc6 38.6%,#173ec5 40.9%,#1a49d4 43.2%,#2a77d1 45.5%,#1944cc 47.7%,#1945ce 50.0%,#11239d 52.3%,#1535b8 54.5%,#2161e4 56.8%,#1b4eda 59.1%,#3b9eaf 61.4%,#1b4eda 63.6%,#142dad 65.9%,#2872d6 68.2%,#1d58e9 70.5%,#1d56e6 72.7%,#2e81c9 75.0%,#1b4dd9 77.3%,#1842ca 79.5%,#2a76d2 81.8%,#1224a1 84.1%,#1a4bd7 86.4%,#6cbc89 88.6%,#1c52df 90.9%,#2265e1 93.2%,#112199 95.5%,#0e1981 97.7%,#132ba9 100.0%)"></i><i style="position:absolute;left:779px;top:0;width:3px;height:100%;box-shadow:inset 1px 0 rgba(0,0,12,.82);background:linear-gradient(#0a0f64 0.0%,#0a0d60 2.3%,#090c5e 4.5%,#0a1067 6.8%,#0c1474 9.1%,#0b1069 11.4%,#080850 13.6%,#080851 15.9%,#0a0f66 18.2%,#080850 20.5%,#080850 22.7%,#090c5c 25.0%,#1328a6 27.3%,#1534b6 29.5%,#142dad 31.8%,#0e1b86 34.1%,#0e1980 36.4%,#0d177c 38.6%,#0f1d8d 40.9%,#1533b5 43.2%,#266dda 45.5%,#1534b7 47.7%,#102095 50.0%,#101e90 52.3%,#102197 54.5%,#1944cd 56.8%,#1d56e6 59.1%,#256bdc 61.4%,#1f5ee7 63.6%,#1535b8 65.9%,#2367df 68.2%,#1946d0 70.5%,#1535b8 72.7%,#173cc1 75.0%,#0d187e 77.3%,#0d1678 79.5%,#0f1e8f 81.8%,#0b116c 84.1%,#1533b5 86.4%,#3694b9 88.6%,#1f5ee7 90.9%,#1944cc 93.2%,#0e1982 95.5%,#0d187d 97.7%,#0e1981 100.0%)"></i><i style="position:absolute;left:782px;top:0;width:4px;height:100%;box-shadow:inset 1px 0 rgba(0,0,12,.82);background:linear-gradient(#080851 0.0%,#090b5a 2.3%,#080955 4.5%,#090b5b 6.8%,#0a0e63 9.1%,#080955 11.4%,#080850 13.6%,#080850 15.9%,#080850 18.2%,#080850 20.5%,#080850 22.7%,#090b5b 25.0%,#11229b 27.3%,#132baa 29.5%,#101e90 31.8%,#0c1370 34.1%,#0b1068 36.4%,#0a0e63 38.6%,#0d1678 40.9%,#1227a4 43.2%,#1b4fdc 45.5%,#11239d 47.7%,#0f1d8e 50.0%,#0f1c8a 52.3%,#101f91 54.5%,#163abe 56.8%,#183fc6 59.1%,#1b4fdc 61.4%,#1b4edb 63.6%,#102197 65.9%,#2161e4 68.2%,#173cc1 70.5%,#0f1d8e 72.7%,#1431b2 75.0%,#0b126e 77.3%,#090c5c 79.5%,#0f1d8e 81.8%,#090b59 84.1%,#1225a1 86.4%,#2f83c7 88.6%,#1943cc 90.9%,#11239f 93.2%,#0d167a 95.5%,#0d177b 97.7%,#0f1e8f 100.0%)"></i><i style="position:absolute;left:786px;top:0;width:4px;height:100%;box-shadow:inset 1px 0 rgba(0,0,12,.82);background:linear-gradient(#0d177d 0.0%,#132baa 2.3%,#1430b1 4.5%,#163abf 6.8%,#173bc0 9.1%,#1533b5 11.4%,#1226a4 13.6%,#1329a8 15.9%,#0e1a84 18.2%,#0f1e8f 20.5%,#1224a0 22.7%,#1945ce 25.0%,#2a78d1 27.3%,#3795b7 29.5%,#2d7dcc 31.8%,#2d7dcc 34.1%,#348ebe 36.4%,#348fbd 38.6%,#3b9eb0 40.9%,#81c978 43.2%,#b2e453 45.5%,#89cd72 47.7%,#b4e553 50.0%,#b1e454 52.3%,#b5e552 54.5%,#caea4c 56.8%,#5db395 59.1%,#f6f648 61.4%,#eef340 63.6%,#348dbe 65.9%,#fcfc7d 68.2%,#f6f649 70.5%,#43a4a9 72.7%,#fafa6e 75.0%,#9bd864 77.3%,#4eaba0 79.5%,#f7f753 81.8%,#2974d4 84.1%,#b6e552 86.4%,#fefeb0 88.6%,#89cd72 90.9%,#96d568 93.2%,#0d177c 95.5%,#0d177c 97.7%,#1228a6 100.0%)"></i><i style="position:absolute;left:790px;top:0;width:4px;height:100%;box-shadow:inset 1px 0 rgba(0,0,12,.82);background:linear-gradient(#0c1370 0.0%,#132baa 2.3%,#1636b9 4.5%,#2265e1 6.8%,#2e81c9 9.1%,#2a78d1 11.4%,#1b4cd8 13.6%,#1b4fdc 15.9%,#1532b4 18.2%,#101e90 20.5%,#0f1e8f 22.7%,#1637bb 25.0%,#246add 27.3%,#399ab4 29.5%,#3590bb 31.8%,#bbe750 34.1%,#d5ed48 36.4%,#cbeb4b 38.6%,#c0e84f 40.9%,#bee750 43.2%,#5fb493 45.5%,#dcee46 47.7%,#cbea4b 50.0%,#caea4b 52.3%,#ceeb4a 54.5%,#cbea4b 56.8%,#57b099 59.1%,#f9f961 61.4%,#f6f649 63.6%,#87cc74 65.9%,#fcfc85 68.2%,#fbfb71 70.5%,#a4dd5d 72.7%,#fcfc80 75.0%,#f8f85d 77.3%,#97d667 79.5%,#f8f859 81.8%,#4ca9a2 84.1%,#d4ed48 86.4%,#fbfb70 88.6%,#8dd06f 90.9%,#e1f044 93.2%,#102095 95.5%,#0f1c8b 97.7%,#102097 100.0%)"></i><i style="position:absolute;left:794px;top:0;width:4px;height:100%;box-shadow:inset 1px 0 rgba(0,0,12,.82);background:linear-gradient(#080850 0.0%,#0d187d 2.3%,#173dc4 4.5%,#1b4cd8 6.8%,#1c51df 9.1%,#256cdb 11.4%,#276fd8 13.6%,#2770d7 15.9%,#1639bd 18.2%,#0e1a84 20.5%,#0e1b87 22.7%,#173cc2 25.0%,#2c7ccd 27.3%,#338cbf 29.5%,#3a9db1 31.8%,#67b98c 34.1%,#7dc67c 36.4%,#95d469 38.6%,#9ad764 40.9%,#9bd864 43.2%,#b4e553 45.5%,#74c182 47.7%,#ecf240 50.0%,#f5f545 52.3%,#cbea4b 54.5%,#a5de5c 56.8%,#54ae9b 59.1%,#f2f43e 61.4%,#d4ed48 63.6%,#7fc879 65.9%,#f9f963 68.2%,#fafa6a 70.5%,#bae651 72.7%,#fefeb2 75.0%,#f7f752 77.3%,#bde750 79.5%,#f5f546 81.8%,#3085c6 84.1%,#bae651 86.4%,#fafa68 88.6%,#3b9faf 90.9%,#d4ec48 93.2%,#0e1880 95.5%,#101f94 97.7%,#102097 100.0%)"></i><i style="position:absolute;left:798px;top:0;width:3px;height:100%;box-shadow:inset 1px 0 rgba(0,0,12,.82);background:linear-gradient(#0b116a 0.0%,#0b1068 2.3%,#1227a4 4.5%,#1535b8 6.8%,#1430b1 9.1%,#1533b5 11.4%,#1a4bd7 13.6%,#1946d0 15.9%,#1637ba 18.2%,#142eae 20.5%,#11229c 22.7%,#1639bd 25.0%,#2a77d1 27.3%,#3898b5 29.5%,#3a9db1 31.8%,#3b9eb0 34.1%,#47a6a6 36.4%,#53ad9c 38.6%,#5cb395 40.9%,#6dbd88 43.2%,#7cc67c 45.5%,#54ae9b 47.7%,#d3ec48 50.0%,#c7e94c 52.3%,#a7df5a 54.5%,#c1e84f 56.8%,#91d26b 59.1%,#f7f755 61.4%,#f6f64d 63.6%,#5ab296 65.9%,#fafa6b 68.2%,#fbfb71 70.5%,#90d26c 72.7%,#fcfc7c 75.0%,#cdeb4a 77.3%,#7fc77a 79.5%,#f7f74f 81.8%,#348ebe 84.1%,#9dd962 86.4%,#fafa68 88.6%,#3da0ae 90.9%,#d5ed48 93.2%,#1226a3 95.5%,#132ba9 97.7%,#101e90 100.0%)"></i><i style="position:absolute;left:801px;top:0;width:4px;height:100%;box-shadow:inset 1px 0 rgba(0,0,12,.82);background:linear-gradient(#0c1472 0.0%,#080850 2.3%,#0a0e63 4.5%,#0c1474 6.8%,#0b126d 9.1%,#090d5f 11.4%,#0e1b86 13.6%,#0e1a84 15.9%,#11229a 18.2%,#1532b4 20.5%,#11229b 22.7%,#132aa9 25.0%,#205ee6 27.3%,#2e7fca 29.5%,#3084c6 31.8%,#2d7ecb 34.1%,#2d7dcc 36.4%,#2c7ccd 38.6%,#2e80ca 40.9%,#338cbf 43.2%,#3896b6 45.5%,#3999b4 47.7%,#87cc73 50.0%,#399bb3 52.3%,#3fa2ac 54.5%,#c6e94d 56.8%,#b9e651 59.1%,#f6f64d 61.4%,#f9f962 63.6%,#3897b6 65.9%,#f9f963 68.2%,#f9f960 70.5%,#3591bb 72.7%,#f6f64d 75.0%,#62b691 77.3%,#3693b9 79.5%,#f7f74f 81.8%,#3591bb 84.1%,#54ae9c 86.4%,#f8f857 88.6%,#358fbc 90.9%,#b0e454 93.2%,#173bc0 95.5%,#1639bd 97.7%,#101f94 100.0%)"></i><i style="position:absolute;left:805px;top:0;width:4px;height:100%;box-shadow:inset 1px 0 rgba(0,0,12,.82);background:linear-gradient(#0f1c8b 0.0%,#0f1c89 2.3%,#0a0f65 4.5%,#0b1068 6.8%,#0e1982 9.1%,#112198 11.4%,#0f1c8a 13.6%,#1532b4 15.9%,#1843cb 18.2%,#183fc5 20.5%,#1843cb 22.7%,#2468de 25.0%,#4eaaa0 27.3%,#2f82c8 29.5%,#7dc67b 31.8%,#a8df5a 34.1%,#81c978 36.4%,#88cd73 38.6%,#80c879 40.9%,#6cbc88 43.2%,#e3f043 45.5%,#d5ed48 47.7%,#ceeb4a 50.0%,#76c281 52.3%,#9fdb60 54.5%,#f6f64c 56.8%,#f2f43e 59.1%,#f5f543 61.4%,#fdfdac 63.6%,#c9ea4c 65.9%,#fdfd9c 68.2%,#fbfb72 70.5%,#399bb3 72.7%,#fcfc7c 75.0%,#f6f649 77.3%,#d1ec49 79.5%,#fdfda9 81.8%,#c4e94e 84.1%,#b4e553 86.4%,#fcfc89 88.6%,#afe454 90.9%,#afe454 93.2%,#132cac 95.5%,#173dc3 97.7%,#1535b8 100.0%)"></i><i style="position:absolute;left:809px;top:0;width:4px;height:100%;box-shadow:inset 1px 0 rgba(0,0,12,.82);background:linear-gradient(#173cc2 0.0%,#101f94 2.3%,#0d177d 4.5%,#0e1981 6.8%,#102197 9.1%,#1431b2 11.4%,#1842ca 13.6%,#142eaf 15.9%,#163abe 18.2%,#1f5ee7 20.5%,#1d55e4 22.7%,#1c52e0 25.0%,#2366e0 27.3%,#2872d5 29.5%,#8ed06e 31.8%,#3795b8 34.1%,#3898b5 36.4%,#3999b4 38.6%,#40a2ab 40.9%,#7cc67c 43.2%,#abe157 45.5%,#cbea4b 47.7%,#b9e651 50.0%,#a7df5a 52.3%,#c3e94e 54.5%,#f5f545 56.8%,#bbe750 59.1%,#f5f541 61.4%,#ffffc8 63.6%,#ddef45 65.9%,#f9f966 68.2%,#fcfc8e 70.5%,#64b88f 72.7%,#f9f967 75.0%,#f6f64c 77.3%,#8bce70 79.5%,#ffffc8 81.8%,#ecf240 84.1%,#7ac47e 86.4%,#fbfb72 88.6%,#a4dd5d 90.9%,#c3e84e 93.2%,#11239f 95.5%,#1639bd 97.7%,#1636b9 100.0%)"></i><i style="position:absolute;left:813px;top:0;width:4px;height:100%;box-shadow:inset 1px 0 rgba(0,0,12,.82);background:linear-gradient(#2b79cf 0.0%,#1841c9 2.3%,#1533b5 4.5%,#1224a0 6.8%,#132baa 9.1%,#1a48d2 11.4%,#2f83c7 13.6%,#2c7ace 15.9%,#276fd8 18.2%,#3289c2 20.5%,#3590bc 22.7%,#3590bc 25.0%,#348fbd 27.3%,#3188c3 29.5%,#80c879 31.8%,#52ad9d 34.1%,#74c183 36.4%,#7cc67c 38.6%,#74c183 40.9%,#84ca76 43.2%,#b0e454 45.5%,#d5ed48 47.7%,#b2e453 50.0%,#c7e94d 52.3%,#caea4b 54.5%,#dbee46 56.8%,#8bcf70 59.1%,#f5f545 61.4%,#fefeb1 63.6%,#f6f648 65.9%,#fcfc7c 68.2%,#ffffc8 70.5%,#c5e94d 72.7%,#fdfda8 75.0%,#fdfda2 77.3%,#99d765 79.5%,#fefec2 81.8%,#f9f962 84.1%,#bee74f 86.4%,#ffffc8 88.6%,#f8f859 90.9%,#f4f43e 93.2%,#1430b0 95.5%,#173bc0 97.7%,#132bab 100.0%)"></i><i style="position:absolute;left:817px;top:0;width:3px;height:100%;box-shadow:inset 1px 0 rgba(0,0,12,.82);background:linear-gradient(#2e80ca 0.0%,#1b4dd9 2.3%,#173bc0 4.5%,#102096 6.8%,#11229b 9.1%,#1947d0 11.4%,#2e81c9 13.6%,#399ab4 15.9%,#2d7dcc 18.2%,#2d7dcc 20.5%,#3897b6 22.7%,#4aa8a3 25.0%,#3b9faf 27.3%,#3085c5 29.5%,#3ea1ac 31.8%,#4ca9a1 34.1%,#87cc74 36.4%,#8ccf70 38.6%,#6abb8a 40.9%,#5fb493 43.2%,#a0db60 45.5%,#b8e651 47.7%,#96d567 50.0%,#b7e552 52.3%,#b3e553 54.5%,#bde750 56.8%,#6fbe86 59.1%,#f4f43e 61.4%,#fdfd93 63.6%,#f6f649 65.9%,#fbfb72 68.2%,#ffffc8 70.5%,#d0ec49 72.7%,#fefeb8 75.0%,#ffffc8 77.3%,#8ace71 79.5%,#fdfda2 81.8%,#fafa6b 84.1%,#bce750 86.4%,#ffffc8 88.6%,#fbfb6f 90.9%,#f5f540 93.2%,#1430b1 95.5%,#1533b5 97.7%,#11229a 100.0%)"></i><i style="position:absolute;left:820px;top:0;width:4px;height:100%;box-shadow:inset 1px 0 rgba(0,0,12,.82);background:linear-gradient(#1843cb 0.0%,#1842ca 2.3%,#102097 4.5%,#0a0e61 6.8%,#0c1474 9.1%,#1534b6 11.4%,#142eae 13.6%,#1e5aea 15.9%,#1947d1 18.2%,#173abf 20.5%,#1c53e1 22.7%,#2872d6 25.0%,#2973d4 27.3%,#1b50dd 29.5%,#1b50dd 31.8%,#276fd8 34.1%,#40a2ab 36.4%,#3898b5 38.6%,#2f83c7 40.9%,#348fbd 43.2%,#85cb75 45.5%,#45a5a7 47.7%,#a2dc5e 50.0%,#67b98d 52.3%,#6bbb8a 54.5%,#b0e454 56.8%,#51ac9e 59.1%,#dfef45 61.4%,#fcfc8f 63.6%,#d9ee47 65.9%,#f5f543 68.2%,#fcfc8e 70.5%,#6abb8a 72.7%,#fbfb71 75.0%,#fefeb3 77.3%,#65b88e 79.5%,#fdfda8 81.8%,#f8f85a 84.1%,#3897b6 86.4%,#f9f960 88.6%,#d0ec4a 90.9%,#a3dd5e 93.2%,#0f1d8d 95.5%,#0f1d8d 97.7%,#0e1b87 100.0%)"></i><i style="position:absolute;left:824px;top:0;width:4px;height:100%;box-shadow:inset 1px 0 rgba(0,0,12,.82);background:linear-gradient(#1c54e3 0.0%,#348fbd 2.3%,#1947d1 4.5%,#1a4ad5 6.8%,#2265e1 9.1%,#2975d3 11.4%,#2b7acf 13.6%,#47a6a5 15.9%,#3898b5 18.2%,#3084c6 20.5%,#3796b7 22.7%,#3a9bb2 25.0%,#328ac1 27.3%,#348dbe 29.5%,#338bc0 31.8%,#9ad764 34.1%,#a3dd5e 36.4%,#b0e454 38.6%,#d2ec49 40.9%,#f5f541 43.2%,#f5f541 45.5%,#e9f241 47.7%,#f9f960 50.0%,#fbfb71 52.3%,#f9f963 54.5%,#f7f74f 56.8%,#81c978 59.1%,#f9f965 61.4%,#ffffc8 63.6%,#fbfb6f 65.9%,#fefeb1 68.2%,#ffffc8 70.5%,#d6ed47 72.7%,#ffffc8 75.0%,#ffffc8 77.3%,#d6ed47 79.5%,#fefeb2 81.8%,#ffffc8 84.1%,#bce750 86.4%,#fefeb3 88.6%,#f6f64b 90.9%,#f6f648 93.2%,#0c1473 95.5%,#142dac 97.7%,#1224a0 100.0%)"></i><i style="position:absolute;left:828px;top:0;width:4px;height:100%;box-shadow:inset 1px 0 rgba(0,0,12,.82);background:linear-gradient(#0b1068 0.0%,#0a0e61 2.3%,#080a56 4.5%,#0a0f66 6.8%,#0c1474 9.1%,#0b126e 11.4%,#0c1473 13.6%,#090b59 15.9%,#090d5f 18.2%,#090d5f 20.5%,#0d177b 22.7%,#0e1880 25.0%,#0a0e63 27.3%,#080850 29.5%,#0a0f65 31.8%,#0f1d8c 34.1%,#0d187f 36.4%,#0f1e8e 38.6%,#1531b3 40.9%,#1840c7 43.2%,#1842ca 45.5%,#1840c7 47.7%,#1d57e7 50.0%,#276fd8 52.3%,#2366e0 54.5%,#1d57e7 56.8%,#112198 59.1%,#1639bd 61.4%,#48a7a5 63.6%,#2e7fca 65.9%,#3794b8 68.2%,#8ace71 70.5%,#1534b6 72.7%,#2a76d2 75.0%,#79c47f 77.3%,#1944cc 79.5%,#3ea1ad 81.8%,#49a8a4 84.1%,#1329a7 86.4%,#2263e2 88.6%,#0f1c8a 90.9%,#132baa 93.2%,#0c1576 95.5%,#11229b 97.7%,#1328a6 100.0%)"></i><i style="position:absolute;left:832px;top:0;width:4px;height:100%;box-shadow:inset 1px 0 rgba(0,0,12,.82);background:linear-gradient(#11229c 0.0%,#0e1982 2.3%,#101f91 4.5%,#11239f 6.8%,#11239e 9.1%,#0f1e8f 11.4%,#112198 13.6%,#0b116b 15.9%,#0c1576 18.2%,#0f1c8b 20.5%,#132baa 22.7%,#1532b3 25.0%,#11239f 27.3%,#11229a 29.5%,#142faf 31.8%,#1532b3 34.1%,#1431b2 36.4%,#1637bb 38.6%,#1a48d3 40.9%,#1d57e7 43.2%,#1d58e9 45.5%,#276fd8 47.7%,#2468de 50.0%,#338dbf 52.3%,#3796b7 54.5%,#42a4a9 56.8%,#2366e0 59.1%,#2770d7 61.4%,#c2e84e 63.6%,#6cbc88 65.9%,#78c37f 68.2%,#deef45 70.5%,#2469dd 72.7%,#44a5a8 75.0%,#bee750 77.3%,#2a76d2 79.5%,#a2dc5e 81.8%,#ade356 84.1%,#1c51de 86.4%,#3b9eb0 88.6%,#1638bc 90.9%,#173dc2 93.2%,#0f1c89 95.5%,#11239d 97.7%,#132ba9 100.0%)"></i><i style="position:absolute;left:836px;top:0;width:3px;height:100%;box-shadow:inset 1px 0 rgba(0,0,12,.82);background:linear-gradient(#0f1c89 0.0%,#101f94 2.3%,#102095 4.5%,#11219a 6.8%,#0f1b88 9.1%,#0b116a 11.4%,#0b136f 13.6%,#0a0d60 15.9%,#090d5f 18.2%,#0f1d8c 20.5%,#11239f 22.7%,#1226a4 25.0%,#1329a7 27.3%,#1b4fdd 29.5%,#173ec4 31.8%,#101f91 34.1%,#1532b4 36.4%,#11239e 38.6%,#112199 40.9%,#173bc0 43.2%,#1534b6 45.5%,#2366e0 47.7%,#1534b6 50.0%,#2162e3 52.3%,#2b79cf 54.5%,#3b9faf 56.8%,#3590bc 59.1%,#45a5a7 61.4%,#c7e94c 63.6%,#5bb296 65.9%,#41a2ab 68.2%,#d3ec48 70.5%,#2975d3 72.7%,#3796b7 75.0%,#56af9a 77.3%,#1f5de8 79.5%,#3693b9 81.8%,#59b198 84.1%,#173ec4 86.4%,#3188c3 88.6%,#1b4fdc 90.9%,#1224a0 93.2%,#142faf 95.5%,#1636b9 97.7%,#132baa 100.0%)"></i><i style="position:absolute;left:839px;top:0;width:4px;height:100%;box-shadow:inset 1px 0 rgba(0,0,12,.82);background:linear-gradient(#82c977 0.0%,#b6e552 2.3%,#90d26c 4.5%,#d3ec48 6.8%,#eaf241 9.1%,#c7e94d 11.4%,#74c182 13.6%,#2e80c9 15.9%,#3591bb 18.2%,#7dc77b 20.5%,#84ca76 22.7%,#94d46a 25.0%,#b7e552 27.3%,#d7ed47 29.5%,#c0e84f 31.8%,#59b197 34.1%,#2d7fcb 36.4%,#2974d4 38.6%,#2366e0 40.9%,#1b50de 43.2%,#2265e1 45.5%,#266ed9 47.7%,#1c53e1 50.0%,#1c53e1 52.3%,#1d58e9 54.5%,#44a5a8 56.8%,#9dd963 59.1%,#3795b8 61.4%,#85cb75 63.6%,#2f81c8 65.9%,#2a77d1 68.2%,#8ace71 70.5%,#266ed9 72.7%,#4eaaa0 75.0%,#6ebd87 77.3%,#11239e 79.5%,#1f5de7 81.8%,#2c7ccd 84.1%,#1842ca 86.4%,#348fbd 88.6%,#1d56e5 90.9%,#132aa9 93.2%,#132baa 95.5%,#101f92 97.7%,#0f1c8a 100.0%)"></i><i style="position:absolute;left:843px;top:0;width:4px;height:100%;box-shadow:inset 1px 0 rgba(0,0,12,.82);background:linear-gradient(#3085c5 0.0%,#68ba8c 2.3%,#3ea1ad 4.5%,#8ed16e 6.8%,#8ed06e 9.1%,#3b9faf 11.4%,#59b198 13.6%,#2f82c8 15.9%,#3289c2 18.2%,#3999b4 20.5%,#3085c6 22.7%,#3693b9 25.0%,#7bc57d 27.3%,#76c280 29.5%,#5bb296 31.8%,#205ee6 34.1%,#1a49d4 36.4%,#173abf 38.6%,#1638bb 40.9%,#1944cd 43.2%,#1840c7 45.5%,#1b4eda 47.7%,#1b4fdb 50.0%,#173bc1 52.3%,#1a4ad5 54.5%,#3188c3 56.8%,#2f83c7 59.1%,#2b79cf 61.4%,#8ace71 63.6%,#3289c2 65.9%,#276fd8 68.2%,#43a4a8 70.5%,#1638bc 72.7%,#205fe6 75.0%,#2e80c9 77.3%,#11239f 79.5%,#183fc6 81.8%,#1946cf 84.1%,#101e90 86.4%,#2468de 88.6%,#1840c8 90.9%,#1532b4 93.2%,#1531b2 95.5%,#1224a0 97.7%,#0f1c8a 100.0%)"></i><i style="position:absolute;left:847px;top:0;width:4px;height:100%;box-shadow:inset 1px 0 rgba(0,0,12,.82);background:linear-gradient(#caea4b 0.0%,#ecf240 2.3%,#e4f043 4.5%,#f4f43e 6.8%,#e1f044 9.1%,#b8e651 11.4%,#d7ed47 13.6%,#cfeb4a 15.9%,#caea4b 18.2%,#c1e84e 20.5%,#b7e652 22.7%,#c7e94c 25.0%,#e2f043 27.3%,#e5f142 29.5%,#daee46 31.8%,#86cc74 34.1%,#399ab3 36.4%,#3085c6 38.6%,#3085c5 40.9%,#399ab3 43.2%,#3b9db0 45.5%,#63b78f 47.7%,#66b98d 50.0%,#5db394 52.3%,#6fbe86 54.5%,#bce750 56.8%,#b9e651 59.1%,#a9e059 61.4%,#f4f43e 63.6%,#bee74f 65.9%,#98d666 68.2%,#c7ea4c 70.5%,#1d59e9 72.7%,#348ebd 75.0%,#58b198 77.3%,#2a76d2 79.5%,#3898b5 81.8%,#45a5a7 84.1%,#1a49d3 86.4%,#50ac9e 88.6%,#2d7fcb 90.9%,#2f83c7 93.2%,#1532b3 95.5%,#1226a3 97.7%,#0f1e8f 100.0%)"></i><i style="position:absolute;left:851px;top:0;width:4px;height:100%;box-shadow:inset 1px 0 rgba(0,0,12,.82);background:linear-gradient(#b2e453 0.0%,#9fda61 2.3%,#c1e84e 4.5%,#ade256 6.8%,#6fbe86 9.1%,#40a2ab 11.4%,#3ca0ae 13.6%,#85cb75 15.9%,#6fbe87 18.2%,#3b9db0 20.5%,#68ba8c 22.7%,#82c978 25.0%,#59b198 27.3%,#a3dd5d 29.5%,#93d36a 31.8%,#6cbc89 34.1%,#2162e3 36.4%,#1d57e7 38.6%,#1d58e8 40.9%,#1c52e0 43.2%,#2c7ccd 45.5%,#2f83c7 47.7%,#2469dd 50.0%,#3b9eaf 52.3%,#348ebd 54.5%,#45a5a7 56.8%,#94d469 59.1%,#3897b6 61.4%,#5fb593 63.6%,#3a9cb2 65.9%,#3186c4 68.2%,#54ae9b 70.5%,#11239e 72.7%,#1638bc 75.0%,#1b4eda 77.3%,#183fc5 79.5%,#256adc 81.8%,#2e80ca 84.1%,#0f1d8c 86.4%,#1a4cd7 88.6%,#1636b9 90.9%,#1841c8 93.2%,#1430b0 95.5%,#11239e 97.7%,#112199 100.0%)"></i><i style="position:absolute;left:855px;top:0;width:3px;height:100%;box-shadow:inset 1px 0 rgba(0,0,12,.82);background:linear-gradient(#399ab3 0.0%,#3b9db0 2.3%,#75c281 4.5%,#aae158 6.8%,#76c281 9.1%,#3289c2 11.4%,#74c182 13.6%,#266ed9 15.9%,#40a2ab 18.2%,#2c7ace 20.5%,#205fe6 22.7%,#266dda 25.0%,#3999b4 27.3%,#8ed06e 29.5%,#98d666 31.8%,#2469dd 34.1%,#2263e2 36.4%,#1a49d4 38.6%,#142eae 40.9%,#1228a5 43.2%,#1946d0 45.5%,#1636b9 47.7%,#1842cb 50.0%,#2770d7 52.3%,#2b79d0 54.5%,#399ab3 56.8%,#4ba8a3 59.1%,#1c54e3 61.4%,#3188c3 63.6%,#1a4ad5 65.9%,#1a49d4 68.2%,#2163e3 70.5%,#0a0d60 72.7%,#1329a7 75.0%,#2974d4 77.3%,#0e1b87 79.5%,#1b4edb 81.8%,#2b7acf 84.1%,#102095 86.4%,#1d58e8 88.6%,#1c54e2 90.9%,#173ec5 93.2%,#1841c8 95.5%,#1431b2 97.7%,#11239f 100.0%)"></i><i style="position:absolute;left:858px;top:0;width:4px;height:100%;box-shadow:inset 1px 0 rgba(0,0,12,.82);background:linear-gradient(#0b126f 0.0%,#0c1576 2.3%,#0d177d 4.5%,#0c1575 6.8%,#0c1370 9.1%,#0d1678 11.4%,#0f1b88 13.6%,#0f1c89 15.9%,#0f1c8b 18.2%,#0e1b87 20.5%,#0d187e 22.7%,#0f1c89 25.0%,#1329a8 27.3%,#1638bc 29.5%,#1431b2 31.8%,#132aa8 34.1%,#142fb0 36.4%,#1329a6 38.6%,#11239e 40.9%,#1328a6 43.2%,#142dad 45.5%,#1329a8 47.7%,#1534b6 50.0%,#142dac 52.3%,#142eae 54.5%,#163abf 56.8%,#173ec4 59.1%,#132cab 61.4%,#1945ce 63.6%,#102095 65.9%,#1228a6 68.2%,#1840c7 70.5%,#0f1d8e 72.7%,#11239d 75.0%,#1a4ad5 77.3%,#1329a7 79.5%,#1637bb 81.8%,#1b4dda 84.1%,#11239d 86.4%,#142dad 88.6%,#1840c7 90.9%,#11219a 93.2%,#0e1b87 95.5%,#0f1d8c 97.7%,#0e1a85 100.0%)"></i><i style="position:absolute;left:862px;top:0;width:4px;height:100%;box-shadow:inset 1px 0 rgba(0,0,12,.82);background:linear-gradient(#0a0e62 0.0%,#0a0e62 2.3%,#0a0f64 4.5%,#080a56 6.8%,#080a57 9.1%,#0b126c 11.4%,#0d177b 13.6%,#0d187f 15.9%,#0c1370 18.2%,#0b126c 20.5%,#0a0f65 22.7%,#0c1474 25.0%,#101f93 27.3%,#11229c 29.5%,#112198 31.8%,#11239d 34.1%,#1329a7 36.4%,#11229c 38.6%,#0f1d8d 40.9%,#0f1d8e 43.2%,#102197 45.5%,#101e91 47.7%,#112199 50.0%,#0e1b87 52.3%,#0f1c8b 54.5%,#11239d 56.8%,#11239f 59.1%,#101f94 61.4%,#1534b6 63.6%,#0d177b 65.9%,#0f1c89 68.2%,#132aa8 70.5%,#0e1981 72.7%,#0f1e8f 75.0%,#1639bd 77.3%,#112199 79.5%,#1224a0 81.8%,#1840c7 84.1%,#112199 86.4%,#102096 88.6%,#173abf 90.9%,#0f1d8c 93.2%,#0d1679 95.5%,#101e90 97.7%,#112198 100.0%)"></i></div>
<div class="sh" style="left:1332px;top:114px;width:540px;height:41px"></div>
<div class="t" style="top:126.56px;font-size:16px;line-height:16px;font-weight:700;color:#14161c;left:1348.80px;">Detection Result</div>
<div class="r" style="left:1571.70px;top:165.00px;width:60.50px;height:60.00px;border-radius:50%;background:#fbdfe0"></div>
<svg class="r" style="left:1589px;top:182.5px" width="26.5" height="23.5" viewBox="0 0 26.5 23.5"><defs><linearGradient id="wg" x1="0" y1="0" x2="0" y2="1"><stop offset="0" stop-color="#ffe36b"/><stop offset="1" stop-color="#f6b400"/></linearGradient></defs><path d="M13.25 0.8 C13.9 0.8 14.3 1.1 14.6 1.6 L26 21.6 C26.4 22.4 26 23.2 25 23.2 H1.5 C0.5 23.2 0.1 22.4 0.5 21.6 L11.9 1.6 C12.2 1.1 12.6 0.8 13.25 0.8Z" fill="url(#wg)"/><rect x="12.1" y="6" width="2.3" height="9.5" rx="1" fill="#1a1a1a"/><circle cx="13.25" cy="18.6" r="1.5" fill="#1a1a1a"/></svg>
<div class="t" style="top:241.59px;font-size:18.2px;line-height:18.2px;font-weight:700;color:#111827;left:1202.50px;width:800px;text-align:center;">AI Voice</div>
<div class="t" style="top:269.98px;font-size:12.9px;line-height:12.9px;color:#4b5563;left:1202.20px;width:800px;text-align:center;">Model classification for the last 7-second audio segment.</div>
<div class="r" style="left:1550.00px;top:302.10px;width:103.80px;height:24.40px;border-radius:13px;background:#fde1e1"></div>
<div class="t" style="top:308.69px;font-size:11px;line-height:11px;font-weight:700;color:#b91c1c;letter-spacing:0.3px;left:1202.00px;width:800px;text-align:center;">AI / DEEPFAKE</div>
<div class="t" style="top:343.35px;font-size:12.7px;line-height:12.7px;color:#4b5563;left:1332.70px;">Class probabilities</div>
<div class="r" style="left:1332.30px;top:365.30px;width:539.70px;height:44.60px;border:1px solid #e3e5ea;border-radius:11px;background:#f9fafb"></div>
<div class="t" style="top:375.81px;font-size:13.1px;line-height:13.1px;color:#1f2430;left:1343.80px;">Natural Voice</div>
<div class="t" style="top:375.90px;font-size:13px;line-height:13px;font-weight:700;color:#1f2430;right:56.80px;text-align:right;">6.0%</div>
<div class="r" style="left:1343.20px;top:396.10px;width:517.30px;height:4.90px;border-radius:3px;background:#e2e3e8"></div>
<div class="r" style="left:1343.20px;top:396.10px;width:30.00px;height:4.90px;border-radius:3px 0 0 3px;background:linear-gradient(90deg,#5a50e3,#a446ef)"></div>
<div class="r" style="left:1332.30px;top:418.40px;width:539.70px;height:44.60px;border:1px solid #e3e5ea;border-radius:11px;background:#f9fafb"></div>
<div class="t" style="top:428.91px;font-size:13.1px;line-height:13.1px;color:#1f2430;left:1343.80px;">AI Voice</div>
<div class="t" style="top:429.00px;font-size:13px;line-height:13px;font-weight:700;color:#1f2430;right:56.80px;text-align:right;">94.0%</div>
<div class="r" style="left:1343.20px;top:449.20px;width:517.30px;height:4.90px;border-radius:3px;background:#e2e3e8"></div>
<div class="r" style="left:1343.20px;top:449.20px;width:486.50px;height:4.90px;border-radius:3px 0 0 3px;background:linear-gradient(90deg,#5a50e3,#a446ef)"></div>
<div class="sh" style="left:1332px;top:521.2px;width:540px;height:41px"></div>
<div class="t" style="top:534.06px;font-size:16px;line-height:16px;font-weight:700;color:#14161c;left:1348.90px;">Model Details</div>
<div class="t" style="top:575.39px;font-size:13.6px;line-height:13.6px;color:#1f2430;left:1332.80px;">Model Accuracy</div>
<div class="t" style="top:575.39px;font-size:13.6px;line-height:13.6px;color:#1f2430;right:45.40px;text-align:right;">98%</div>
<div class="r" style="left:1332.00px;top:597.20px;width:540.00px;height:5.80px;border-radius:3px;background:#e2e3e8"></div>
<div class="t" style="top:616.49px;font-size:13.6px;line-height:13.6px;color:#1f2430;left:1332.80px;">Model Version</div>
<div class="t" style="top:616.49px;font-size:13.6px;line-height:13.6px;color:#1f2430;right:45.40px;text-align:right;">3.2</div>
<div class="r" style="left:1332.00px;top:639.00px;width:540.00px;height:5.80px;border-radius:3px;background:#e2e3e8"></div>
</body></html>
